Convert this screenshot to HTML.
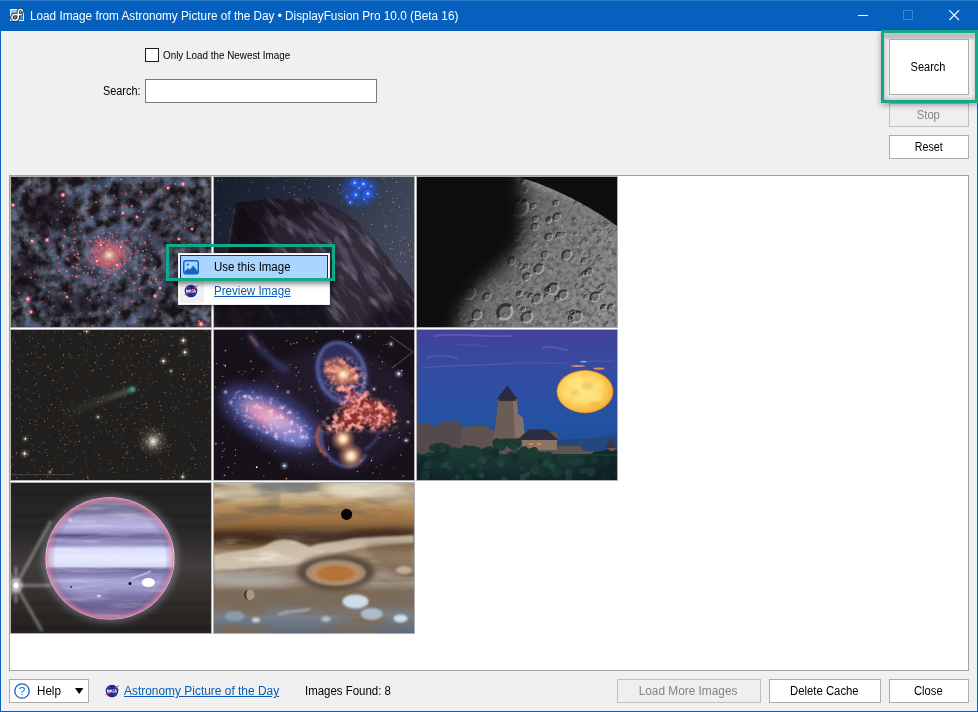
<!DOCTYPE html>
<html>
<head>
<meta charset="utf-8">
<title>Load Image from Astronomy Picture of the Day</title>
<style>
html,body{margin:0;padding:0;}
body{width:978px;height:712px;overflow:hidden;background:#f0f0f0;font-family:"Liberation Sans",sans-serif;font-size:12px;color:#000;position:relative;}
.abs{position:absolute;}
#win{position:absolute;left:0;top:0;width:976px;height:710px;border:1px solid #0961bd;background:#f0f0f0;}
#title{position:absolute;left:0;top:0;width:978px;height:31px;background:#0561bd;}
#title .cap{position:absolute;left:30px;top:9px;color:#fff;font-size:12px;line-height:15px;white-space:nowrap;}
.btn{position:absolute;box-sizing:border-box;padding-right:1.5px;border:1px solid #adadad;background:#fff;text-align:center;font-size:12px;line-height:22px;height:24px;white-space:nowrap;}
.btn.dis{background:#efefef;border-color:#bfbfbf;color:#838383;}
.green{position:absolute;box-sizing:border-box;border:3px solid #12a988;}
#panel{position:absolute;left:9px;top:175px;width:960px;height:496px;box-sizing:border-box;border:1px solid #a0a0a0;background:#fff;}
.cell{position:absolute;width:202px;height:152px;box-sizing:border-box;border:1px solid #b0b0b0;overflow:hidden;background:#111;}
.cell svg{display:block;width:200px;height:150px;}
.sx{display:inline-block;transform-origin:0 50%;white-space:nowrap;}
.btn .sx{transform-origin:50% 50%;}
a.lnk{color:#0a5bb8;text-decoration:underline;}
</style>
</head>
<body>
<div id="win"></div>

<!-- TITLE BAR -->
<div id="title">
  <svg class="abs" style="left:9px;top:7px" width="17" height="17" viewBox="0 0 17 17">
    <defs><linearGradient id="tig" x1="0" y1="0" x2="0" y2="1"><stop offset="0" stop-color="#a9d6f5"/><stop offset="1" stop-color="#1f78c4"/></linearGradient></defs>
    <rect x="1.5" y="2.5" width="13" height="11" fill="url(#tig)" stroke="#d8ecfa" stroke-width="1"/>
    <path d="M13.6 4.2 C13.2 2 10.2 1.6 9.4 4 L9.2 10.5 C9 13.8 4.4 14.2 3.2 11.6 C2.2 9 4.6 7 7 7.6 L12.6 7.6" fill="none" stroke="#111" stroke-width="3.2" stroke-linecap="round"/>
    <path d="M13.6 4.2 C13.2 2 10.2 1.6 9.4 4 L9.2 10.5 C9 13.8 4.4 14.2 3.2 11.6 C2.2 9 4.6 7 7 7.6 L12.6 7.6" fill="none" stroke="#f4f4f4" stroke-width="1.7" stroke-linecap="round"/>
  </svg>
  <div class="abs" style="left:0;top:0;width:978px;height:1px;background:#2a79c9"></div><div class="cap"><span class="sx" style="transform:scaleX(.980)">Load Image from Astronomy Picture of the Day &#8226; DisplayFusion Pro 10.0 (Beta 16)</span></div>
  <!-- caption buttons -->
  <div class="abs" style="left:858px;top:15px;width:10px;height:1px;background:#fff"></div>
  <div class="abs" style="left:903px;top:10px;width:10px;height:10px;box-sizing:border-box;border:1px solid #3f86cf"></div>
  <svg class="abs" style="left:949px;top:10px" width="11" height="11" viewBox="0 0 11 11"><path d="M0.3 0.3 L10 10 M10 0.3 L0.3 10" stroke="#fff" stroke-width="1.15" fill="none"/></svg>
</div>

<!-- TOP CONTROLS -->
<div class="abs" style="left:145px;top:48px;width:14px;height:14px;box-sizing:border-box;border:1px solid #1a1a1a;background:#fff"></div>
<div class="abs" style="left:163px;top:48px;font-size:10.5px;line-height:14px;white-space:nowrap;"><span class="sx" style="transform:scaleX(.94)">Only Load the Newest Image</span></div>
<div class="abs" style="left:103px;top:84px;font-size:12px;line-height:15px;white-space:nowrap;"><span class="sx" style="transform:scaleX(.907)">Search:</span></div>
<div class="abs" style="left:145px;top:79px;width:232px;height:24px;box-sizing:border-box;border:1px solid #7a7a7a;background:#fff"></div>

<!-- RIGHT BUTTONS -->
<div class="btn dis" style="left:889px;top:103px;width:80px;"><span class="sx" style="transform:scaleX(.93)">Stop</span></div>
<div class="btn" style="left:889px;top:135px;width:80px;"><span class="sx" style="transform:scaleX(.89)">Reset</span></div>
<div class="abs" style="left:884px;top:33px;width:92px;height:67px;background:#f0f0f0;box-shadow:inset 0 0 4px 1px rgba(0,0,0,.22);"></div>
<div class="abs" style="left:884px;top:33px;width:91px;height:7px;background:linear-gradient(to bottom,#c2c2c2,#bdbdbd 55%,#d2d2d2 85%,rgba(225,225,225,0));"></div>
<div class="btn" style="left:889px;top:39px;width:80px;height:56px;line-height:54px;"><span class="sx" style="transform:scaleX(.916)">Search</span></div>
<div class="green" style="left:881px;top:30px;width:97px;height:73px;box-shadow:0 2px 6px rgba(0,0,0,.35);"></div>

<!-- PANEL -->
<div id="panel"></div>
<div class="cell" style="left:10px;top:176px;" id="c1"><svg width="200" height="150" viewBox="0 0 200 150"><defs><radialGradient id="g1c" cx="0.5" cy="0.5" r="0.5"><stop offset="0" stop-color="#fff0e0" stop-opacity="1"/><stop offset="0.1" stop-color="#f0c0a8" stop-opacity=".9"/><stop offset="0.3" stop-color="#c07078" stop-opacity=".45"/><stop offset="0.65" stop-color="#68607c" stop-opacity=".22"/><stop offset="1" stop-color="#404a68" stop-opacity="0"/></radialGradient><radialGradient id="g1k"><stop offset="0" stop-color="#fff0f0"/><stop offset=".25" stop-color="#ffb0b8" stop-opacity=".95"/><stop offset=".55" stop-color="#e85868" stop-opacity=".6"/><stop offset="1" stop-color="#e04858" stop-opacity="0"/></radialGradient><filter id="g1b" x="-30%" y="-30%" width="160%" height="160%"><feGaussianBlur stdDeviation="3"/></filter><filter id="g1b2" x="-20%" y="-20%" width="140%" height="140%"><feGaussianBlur stdDeviation="0.75"/></filter><filter id="g1n" x="0" y="0" width="100%" height="100%"><feTurbulence type="fractalNoise" baseFrequency="0.1" numOctaves="4" seed="4" result="n"/><feColorMatrix in="n" type="matrix" values="0 0 0 0 0.30  0 0 0 0 0.37  0 0 0 0 0.52  0.0 0 0 1.9 -0.62"/></filter><filter id="g1d" x="0" y="0" width="100%" height="100%"><feTurbulence type="fractalNoise" baseFrequency="0.11" numOctaves="2" seed="9" result="n"/><feDisplacementMap in="SourceGraphic" in2="n" scale="10"/><feGaussianBlur stdDeviation="1.1"/></filter></defs><rect width="200" height="150" fill="#1a1418"/><rect width="200" height="150" filter="url(#g1n)" opacity=".75"/><g filter="url(#g1d)"><path d="M103.5 83.5 L103.0 84.1 L102.3 84.7 L101.6 85.2 L100.7 85.7 L99.8 86.1 L98.8 86.5 L97.7 86.8 L96.5 87.1 L95.2 87.2 L94.0 87.3 L92.6 87.2 L91.2 87.1 L89.8 86.8 L88.4 86.4 L87.1 85.8 L85.7 85.2 L84.4 84.4 L83.1 83.5 L82.0 82.5 L80.9 81.3 L80.0 80.0 L79.2 78.6 L78.5 77.1 L78.1 75.5 L77.8 73.8 L77.8 72.1 L78.0 70.3 L78.4 68.4 L79.1 66.6 L80.1 64.7 L81.3 62.9 L82.8 61.1 L84.6 59.3 L86.6 57.7 L89.0 56.2 L91.6 54.8 L94.5 53.6 L97.6 52.6 L100.9 51.8 L104.5 51.3 L108.2 51.0 L112.1 51.1 L116.0 51.4 L120.1 52.1 L124.1 53.1 L128.2 54.5 L132.2 56.2 L136.1 58.4 L139.8 60.9 L143.3 63.7 L146.5 67.0 L149.4 70.6 L151.9 74.5 L153.9 78.7 L155.4 83.3 L156.4 88.1 L156.8 93.1 L156.6 98.3 L155.6 103.6 L153.9 109.0 L151.5 114.5 L148.2 119.9 L144.2 125.2 L139.3 130.3 L133.6 135.2 L127.1 139.7 L119.9 143.9 L111.8 147.6 L103.0 150.8 L93.6 153.3 L83.5 155.2 L72.9 156.3 L61.8 156.5 L50.4 155.9 L38.7 154.4 L26.9 151.8 L15.1 148.2" fill="none" stroke="#566c94" stroke-width="9" stroke-linecap="round" opacity="0.55"/><path d="M92.5 72.5 L93.0 71.9 L93.7 71.3 L94.4 70.8 L95.3 70.3 L96.2 69.9 L97.2 69.5 L98.3 69.2 L99.5 68.9 L100.8 68.8 L102.0 68.7 L103.4 68.8 L104.8 68.9 L106.2 69.2 L107.6 69.6 L108.9 70.2 L110.3 70.8 L111.6 71.6 L112.9 72.5 L114.0 73.5 L115.1 74.7 L116.0 76.0 L116.8 77.4 L117.5 78.9 L117.9 80.5 L118.2 82.2 L118.2 83.9 L118.0 85.7 L117.6 87.6 L116.9 89.4 L115.9 91.3 L114.7 93.1 L113.2 94.9 L111.4 96.7 L109.4 98.3 L107.0 99.8 L104.4 101.2 L101.5 102.4 L98.4 103.4 L95.1 104.2 L91.5 104.7 L87.8 105.0 L83.9 104.9 L80.0 104.6 L75.9 103.9 L71.9 102.9 L67.8 101.5 L63.8 99.8 L59.9 97.6 L56.2 95.1 L52.7 92.3 L49.5 89.0 L46.6 85.4 L44.1 81.5 L42.1 77.3 L40.6 72.7 L39.6 67.9 L39.2 62.9 L39.4 57.7 L40.4 52.4 L42.1 47.0 L44.5 41.5 L47.8 36.1 L51.8 30.8 L56.7 25.7 L62.4 20.8 L68.9 16.3 L76.1 12.1 L84.2 8.4 L93.0 5.2 L102.4 2.7 L112.5 0.8 L123.1 -0.3 L134.2 -0.5 L145.6 0.1 L157.3 1.6 L169.1 4.2 L180.9 7.8" fill="none" stroke="#566c94" stroke-width="9" stroke-linecap="round" opacity="0.55"/><path d="M90.9 82.2 L90.1 81.7 L89.4 81.2 L88.7 80.6 L88.1 79.9 L87.5 79.2 L87.1 78.4 L86.7 77.5 L86.4 76.6 L86.3 75.6 L86.3 74.6 L86.4 73.5 L86.6 72.4 L87.0 71.4 L87.6 70.3 L88.3 69.2 L89.2 68.2 L90.2 67.2 L91.4 66.2 L92.8 65.3 L94.3 64.5 L96.0 63.8 L97.8 63.3 L99.7 62.8 L101.8 62.5 L103.9 62.3 L106.2 62.4 L108.5 62.6 L110.8 63.0 L113.2 63.5 L115.5 64.3 L117.8 65.4 L120.1 66.6 L122.2 68.0 L124.3 69.7 L126.1 71.6 L127.8 73.7 L129.3 76.0 L130.4 78.4 L131.3 81.1 L131.9 83.8 L132.1 86.8 L132.0 89.8 L131.4 92.9 L130.5 96.0 L129.0 99.2 L127.2 102.3 L124.8 105.4 L122.0 108.3 L118.7 111.2 L114.9 113.8 L110.7 116.2 L106.0 118.4 L100.9 120.2 L95.4 121.7 L89.6 122.8 L83.4 123.4 L77.0 123.6 L70.4 123.2 L63.6 122.3 L56.7 120.8 L49.9 118.8 L43.1 116.1 L36.4 112.8 L30.0 108.8 L24.0 104.2 L18.3 99.0 L13.2 93.2 L8.7 86.8 L4.9 79.8 L2.0 72.3 L-0.1 64.4 L-1.2 56.1 L-1.2 47.4 L-0.1 38.5 L2.2 29.4 L5.8 20.2 L10.7 11.1" fill="none" stroke="#566c94" stroke-width="6" stroke-linecap="round" opacity="0.42"/><path d="M105.1 73.8 L105.9 74.3 L106.6 74.8 L107.3 75.4 L107.9 76.1 L108.5 76.8 L108.9 77.6 L109.3 78.5 L109.6 79.4 L109.7 80.4 L109.7 81.4 L109.6 82.5 L109.4 83.6 L109.0 84.6 L108.4 85.7 L107.7 86.8 L106.8 87.8 L105.8 88.8 L104.6 89.8 L103.2 90.7 L101.7 91.5 L100.0 92.2 L98.2 92.7 L96.3 93.2 L94.2 93.5 L92.1 93.7 L89.8 93.6 L87.5 93.4 L85.2 93.0 L82.8 92.5 L80.5 91.7 L78.2 90.6 L75.9 89.4 L73.8 88.0 L71.7 86.3 L69.9 84.4 L68.2 82.3 L66.7 80.0 L65.6 77.6 L64.7 74.9 L64.1 72.2 L63.9 69.2 L64.0 66.2 L64.6 63.1 L65.5 60.0 L67.0 56.8 L68.8 53.7 L71.2 50.6 L74.0 47.7 L77.3 44.8 L81.1 42.2 L85.3 39.8 L90.0 37.6 L95.1 35.8 L100.6 34.3 L106.4 33.2 L112.6 32.6 L119.0 32.4 L125.6 32.8 L132.4 33.7 L139.3 35.2 L146.1 37.2 L152.9 39.9 L159.6 43.2 L166.0 47.2 L172.0 51.8 L177.7 57.0 L182.8 62.8 L187.3 69.2 L191.1 76.2 L194.0 83.7 L196.1 91.6 L197.2 99.9 L197.2 108.6 L196.1 117.5 L193.8 126.6 L190.2 135.8 L185.3 144.9" fill="none" stroke="#566c94" stroke-width="6" stroke-linecap="round" opacity="0.42"/><path d="M96.9 84.9 L95.9 85.0 L94.9 85.1 L93.9 85.0 L92.8 84.9 L91.8 84.7 L90.7 84.4 L89.7 84.0 L88.6 83.5 L87.6 82.9 L86.7 82.2 L85.8 81.4 L85.0 80.5 L84.3 79.5 L83.7 78.5 L83.2 77.3 L82.8 76.1 L82.6 74.8 L82.6 73.5 L82.7 72.1 L83.1 70.7 L83.6 69.3 L84.3 67.9 L85.3 66.5 L86.4 65.1 L87.8 63.8 L89.4 62.5 L91.1 61.4 L93.1 60.3 L95.3 59.4 L97.7 58.7 L100.2 58.1 L102.9 57.7 L105.8 57.5 L108.7 57.5 L111.7 57.7 L114.8 58.3 L117.9 59.0 L121.0 60.1 L124.0 61.4 L127.0 63.0 L129.8 64.9 L132.5 67.1 L134.9 69.6 L137.1 72.3 L139.0 75.3 L140.6 78.6 L141.8 82.0 L142.5 85.7 L142.8 89.5 L142.6 93.5 L141.9 97.5 L140.6 101.6 L138.7 105.8 L136.3 109.9 L133.2 113.9 L129.5 117.8 L125.2 121.5 L120.2 125.0 L114.6 128.2 L108.5 131.0 L101.8 133.4 L94.6 135.4 L87.0 136.8 L78.9 137.6 L70.4 137.8 L61.7 137.4 L52.8 136.2 L43.8 134.2 L34.8 131.5 L25.9 128.0 L17.2 123.6 L8.8 118.4 L0.8 112.4 L-6.6 105.6 L-13.3 97.9 L-19.2 89.5 L-24.2 80.4" fill="none" stroke="#566c94" stroke-width="4" stroke-linecap="round" opacity="0.3"/><path d="M99.1 71.1 L100.1 71.0 L101.1 70.9 L102.1 71.0 L103.2 71.1 L104.2 71.3 L105.3 71.6 L106.3 72.0 L107.4 72.5 L108.4 73.1 L109.3 73.8 L110.2 74.6 L111.0 75.5 L111.7 76.5 L112.3 77.5 L112.8 78.7 L113.2 79.9 L113.4 81.2 L113.4 82.5 L113.3 83.9 L112.9 85.3 L112.4 86.7 L111.7 88.1 L110.7 89.5 L109.6 90.9 L108.2 92.2 L106.6 93.5 L104.9 94.6 L102.9 95.7 L100.7 96.6 L98.3 97.3 L95.8 97.9 L93.1 98.3 L90.2 98.5 L87.3 98.5 L84.3 98.3 L81.2 97.7 L78.1 97.0 L75.0 95.9 L72.0 94.6 L69.0 93.0 L66.2 91.1 L63.5 88.9 L61.1 86.4 L58.9 83.7 L57.0 80.7 L55.4 77.4 L54.2 74.0 L53.5 70.3 L53.2 66.5 L53.4 62.5 L54.1 58.5 L55.4 54.4 L57.3 50.2 L59.7 46.1 L62.8 42.1 L66.5 38.2 L70.8 34.5 L75.8 31.0 L81.4 27.8 L87.5 25.0 L94.2 22.6 L101.4 20.6 L109.0 19.2 L117.1 18.4 L125.6 18.2 L134.3 18.6 L143.2 19.8 L152.2 21.8 L161.2 24.5 L170.1 28.0 L178.8 32.4 L187.2 37.6 L195.2 43.6 L202.6 50.4 L209.3 58.1 L215.2 66.5 L220.2 75.6" fill="none" stroke="#566c94" stroke-width="4" stroke-linecap="round" opacity="0.3"/></g><ellipse cx="38" cy="36" rx="24" ry="20" fill="#150e12" opacity="0.7" filter="url(#g1b)"/><ellipse cx="14" cy="98" rx="14" ry="22" fill="#150e12" opacity="0.6" filter="url(#g1b)"/><ellipse cx="62" cy="128" rx="24" ry="12" fill="#150e12" opacity="0.55" filter="url(#g1b)"/><ellipse cx="182" cy="104" rx="16" ry="26" fill="#150e12" opacity="0.6" filter="url(#g1b)"/><ellipse cx="120" cy="20" rx="16" ry="8" fill="#150e12" opacity="0.35" filter="url(#g1b)"/><ellipse cx="150" cy="130" rx="18" ry="9" fill="#150e12" opacity="0.45" filter="url(#g1b)"/><ellipse cx="62" cy="84" rx="8" ry="14" fill="#150e12" opacity="0.4" filter="url(#g1b)"/><ellipse cx="142" cy="66" rx="8" ry="14" fill="#150e12" opacity="0.35" filter="url(#g1b)"/><ellipse cx="98" cy="120" rx="14" ry="7" fill="#150e12" opacity="0.3" filter="url(#g1b)"/><g filter="url(#g1d)"><path d="M102.7 80.5 L102.5 81.1 L102.2 81.6 L101.7 82.2 L101.2 82.7 L100.6 83.1 L99.8 83.6 L99.0 83.9 L98.1 84.2 L97.1 84.5 L96.0 84.6 L94.9 84.6 L93.8 84.5 L92.6 84.4 L91.4 84.0 L90.2 83.6 L89.0 83.0 L87.9 82.3 L86.9 81.5 L85.9 80.5 L85.1 79.4 L84.5 78.2 L84.0 76.9 L83.7 75.5 L83.6 74.0 L83.7 72.5 L84.1 70.9 L84.7 69.3 L85.7 67.7 L86.9 66.1 L88.4 64.7 L90.2 63.3 L92.3 62.0 L94.6 60.9 L97.3 60.0" fill="none" stroke="#d87880" stroke-width="3.2" stroke-linecap="round" opacity=".55"/><path d="M93.3 75.5 L93.5 74.9 L93.8 74.4 L94.3 73.8 L94.8 73.3 L95.4 72.9 L96.2 72.4 L97.0 72.1 L97.9 71.8 L98.9 71.5 L100.0 71.4 L101.1 71.4 L102.2 71.5 L103.4 71.6 L104.6 72.0 L105.8 72.4 L107.0 73.0 L108.1 73.7 L109.1 74.5 L110.1 75.5 L110.9 76.6 L111.5 77.8 L112.0 79.1 L112.3 80.5 L112.4 82.0 L112.3 83.5 L111.9 85.1 L111.3 86.7 L110.3 88.3 L109.1 89.9 L107.6 91.3 L105.8 92.7 L103.7 94.0 L101.4 95.1 L98.7 96.0" fill="none" stroke="#d87880" stroke-width="3.2" stroke-linecap="round" opacity=".55"/><path d="M94.6 81.6 L93.9 81.4 L93.2 81.2 L92.6 80.8 L91.9 80.4 L91.4 79.8 L90.8 79.3 L90.4 78.6 L90.0 77.9 L89.8 77.1 L89.6 76.3 L89.6 75.4 L89.8 74.5 L90.0 73.6 L90.5 72.6 L91.1 71.7 L91.8 70.8 L92.8 70.0 L93.9 69.2 L95.1 68.5 L96.5 67.9 L98.1 67.4 L99.8 67.0 L101.6 66.8 L103.5 66.8 L105.5 67.0 L107.5 67.3 L109.5 67.9 L111.5 68.7 L113.5 69.7 L115.3 70.9 L117.0 72.3 L118.6 74.0 L119.9 75.9 L121.0 77.9" fill="none" stroke="#d87880" stroke-width="3.2" stroke-linecap="round" opacity=".55"/><path d="M101.4 74.4 L102.1 74.6 L102.8 74.8 L103.4 75.2 L104.1 75.6 L104.6 76.2 L105.2 76.7 L105.6 77.4 L106.0 78.1 L106.2 78.9 L106.4 79.7 L106.4 80.6 L106.2 81.5 L106.0 82.4 L105.5 83.4 L104.9 84.3 L104.2 85.2 L103.2 86.0 L102.1 86.8 L100.9 87.5 L99.5 88.1 L97.9 88.6 L96.2 89.0 L94.4 89.2 L92.5 89.2 L90.5 89.0 L88.5 88.7 L86.5 88.1 L84.5 87.3 L82.5 86.3 L80.7 85.1 L79.0 83.7 L77.4 82.0 L76.1 80.1 L75.0 78.1" fill="none" stroke="#d87880" stroke-width="3.2" stroke-linecap="round" opacity=".55"/></g><ellipse cx="98" cy="78" rx="30" ry="26" fill="url(#g1c)"/><g filter="url(#g1b2)"><path d="M100.9 82.4h0M99.2 86.3h0M85.8 84.6h0M78.9 64.4h0M151.5 73.7h0M114.5 94.1h0M103.6 98.1h0M65.9 99.8h0M55.8 94.2h0M110.1 2.5h0M85.4 73.7h0M89.9 65.0h0M106.1 64.4h0M106.1 64.5h0M128.4 98.0h0M123.3 106.2h0M108.3 74.7h0M109.0 87.0h0M67.0 76.9h0M81.1 40.0h0M120.7 29.0h0M80.9 74.5h0M87.5 60.1h0M145.1 102.3h0M128.5 111.6h0M97.1 134.6h0M-15.7 102.7h0M99.0 71.9h0M56.4 81.9h0M130.1 15.1h0" stroke="#f08088" stroke-width="2.2" stroke-linecap="round" fill="none" opacity=".8"/><path d="M102.9 83.1h0M96.9 87.4h0M86.5 87.8h0M130.3 51.8h0M144.0 133.6h0M123.9 144.9h0M89.4 154.2h0M22.9 151.0h0M95.3 68.7h0M89.9 106.7h0M64.6 99.3h0M48.5 93.8h0M91.8 82.2h0M85.1 79.9h0M88.4 65.9h0M97.9 63.3h0M115.6 63.4h0M133.5 90.8h0M103.7 121.0h0M20.0 100.6h0M107.5 74.6h0M97.3 92.9h0M66.6 87.4h0M68.4 81.5h0M103.1 34.8h0M188.1 144.2h0M81.5 72.4h0M134.1 65.3h0M140.8 82.4h0M144.4 90.3h0M108.5 135.4h0M100.3 71.2h0M101.0 72.6h0M101.7 69.6h0M105.3 70.7h0M107.9 90.1h0M77.0 96.4h0M65.7 91.0h0M62.2 89.9h0M52.2 68.6h0M53.9 59.4h0M85.1 25.1h0M167.1 24.9h0" stroke="#e86a70" stroke-width="2.2" stroke-linecap="round" fill="none" opacity=".8"/><path d="M102.8 84.6h0M80.2 80.3h0M80.1 64.3h0M107.0 51.2h0M113.2 46.9h0M117.3 52.9h0M126.0 143.8h0M73.7 153.1h0M91.9 70.1h0M113.8 75.0h0M111.6 96.0h0M108.7 99.9h0M97.0 104.1h0M83.8 107.7h0M37.9 65.3h0M37.3 60.9h0M58.8 29.3h0M88.4 80.4h0M86.0 73.1h0M121.5 69.6h0M118.6 112.7h0M4.4 65.1h0M1.1 40.7h0M110.2 80.1h0M102.6 89.6h0M68.9 84.0h0M66.3 59.9h0M80.7 43.3h0M185.0 79.3h0M197.2 128.3h0M84.4 80.4h0M142.3 92.3h0M141.2 110.6h0M-15.7 94.5h0M101.0 71.2h0M105.0 72.3h0M112.6 83.6h0M87.3 100.7h0M192.5 41.7h0" stroke="#f08088" stroke-width="1.0" stroke-linecap="round" fill="none" opacity=".8"/><path d="M103.1 85.3h0M99.9 87.2h0M99.5 85.5h0M94.3 91.3h0M77.3 67.3h0M85.6 56.3h0M128.1 54.1h0M147.9 69.9h0M107.5 69.9h0M114.4 89.6h0M44.8 77.9h0M86.2 78.2h0M98.1 62.2h0M122.7 100.0h0M4.1 72.7h0M-0.9 35.7h0M107.8 77.4h0M107.9 78.0h0M109.3 84.4h0M92.7 95.9h0M83.9 90.4h0M81.4 89.9h0M74.1 90.5h0M183.8 125.4h0M193.2 130.3h0M138.0 67.9h0M4.9 114.0h0M103.9 72.5h0M111.0 87.9h0M69.6 92.7h0M56.7 75.8h0M78.7 34.6h0M200.9 48.7h0" stroke="#e0505c" stroke-width="1.0" stroke-linecap="round" fill="none" opacity=".8"/><path d="M101.6 85.5h0M81.7 85.9h0M75.2 64.5h0M80.8 64.5h0M91.8 53.3h0M94.2 70.3h0M98.4 68.7h0M101.9 70.5h0M84.2 106.0h0M83.7 102.7h0M46.4 42.6h0M87.5 66.4h0M78.9 123.2h0M38.0 114.8h0M66.9 81.1h0M66.1 79.8h0M63.8 54.8h0M89.9 85.0h0M81.4 79.8h0M83.7 72.0h0M105.7 58.9h0M134.2 66.4h0M137.9 104.4h0M118.8 123.8h0M103.0 73.3h0M102.0 70.9h0M99.1 96.5h0M61.3 89.4h0" stroke="#d84858" stroke-width="2.2" stroke-linecap="round" fill="none" opacity=".8"/><path d="M101.6 84.4h0M118.7 50.1h0M155.5 86.2h0M59.6 160.7h0M90.9 71.2h0M109.3 70.9h0M120.6 77.1h0M118.9 81.5h0M93.0 103.5h0M47.1 80.5h0M100.8 2.7h0M129.7 5.5h0M142.3 0.7h0M164.2 7.0h0M88.1 74.5h0M88.8 66.2h0M92.3 65.6h0M111.2 64.7h0M102.7 92.0h0M99.7 93.3h0M96.4 95.9h0M88.7 95.0h0M82.9 91.0h0M62.1 73.1h0M132.4 34.7h0M197.9 95.6h0M85.9 83.8h0M132.2 73.9h0M135.0 72.6h0M139.8 106.0h0M121.3 124.7h0M113.8 86.6h0M53.5 52.8h0M184.7 37.9h0" stroke="#f08088" stroke-width="1.8" stroke-linecap="round" fill="none" opacity=".8"/><path d="M102.3 86.6h0M76.6 67.1h0M124.8 53.4h0M138.7 58.7h0M154.7 73.9h0M110.8 154.0h0M93.2 72.8h0M93.0 74.6h0M93.7 70.9h0M61.6 98.5h0M47.9 86.2h0M41.3 73.8h0M50.3 34.9h0M83.5 8.9h0M141.3 1.6h0M94.9 61.3h0M132.2 82.9h0M91.3 120.3h0M23.6 95.0h0M-0.4 83.0h0M1.3 74.9h0M110.0 76.2h0M105.9 74.3h0M110.0 78.9h0M60.9 70.0h0M111.6 30.2h0M198.8 101.8h0M90.8 84.2h0M83.6 74.9h0M85.7 65.2h0M84.8 63.8h0M101.4 57.5h0M129.4 67.3h0M139.1 100.1h0M131.1 110.7h0" stroke="#e0505c" stroke-width="2.2" stroke-linecap="round" fill="none" opacity=".8"/><path d="M96.9 86.5h0M93.1 87.7h0M91.1 89.4h0M82.0 82.9h0M77.4 75.8h0M123.4 53.7h0M74.7 160.8h0M50.1 154.5h0M94.9 72.1h0M103.6 68.9h0M57.8 99.0h0M47.5 91.1h0M86.5 77.5h0M86.8 72.4h0M112.7 63.8h0M131.4 94.6h0M132.2 96.4h0M104.0 116.5h0M13.7 96.9h0M0.2 75.5h0M0.4 42.3h0M109.1 86.7h0M104.4 90.9h0M69.6 54.3h0M128.2 34.4h0M152.1 41.4h0M159.9 39.3h0M170.6 45.7h0M164.8 48.7h0M173.8 51.0h0M179.2 66.7h0M189.5 75.5h0M95.6 84.1h0M89.6 86.9h0M92.0 81.7h0M83.6 67.4h0M130.8 61.2h0M142.6 74.6h0M104.8 128.7h0M31.3 124.9h0M114.4 81.0h0M99.1 94.2h0M56.5 77.0h0M200.2 48.3h0" stroke="#d84858" stroke-width="1.8" stroke-linecap="round" fill="none" opacity=".8"/><path d="M96.0 89.7h0M96.4 55.7h0M125.1 53.0h0M133.7 54.5h0M129.8 131.1h0M42.4 154.6h0M39.3 54.3h0M90.6 9.5h0M145.6 -3.2h0M89.3 78.4h0M89.3 77.1h0M90.5 70.3h0M93.7 64.3h0M90.1 92.4h0M68.4 87.1h0M65.3 73.3h0M71.3 50.0h0M74.6 39.0h0M92.5 37.3h0M140.7 41.1h0M181.7 52.2h0M199.5 90.3h0M183.3 148.3h0M88.4 83.6h0M88.7 62.8h0M116.6 60.2h0M119.2 58.9h0M140.3 78.6h0M115.5 127.7h0M53.9 137.1h0M-21.0 80.8h0M106.6 71.1h0M108.8 70.8h0M111.9 74.2h0M110.6 88.9h0M106.1 92.8h0M92.8 99.7h0M65.7 44.7h0M95.5 24.0h0M165.1 22.1h0M188.3 38.6h0M195.1 45.6h0" stroke="#e86a70" stroke-width="1.0" stroke-linecap="round" fill="none" opacity=".8"/><path d="M91.4 87.0h0M82.6 82.4h0M81.4 148.5h0M66.5 160.7h0M42.0 153.6h0M96.4 68.2h0M102.8 69.8h0M113.5 73.3h0M111.7 72.8h0M119.6 80.4h0M112.0 95.2h0M76.0 106.0h0M98.1 58.9h0M110.2 63.8h0M115.3 114.1h0M7.8 88.3h0M13.0 14.4h0M106.4 91.2h0M116.5 30.9h0M174.1 44.6h0M185.7 61.6h0M95.8 86.0h0M95.0 86.0h0M83.6 76.4h0M143.0 91.8h0M10.8 122.9h0M113.6 78.9h0M109.1 88.1h0M103.9 96.5h0M99.1 96.2h0M105.0 21.4h0M114.9 18.3h0M221.2 69.5h0" stroke="#f08088" stroke-width="1.4" stroke-linecap="round" fill="none" opacity=".8"/><path d="M92.1 87.5h0M144.6 133.9h0M99.7 67.8h0M106.2 73.0h0M119.1 84.0h0M100.4 105.2h0M74.4 103.8h0M72.9 102.3h0M40.4 46.1h0M90.4 82.1h0M87.0 71.0h0M106.3 63.7h0M126.1 75.5h0M99.5 115.0h0M47.9 116.7h0M24.5 102.5h0M110.7 78.8h0M110.0 81.0h0M96.2 93.0h0M67.1 74.8h0M62.0 68.7h0M92.3 85.1h0M86.3 81.2h0M86.0 63.8h0M89.0 62.8h0M100.8 56.8h0M120.4 61.4h0M88.0 133.9h0M101.9 72.1h0M111.1 72.6h0M110.7 73.4h0M108.6 91.4h0M103.6 97.9h0M76.2 98.3h0M54.3 74.5h0M65.8 40.5h0M76.3 31.4h0M129.8 17.5h0" stroke="#e0505c" stroke-width="1.4" stroke-linecap="round" fill="none" opacity=".8"/><path d="M90.1 88.9h0M87.9 82.7h0M156.9 92.5h0M150.4 105.2h0M151.9 116.4h0M145.9 128.8h0M83.3 151.5h0M106.7 68.7h0M108.5 72.4h0M116.9 76.1h0M113.1 92.5h0M52.5 91.6h0M42.8 78.1h0M43.1 67.6h0M89.3 81.7h0M85.9 72.1h0M86.5 68.1h0M93.5 65.9h0M124.3 70.2h0M118.1 113.0h0M60.7 125.2h0M8.9 22.3h0M13.1 13.7h0M81.2 92.8h0M75.0 89.4h0M73.2 89.4h0M197.8 111.6h0M97.1 87.5h0M84.2 82.6h0M94.6 61.7h0M57.1 140.5h0M108.9 86.3h0M61.8 41.6h0M67.2 39.4h0M73.9 31.5h0" stroke="#e86a70" stroke-width="1.4" stroke-linecap="round" fill="none" opacity=".8"/><path d="M86.0 85.4h0M84.0 60.1h0M86.9 58.9h0M92.6 56.5h0M98.8 55.5h0M113.4 51.4h0M155.7 96.1h0M155.4 102.2h0M112.7 75.1h0M51.6 24.5h0M52.9 28.7h0M94.9 8.9h0M87.5 75.6h0M87.3 69.0h0M94.7 63.7h0M101.8 59.8h0M120.4 66.3h0M126.9 74.0h0M130.3 78.5h0M133.3 83.2h0M76.5 121.3h0M59.8 124.4h0M33.0 110.1h0M105.3 79.3h0M108.6 86.7h0M63.7 77.9h0M63.2 65.7h0M63.0 62.0h0M115.3 29.1h0M158.4 47.4h0M188.5 127.0h0M95.9 86.4h0M95.0 86.1h0M90.2 63.5h0M106.4 55.6h0M78.9 136.4h0M42.3 129.3h0M8.1 115.9h0M80.8 95.5h0M72.5 95.8h0M94.5 18.6h0M103.0 18.6h0" stroke="#e86a70" stroke-width="1.8" stroke-linecap="round" fill="none" opacity=".8"/><path d="M82.0 81.9h0M85.2 82.3h0M98.1 54.3h0M158.9 94.8h0M98.9 68.2h0M116.5 78.1h0M116.6 76.0h0M120.7 83.6h0M113.2 90.5h0M39.9 55.8h0M47.5 34.0h0M124.5 67.6h0M114.5 109.9h0M86.9 119.6h0M2.1 73.2h0M104.8 74.1h0M106.8 75.2h0M110.2 81.4h0M102.2 92.0h0M98.5 93.0h0M92.8 96.3h0M88.3 37.5h0M144.1 37.4h0M169.8 50.9h0M183.1 67.9h0M110.3 58.7h0M124.1 124.9h0M102.3 130.9h0M69.7 135.9h0M61.3 140.3h0M47.8 136.5h0M113.3 80.0h0M73.2 92.7h0M56.3 60.8h0" stroke="#d84858" stroke-width="1.0" stroke-linecap="round" fill="none" opacity=".8"/><path d="M79.6 76.2h0M106.3 52.8h0M130.0 139.7h0M113.8 76.2h0M91.7 104.6h0M67.8 98.9h0M88.4 81.5h0M133.6 78.7h0M131.8 93.6h0M135.2 90.5h0M8.9 87.1h0M-0.2 26.6h0M77.9 90.7h0M64.6 62.2h0M90.9 38.4h0M95.4 84.2h0M91.0 83.2h0M90.2 85.3h0M82.7 75.0h0M142.0 101.3h0M113.8 83.5h0M97.5 96.6h0M93.8 99.7h0M58.0 83.6h0M52.9 71.1h0M73.9 41.2h0M115.3 16.1h0M141.2 17.7h0M150.6 19.8h0" stroke="#e0505c" stroke-width="1.8" stroke-linecap="round" fill="none" opacity=".8"/><path d="M82.7 64.6h0M139.3 62.2h0M140.0 66.7h0M113.3 149.0h0M104.1 67.3h0M119.5 87.8h0M102.9 104.6h0M75.3 105.3h0M38.2 51.8h0M66.3 29.2h0M86.6 77.7h0M117.7 63.4h0M125.4 73.3h0M124.5 72.1h0M130.3 88.0h0M122.5 108.0h0M55.0 116.2h0M49.0 116.0h0M20.2 97.3h0M105.1 77.2h0M111.0 83.3h0M106.8 88.5h0M105.1 89.8h0M160.0 41.2h0M202.0 107.8h0M81.2 66.6h0M26.7 132.8h0M-12.6 98.4h0M98.9 70.5h0M52.3 58.7h0M95.9 25.2h0M139.4 24.9h0M175.1 30.3h0" stroke="#d84858" stroke-width="1.4" stroke-linecap="round" fill="none" opacity=".8"/></g><circle cx="52" cy="18" r="3.74" fill="url(#g1k)"/><circle cx="36" cy="63" r="3.4" fill="url(#g1k)"/><circle cx="21" cy="64" r="2.72" fill="url(#g1k)"/><circle cx="17" cy="122" r="4.08" fill="url(#g1k)"/><circle cx="20" cy="135" r="3.06" fill="url(#g1k)"/><circle cx="190" cy="147" r="4.42" fill="url(#g1k)"/><circle cx="172" cy="7" r="3.4" fill="url(#g1k)"/><circle cx="157" cy="11" r="2.72" fill="url(#g1k)"/><circle cx="144" cy="119" r="3.06" fill="url(#g1k)"/><circle cx="149" cy="111" r="2.55" fill="url(#g1k)"/><circle cx="112" cy="36" r="2.72" fill="url(#g1k)"/><circle cx="126" cy="40" r="2.38" fill="url(#g1k)"/><circle cx="2" cy="28" r="3.06" fill="url(#g1k)"/><circle cx="56" cy="120" r="2.38" fill="url(#g1k)"/><circle cx="168" cy="62" r="2.55" fill="url(#g1k)"/><circle cx="181" cy="52" r="2.38" fill="url(#g1k)"/><circle cx="90" cy="68" r="2.72" fill="url(#g1k)"/><circle cx="106" cy="88" r="3.06" fill="url(#g1k)"/><circle cx="86" cy="84" r="2.72" fill="url(#g1k)"/><circle cx="110" cy="70" r="2.38" fill="url(#g1k)"/><path d="M149.0 134.3h0M53.4 115.3h0M1.4 33.7h0M87.0 8.9h0M182.2 100.2h0M24.1 140.3h0" stroke="#ffffff" stroke-width="0.8" stroke-linecap="round" opacity="0.6" fill="none"/><path d="M18.5 21.8h0M77.4 53.9h0M68.1 34.1h0M3.4 101.2h0M179.3 114.0h0M187.0 79.2h0M34.1 87.0h0M144.7 120.4h0M92.5 134.6h0M122.3 104.7h0M21.7 65.7h0M147.0 3.4h0M75.1 36.2h0M113.8 9.8h0M41.3 30.7h0" stroke="#ffffff" stroke-width="0.6" stroke-linecap="round" opacity="0.4" fill="none"/><path d="M22.8 21.0h0M135.1 16.0h0M140.6 130.9h0M94.8 19.1h0M73.7 46.7h0M171.2 62.3h0M18.3 76.5h0M173.3 111.2h0M120.1 121.5h0M44.7 29.9h0M196.3 35.4h0M41.7 0.6h0M96.0 31.3h0M116.4 37.2h0" stroke="#e8b090" stroke-width="0.6" stroke-linecap="round" opacity="0.4" fill="none"/><path d="M155.7 49.8h0M76.0 23.8h0M184.0 90.1h0M60.5 66.3h0M136.1 132.4h0M197.1 89.0h0M190.4 116.4h0M121.4 48.0h0M57.9 64.7h0" stroke="#c8d0e8" stroke-width="0.8" stroke-linecap="round" opacity="0.6" fill="none"/><path d="M98.5 56.7h0M37.3 122.7h0M63.1 115.3h0M170.4 49.4h0M17.5 62.3h0M54.1 43.8h0M80.4 125.1h0M25.1 82.9h0M120.5 105.1h0M88.4 123.3h0M121.8 109.8h0M73.2 9.4h0M12.1 133.0h0M94.5 135.9h0M166.4 62.4h0M167.0 124.4h0M88.2 8.3h0" stroke="#ffffff" stroke-width="0.8" stroke-linecap="round" opacity="0.4" fill="none"/><path d="M65.7 98.1h0M133.7 33.7h0M76.3 26.5h0M23.0 4.4h0M75.1 142.3h0M82.1 70.9h0M198.4 46.9h0M138.1 14.6h0M99.1 67.3h0M191.1 44.4h0M184.7 81.2h0M123.2 98.7h0M27.4 45.6h0M40.3 66.8h0M176.5 138.6h0M42.3 82.5h0M51.5 97.0h0" stroke="#c8d0e8" stroke-width="0.6" stroke-linecap="round" opacity="0.4" fill="none"/><path d="M107.9 73.5h0M175.2 145.8h0M149.4 115.1h0M8.7 9.2h0M198.1 67.0h0M91.9 2.2h0M104.7 62.5h0M19.3 124.6h0M82.9 107.9h0M169.5 24.0h0M48.8 59.0h0M197.6 133.2h0M164.7 102.0h0M51.9 7.0h0M30.8 2.3h0" stroke="#e8b090" stroke-width="0.8" stroke-linecap="round" opacity="0.4" fill="none"/><path d="M24.1 24.7h0M169.4 80.6h0M97.8 13.4h0M18.6 93.4h0M194.2 31.7h0M177.8 138.2h0M17.1 59.4h0M173.6 130.0h0" stroke="#c8d0e8" stroke-width="0.6" stroke-linecap="round" opacity="0.6" fill="none"/><path d="M93.6 55.5h0M57.1 43.9h0M192.1 61.4h0M39.6 137.0h0M183.8 125.3h0M185.1 101.7h0M197.7 76.4h0M15.9 63.7h0M57.9 113.9h0" stroke="#e8b090" stroke-width="0.6" stroke-linecap="round" opacity="0.6" fill="none"/><path d="M72.1 66.6h0M107.4 83.8h0M186.3 136.1h0M198.1 142.7h0M48.5 118.0h0M88.9 41.7h0M183.5 9.1h0M195.5 29.3h0M102.1 40.3h0M25.4 107.6h0M192.7 112.7h0M190.2 47.1h0M92.7 53.3h0M40.6 44.3h0M25.0 14.9h0M126.5 23.9h0M117.0 96.9h0M69.4 14.4h0" stroke="#c8d0e8" stroke-width="0.8" stroke-linecap="round" opacity="0.4" fill="none"/><path d="M150.2 75.5h0M28.3 45.1h0M103.2 148.3h0M185.1 126.2h0M118.2 20.1h0M127.9 52.3h0M140.4 34.9h0M26.7 89.1h0M14.7 66.8h0M40.0 146.7h0" stroke="#e8b090" stroke-width="0.8" stroke-linecap="round" opacity="0.6" fill="none"/><path d="M105.2 41.4h0M13.4 44.3h0" stroke="#ffffff" stroke-width="0.6" stroke-linecap="round" opacity="0.6" fill="none"/></svg></div>
<div class="cell" style="left:213px;top:176px;" id="c2"><svg width="200" height="150" viewBox="0 0 200 150"><defs><linearGradient id="g2s" x1="0" y1="0" x2="1" y2="0.35"><stop offset="0" stop-color="#161d2c"/><stop offset=".45" stop-color="#242c3e"/><stop offset=".8" stop-color="#384052"/><stop offset="1" stop-color="#444a5c"/></linearGradient><linearGradient id="g2r" x1="0" y1="0.2" x2="1" y2="0.8"><stop offset="0" stop-color="#17131c"/><stop offset=".3" stop-color="#27222f"/><stop offset=".6" stop-color="#342e3c"/><stop offset="1" stop-color="#28232f"/></linearGradient><filter id="g2b"><feGaussianBlur stdDeviation="1.1"/></filter><filter id="g2b3" x="-50%" y="-50%" width="200%" height="200%"><feGaussianBlur stdDeviation="3"/></filter><filter id="g2n" x="0" y="0" width="100%" height="100%"><feTurbulence type="fractalNoise" baseFrequency="0.035 0.16" numOctaves="4" seed="7"/><feColorMatrix type="matrix" values="0 0 0 0 0.50  0 0 0 0 0.46  0 0 0 0 0.58  0 0 0 2.4 -1.2"/></filter><clipPath id="g2c"><path d="M-2 152 C0 130 6 100 12 76 C16 58 18 40 20 30 C21 26 24 25 30 25 C44 23 66 20 88 21 C104 22 116 27 128 34 C142 42 152 52 162 64 C174 80 186 96 196 110 L202 120 L202 152 Z"/></clipPath></defs><rect width="200" height="150" fill="url(#g2s)"/><path d="M191.6 21.1h0M102.4 60.1h0M150.0 77.2h0M41.9 71.9h0M190.4 76.4h0M92.5 106.8h0" stroke="#ffffff" stroke-width="0.4" stroke-linecap="round" opacity="0.8" fill="none"/><path d="M140.4 110.9h0M106.2 109.3h0M44.5 95.7h0M194.4 67.9h0M172.7 49.8h0M176.7 71.7h0M114.5 80.2h0" stroke="#ffffff" stroke-width="1.0" stroke-linecap="round" opacity="0.8" fill="none"/><path d="M46.3 143.9h0M103.5 145.4h0M137.8 139.9h0M11.1 81.2h0M121.9 66.1h0M196.9 122.5h0M62.2 34.1h0M69.8 95.3h0M152.0 95.5h0M107.4 37.4h0M138.5 65.2h0M100.9 3.5h0" stroke="#b8c4e8" stroke-width="0.6" stroke-linecap="round" opacity="0.6" fill="none"/><path d="M137.1 138.6h0" stroke="#ffffff" stroke-width="0.8" stroke-linecap="round" opacity="0.2" fill="none"/><path d="M117.9 46.6h0M6.0 56.4h0M88.3 121.3h0M31.5 35.7h0M196.4 74.3h0M62.4 0.6h0M5.6 42.6h0" stroke="#b8c4e8" stroke-width="0.6" stroke-linecap="round" opacity="0.8" fill="none"/><path d="M139.7 91.8h0M186.2 84.9h0M30.0 98.6h0M24.5 44.2h0M145.3 123.1h0M144.6 144.0h0M13.3 123.9h0M67.0 132.4h0" stroke="#d0d8f0" stroke-width="0.6" stroke-linecap="round" opacity="0.8" fill="none"/><path d="M180.1 130.6h0M165.3 81.1h0M36.8 67.4h0" stroke="#d0d8f0" stroke-width="1.0" stroke-linecap="round" opacity="0.6" fill="none"/><path d="M165.0 100.1h0M13.5 36.5h0" stroke="#b8c4e8" stroke-width="0.6" stroke-linecap="round" opacity="0.2" fill="none"/><path d="M180.2 62.9h0M151.5 134.9h0M184.3 38.7h0M2.0 37.4h0M155.1 100.7h0M185.7 69.4h0" stroke="#d0d8f0" stroke-width="0.6" stroke-linecap="round" opacity="0.4" fill="none"/><path d="M79.5 138.7h0M141.5 20.3h0M198.5 28.9h0M191.7 60.9h0M47.8 97.0h0M133.6 117.6h0" stroke="#d0d8f0" stroke-width="0.6" stroke-linecap="round" opacity="0.6" fill="none"/><path d="M116.5 44.6h0M100.0 20.4h0M143.2 116.4h0M177.3 96.1h0M144.1 1.5h0M73.1 132.0h0M172.3 57.2h0" stroke="#d0d8f0" stroke-width="0.8" stroke-linecap="round" opacity="0.6" fill="none"/><path d="M71.1 64.8h0M75.4 15.6h0M6.2 92.0h0M1.8 38.5h0M7.4 3.4h0" stroke="#ffffff" stroke-width="0.6" stroke-linecap="round" opacity="0.8" fill="none"/><path d="M38.3 5.5h0M51.8 145.7h0M164.1 17.0h0M181.1 138.9h0M56.5 62.2h0M49.0 102.1h0M182.1 130.6h0" stroke="#b8c4e8" stroke-width="0.8" stroke-linecap="round" opacity="0.8" fill="none"/><path d="M147.8 98.3h0M190.5 101.9h0M185.2 44.8h0M59.5 1.0h0M34.6 13.8h0M10.9 40.9h0M2.9 48.3h0" stroke="#ffffff" stroke-width="0.4" stroke-linecap="round" opacity="0.4" fill="none"/><path d="M165.6 138.2h0M126.2 46.1h0M171.6 134.5h0M31.0 138.5h0M118.5 128.1h0M100.5 33.5h0M155.3 120.9h0M0.0 95.0h0M9.4 96.9h0M15.5 31.1h0M179.0 21.2h0M83.8 125.4h0M0.1 139.6h0" stroke="#d0d8f0" stroke-width="0.8" stroke-linecap="round" opacity="0.8" fill="none"/><path d="M95.2 9.9h0M70.1 10.9h0M77.8 43.3h0M4.0 4.0h0M98.0 120.4h0M129.3 80.5h0M23.6 94.0h0M187.9 129.4h0M65.3 34.9h0M186.4 77.2h0" stroke="#ffffff" stroke-width="0.8" stroke-linecap="round" opacity="0.8" fill="none"/><path d="M164.0 91.3h0M58.5 23.8h0" stroke="#b8c4e8" stroke-width="1.0" stroke-linecap="round" opacity="0.2" fill="none"/><path d="M70.0 9.6h0M188.2 17.7h0M178.2 149.0h0" stroke="#b8c4e8" stroke-width="0.4" stroke-linecap="round" opacity="0.6" fill="none"/><path d="M86.9 40.3h0M190.5 115.0h0M197.1 148.7h0M171.2 50.8h0" stroke="#d0d8f0" stroke-width="0.4" stroke-linecap="round" opacity="0.8" fill="none"/><path d="M135.8 149.0h0M43.4 70.9h0M27.6 82.6h0M76.4 44.3h0M86.0 12.6h0M92.0 2.1h0M10.1 104.8h0" stroke="#ffffff" stroke-width="0.8" stroke-linecap="round" opacity="0.6" fill="none"/><path d="M36.1 41.5h0M186.8 149.9h0M63.9 19.8h0M102.0 87.7h0M128.9 135.8h0" stroke="#ffffff" stroke-width="0.4" stroke-linecap="round" opacity="0.6" fill="none"/><path d="M80.6 17.6h0M95.2 98.3h0M130.6 137.7h0" stroke="#ffffff" stroke-width="1.0" stroke-linecap="round" opacity="0.6" fill="none"/><path d="M7.7 56.7h0M20.4 75.8h0" stroke="#ffffff" stroke-width="1.0" stroke-linecap="round" opacity="0.2" fill="none"/><path d="M150.7 95.3h0M90.4 57.7h0M64.2 54.5h0M163.4 80.2h0M158.4 85.6h0" stroke="#d0d8f0" stroke-width="0.4" stroke-linecap="round" opacity="0.6" fill="none"/><path d="M92.9 37.4h0M190.1 77.1h0M119.6 105.9h0M78.5 136.5h0M116.7 125.2h0M153.0 26.2h0M86.5 139.5h0M119.0 17.3h0M21.4 2.5h0" stroke="#ffffff" stroke-width="0.6" stroke-linecap="round" opacity="0.4" fill="none"/><path d="M11.4 74.8h0M174.3 109.3h0" stroke="#d0d8f0" stroke-width="0.8" stroke-linecap="round" opacity="0.2" fill="none"/><path d="M140.1 41.6h0M129.5 41.8h0M181.4 123.7h0M62.1 83.7h0M78.1 11.2h0M62.1 128.7h0M105.7 132.7h0M3.8 65.1h0M33.4 86.1h0" stroke="#d0d8f0" stroke-width="1.0" stroke-linecap="round" opacity="0.4" fill="none"/><path d="M169.3 35.0h0M35.1 12.6h0M129.1 76.1h0M4.3 106.1h0M199.8 23.4h0M84.4 84.2h0M8.9 146.9h0M61.4 59.0h0M194.3 38.5h0M196.6 4.9h0M26.7 55.9h0" stroke="#d0d8f0" stroke-width="0.8" stroke-linecap="round" opacity="0.4" fill="none"/><path d="M128.0 26.3h0M188.4 109.0h0M147.5 1.6h0M98.8 102.7h0M180.8 109.2h0M132.5 96.7h0M35.4 75.5h0M17.1 52.9h0M75.0 84.6h0" stroke="#b8c4e8" stroke-width="1.0" stroke-linecap="round" opacity="0.8" fill="none"/><path d="M55.6 23.9h0M152.4 24.2h0M153.7 0.2h0M17.8 56.2h0M72.3 4.0h0M3.3 117.5h0M15.8 54.7h0M65.6 129.2h0" stroke="#b8c4e8" stroke-width="1.0" stroke-linecap="round" opacity="0.6" fill="none"/><path d="M174.8 114.3h0M2.0 12.3h0M36.3 31.5h0M178.3 145.0h0M29.7 127.6h0M171.6 67.1h0M95.3 36.9h0M111.8 32.6h0M175.7 96.4h0M114.9 115.4h0" stroke="#ffffff" stroke-width="0.6" stroke-linecap="round" opacity="0.6" fill="none"/><path d="M141.4 12.9h0M137.3 121.0h0M110.8 53.2h0M107.6 48.9h0M137.3 17.2h0M150.9 58.6h0M80.4 9.7h0M126.3 135.9h0M77.2 49.4h0" stroke="#ffffff" stroke-width="1.0" stroke-linecap="round" opacity="0.4" fill="none"/><path d="M0.1 48.2h0M83.0 53.1h0M52.4 130.3h0M21.7 144.7h0M37.8 39.1h0" stroke="#b8c4e8" stroke-width="1.0" stroke-linecap="round" opacity="0.4" fill="none"/><path d="M115.0 78.8h0M91.8 127.9h0M52.8 85.4h0M97.4 69.6h0M149.2 48.5h0M10.2 2.8h0M70.5 44.2h0M140.8 1.4h0M62.8 9.0h0M127.2 23.7h0M52.7 112.1h0M138.9 129.9h0" stroke="#b8c4e8" stroke-width="0.8" stroke-linecap="round" opacity="0.4" fill="none"/><path d="M45.5 93.2h0M54.0 10.9h0M82.5 111.6h0M114.4 9.6h0M126.6 102.2h0M144.8 116.4h0M178.5 64.8h0" stroke="#d0d8f0" stroke-width="1.0" stroke-linecap="round" opacity="0.8" fill="none"/><path d="M150.3 83.4h0M25.4 102.1h0M148.8 95.6h0M63.1 124.8h0M73.4 142.2h0M104.6 89.5h0M122.7 68.5h0M90.4 6.7h0" stroke="#ffffff" stroke-width="0.8" stroke-linecap="round" opacity="0.4" fill="none"/><path d="M75.4 101.2h0M116.1 34.2h0M122.6 76.6h0M73.0 145.9h0M126.2 56.7h0M33.5 108.5h0M146.1 108.2h0M176.9 142.3h0" stroke="#b8c4e8" stroke-width="0.6" stroke-linecap="round" opacity="0.4" fill="none"/><path d="M116.6 68.8h0M9.1 9.6h0M4.2 44.3h0" stroke="#b8c4e8" stroke-width="0.8" stroke-linecap="round" opacity="0.2" fill="none"/><path d="M54.1 43.7h0M58.4 0.1h0" stroke="#b8c4e8" stroke-width="0.4" stroke-linecap="round" opacity="0.8" fill="none"/><path d="M69.7 149.0h0M197.4 123.7h0" stroke="#b8c4e8" stroke-width="0.8" stroke-linecap="round" opacity="0.6" fill="none"/><path d="M49.6 115.2h0M134.9 141.4h0" stroke="#b8c4e8" stroke-width="0.4" stroke-linecap="round" opacity="0.4" fill="none"/><path d="M100.1 103.8h0M196.1 74.9h0M129.1 101.2h0M35.9 37.2h0" stroke="#d0d8f0" stroke-width="0.4" stroke-linecap="round" opacity="0.4" fill="none"/><path d="M146.5 33.0h0" stroke="#d0d8f0" stroke-width="0.6" stroke-linecap="round" opacity="0.2" fill="none"/><path d="M53.8 35.1h0" stroke="#b8c4e8" stroke-width="0.4" stroke-linecap="round" opacity="0.2" fill="none"/><path d="M146.2 83.9h0M144.5 95.6h0M175.3 108.9h0M145.2 50.4h0M126.7 98.7h0M156.8 62.8h0M124.1 72.2h0M182.5 5.3h0" stroke="#d0d8f0" stroke-width="1.0" stroke-linecap="round" opacity="0.8" fill="none"/><path d="M182.5 49.2h0M125.1 15.8h0" stroke="#d0d8f0" stroke-width="1.0" stroke-linecap="round" opacity="0.6" fill="none"/><path d="M170.8 4.7h0M156.1 51.6h0M170.0 38.4h0M133.6 72.5h0" stroke="#ffffff" stroke-width="0.4" stroke-linecap="round" opacity="0.8" fill="none"/><path d="M123.8 44.1h0M183.1 112.9h0M177.3 77.3h0" stroke="#d0d8f0" stroke-width="0.4" stroke-linecap="round" opacity="0.6" fill="none"/><path d="M141.8 29.1h0M155.7 68.5h0M137.8 43.9h0M135.8 46.9h0M187.7 17.9h0M132.2 18.6h0M183.1 78.7h0" stroke="#d0d8f0" stroke-width="0.6" stroke-linecap="round" opacity="0.4" fill="none"/><path d="M126.1 113.1h0M127.7 16.6h0M146.6 11.8h0M166.7 67.7h0M183.1 81.9h0M164.8 26.8h0M121.8 4.9h0M179.2 32.1h0M173.1 47.7h0M159.2 81.1h0M197.9 49.8h0" stroke="#ffffff" stroke-width="0.6" stroke-linecap="round" opacity="0.4" fill="none"/><path d="M176.5 66.4h0M187.5 38.3h0M166.0 26.4h0M160.3 120.9h0M124.4 107.1h0M153.8 17.6h0M135.7 25.4h0M171.3 0.2h0M132.8 12.7h0M143.4 116.1h0M123.4 49.8h0M198.4 93.5h0" stroke="#d0d8f0" stroke-width="0.6" stroke-linecap="round" opacity="0.8" fill="none"/><path d="M178.1 89.7h0M149.5 79.9h0M127.2 97.6h0M159.4 76.7h0M196.7 63.4h0M180.7 25.6h0M196.4 123.3h0M168.8 104.3h0M133.8 40.7h0M171.4 45.4h0" stroke="#d0d8f0" stroke-width="0.6" stroke-linecap="round" opacity="0.6" fill="none"/><path d="M154.3 5.2h0M177.0 48.2h0M135.5 89.7h0M151.6 84.3h0M126.2 108.0h0M147.9 111.5h0M189.6 59.3h0M177.2 33.8h0" stroke="#ffffff" stroke-width="0.8" stroke-linecap="round" opacity="0.4" fill="none"/><path d="M183.4 97.9h0M170.4 49.1h0M166.3 113.7h0M126.0 7.5h0M129.3 43.2h0M178.9 25.2h0M143.9 27.7h0M138.5 47.7h0M157.6 47.5h0M173.0 14.4h0M187.4 75.4h0M134.2 89.9h0" stroke="#ffffff" stroke-width="0.8" stroke-linecap="round" opacity="0.8" fill="none"/><path d="M138.8 102.2h0M148.8 37.4h0M185.6 30.1h0M191.5 84.3h0M162.8 17.3h0" stroke="#ffffff" stroke-width="1.0" stroke-linecap="round" opacity="0.6" fill="none"/><path d="M162.9 68.6h0M147.1 98.7h0M168.8 1.8h0M189.1 61.3h0M129.7 46.5h0M165.8 20.1h0M141.3 5.1h0M179.5 71.9h0" stroke="#d0d8f0" stroke-width="0.8" stroke-linecap="round" opacity="0.8" fill="none"/><path d="M148.7 90.6h0M189.1 101.6h0M198.0 79.4h0M136.6 58.7h0M120.9 50.6h0M159.3 19.9h0M172.6 107.5h0M186.2 63.5h0M151.9 68.8h0M194.2 109.6h0" stroke="#ffffff" stroke-width="0.8" stroke-linecap="round" opacity="0.6" fill="none"/><path d="M168.9 57.5h0M172.9 108.2h0M164.2 97.4h0M177.3 14.2h0M183.0 21.2h0M190.9 85.7h0M142.1 114.5h0M194.5 44.7h0" stroke="#d0d8f0" stroke-width="0.8" stroke-linecap="round" opacity="0.4" fill="none"/><path d="M183.6 83.8h0M195.1 73.0h0M135.5 90.9h0M142.3 82.4h0M151.1 64.4h0M158.9 114.4h0M165.2 72.7h0M122.6 86.3h0M186.0 94.6h0M135.8 7.7h0" stroke="#d0d8f0" stroke-width="0.8" stroke-linecap="round" opacity="0.6" fill="none"/><path d="M164.0 112.2h0M167.7 104.7h0M178.6 105.1h0" stroke="#ffffff" stroke-width="1.0" stroke-linecap="round" opacity="0.8" fill="none"/><path d="M138.4 87.7h0M123.6 40.4h0M176.9 117.8h0M156.2 65.7h0M123.7 12.1h0M148.3 122.0h0M122.6 101.9h0" stroke="#ffffff" stroke-width="0.6" stroke-linecap="round" opacity="0.8" fill="none"/><path d="M182.3 21.4h0M199.8 102.4h0M142.3 82.5h0M140.4 2.4h0" stroke="#ffffff" stroke-width="0.4" stroke-linecap="round" opacity="0.6" fill="none"/><path d="M129.9 41.5h0M163.8 62.1h0M135.9 106.9h0" stroke="#d0d8f0" stroke-width="1.0" stroke-linecap="round" opacity="0.4" fill="none"/><path d="M148.5 122.8h0M178.3 120.4h0M138.3 78.2h0M139.0 3.8h0M137.0 52.7h0M137.0 23.1h0M182.9 54.6h0M192.1 31.1h0" stroke="#ffffff" stroke-width="0.6" stroke-linecap="round" opacity="0.6" fill="none"/><path d="M170.8 42.1h0M152.7 95.9h0M194.4 113.8h0M198.1 81.4h0" stroke="#d0d8f0" stroke-width="0.4" stroke-linecap="round" opacity="0.4" fill="none"/><path d="M194.7 32.6h0M146.3 63.3h0" stroke="#ffffff" stroke-width="0.4" stroke-linecap="round" opacity="0.4" fill="none"/><path d="M140.1 47.5h0M178.8 1.6h0M129.3 13.9h0M176.1 99.0h0" stroke="#ffffff" stroke-width="1.0" stroke-linecap="round" opacity="0.4" fill="none"/><path d="M132.9 123.9h0M153.1 25.6h0" stroke="#d0d8f0" stroke-width="0.4" stroke-linecap="round" opacity="0.8" fill="none"/><ellipse cx="146" cy="14" rx="18" ry="15" fill="#2458e0" opacity=".5" filter="url(#g2b3)"/><circle cx="140.7" cy="5.8" r="4.0" fill="#2a66ff" opacity=".85" filter="url(#g2b)"/><circle cx="140.7" cy="5.8" r="1.045" fill="#d8e8ff"/><circle cx="149.4" cy="6.9" r="4.2" fill="#2a66ff" opacity=".85" filter="url(#g2b)"/><circle cx="149.4" cy="6.9" r="1.1" fill="#d8e8ff"/><circle cx="141.8" cy="17.8" r="3.8" fill="#2a66ff" opacity=".85" filter="url(#g2b)"/><circle cx="141.8" cy="17.8" r="0.9900000000000001" fill="#d8e8ff"/><circle cx="153.8" cy="16.7" r="4.4" fill="#2a66ff" opacity=".85" filter="url(#g2b)"/><circle cx="153.8" cy="16.7" r="1.1550000000000002" fill="#d8e8ff"/><circle cx="136.3" cy="25.5" r="2.7" fill="#2a66ff" opacity=".85" filter="url(#g2b)"/><circle cx="136.3" cy="25.5" r="0.7150000000000001" fill="#d8e8ff"/><circle cx="145" cy="11" r="2.5" fill="#2a66ff" opacity=".85" filter="url(#g2b)"/><circle cx="145" cy="11" r="0.66" fill="#d8e8ff"/><circle cx="150" cy="22" r="2.1" fill="#2a66ff" opacity=".85" filter="url(#g2b)"/><circle cx="150" cy="22" r="0.55" fill="#d8e8ff"/><circle cx="133" cy="20" r="1.9" fill="#2a66ff" opacity=".85" filter="url(#g2b)"/><circle cx="133" cy="20" r="0.49500000000000005" fill="#d8e8ff"/><circle cx="157" cy="9" r="2.1" fill="#2a66ff" opacity=".85" filter="url(#g2b)"/><circle cx="157" cy="9" r="0.55" fill="#d8e8ff"/><path d="M-2 152 C0 130 6 100 12 76 C16 58 18 40 20 30 C21 26 24 25 30 25 C44 23 66 20 88 21 C104 22 116 27 128 34 C142 42 152 52 162 64 C174 80 186 96 196 110 L202 120 L202 152 Z" fill="url(#g2r)"/><g clip-path="url(#g2c)"><g transform="rotate(52 100 75)"><rect x="-80" y="-80" width="360" height="310" filter="url(#g2n)" opacity=".5"/></g><path d="M-4 152 L2 120 L12 72 L20 28 L30 26 L48 44 L58 76 L54 112 L48 152 Z" fill="#120e17" opacity=".85" filter="url(#g2b3)"/><path d="M40 152 L60 112 L104 124 L126 152 Z" fill="#100c15" opacity=".8" filter="url(#g2b3)"/><path d="M150 152 L168 122 L202 130 L202 152 Z" fill="#15111a" opacity=".7" filter="url(#g2b3)"/><path d="M28 30 C50 26 80 24 104 28 C96 40 70 44 40 44 Z" fill="#15111a" opacity=".55" filter="url(#g2b3)"/><path d="M66 40 L96 60" stroke="#9088a4" stroke-width="5" stroke-linecap="round" opacity="0.3" filter="url(#g2b)"/><path d="M100 36 L128 56" stroke="#9088a4" stroke-width="4" stroke-linecap="round" opacity="0.28" filter="url(#g2b)"/><path d="M122 62 L142 100" stroke="#9088a4" stroke-width="6" stroke-linecap="round" opacity="0.3" filter="url(#g2b)"/><path d="M84 72 L102 108" stroke="#9088a4" stroke-width="6" stroke-linecap="round" opacity="0.2" filter="url(#g2b)"/><path d="M138 72 L162 106" stroke="#9088a4" stroke-width="4" stroke-linecap="round" opacity="0.22" filter="url(#g2b)"/><path d="M152 98 L174 132" stroke="#9088a4" stroke-width="5" stroke-linecap="round" opacity="0.2" filter="url(#g2b)"/><path d="M104 100 L122 138" stroke="#9088a4" stroke-width="5" stroke-linecap="round" opacity="0.16" filter="url(#g2b)"/><path d="M96 54 L116 66" stroke="#9088a4" stroke-width="4" stroke-linecap="round" opacity="0.25" filter="url(#g2b)"/><path d="M20 30 C18 44 15 62 11 80 C8 94 4 110 2 124" stroke="#5e586c" stroke-width="1.5" fill="none" opacity=".75" filter="url(#g2b)"/></g></svg></div>
<div class="cell" style="left:416px;top:176px;" id="c3"><svg width="200" height="150" viewBox="0 0 200 150"><defs><linearGradient id="g3m" x1="0.12" y1="0.35" x2="1" y2="0.75"><stop offset="0" stop-color="#343434"/><stop offset=".25" stop-color="#5e5e5e"/><stop offset=".6" stop-color="#7c7c7c"/><stop offset="1" stop-color="#8c8c8c"/></linearGradient><filter id="g3b" x="-30%" y="-30%" width="160%" height="160%"><feGaussianBlur stdDeviation="8"/></filter><filter id="g3b1"><feGaussianBlur stdDeviation=".5"/></filter><filter id="g3b3" x="-50%" y="-50%" width="200%" height="200%"><feGaussianBlur stdDeviation="3"/></filter><filter id="g3n" x="0" y="0" width="100%" height="100%"><feTurbulence type="fractalNoise" baseFrequency="0.2" numOctaves="3" seed="3"/><feColorMatrix type="matrix" values="0 0 0 0 0.08  0 0 0 0 0.08  0 0 0 0 0.08  0 0 0 2.4 -1.0"/></filter><filter id="g3w" x="0" y="0" width="100%" height="100%"><feTurbulence type="fractalNoise" baseFrequency="0.25" numOctaves="2" seed="13"/><feColorMatrix type="matrix" values="0 0 0 0 0.85  0 0 0 0 0.85  0 0 0 0 0.85  0 0 0 2.6 -1.5"/></filter><clipPath id="g3c"><path d="M94 -2 C120 4 165 22 204 52 L204 154 L12 154 C18 132 28 112 42 100 C58 86 78 70 84 50 C90 30 88 10 90 -2 Z"/></clipPath><mask id="g3k"><rect width="200" height="150" fill="#000"/><path d="M106 -16 C130 -6 170 20 220 58 L220 170 L36 170 C40 140 50 120 64 108 C82 92 102 76 106 56 C110 36 102 4 106 -16 Z" fill="#fff" filter="url(#g3b)"/></mask></defs><rect width="200" height="150" fill="#0e0e0e"/><g clip-path="url(#g3c)"><g mask="url(#g3k)"><rect width="200" height="150" fill="url(#g3m)"/><rect width="200" height="150" filter="url(#g3n)" opacity=".85"/><rect width="200" height="150" filter="url(#g3w)" opacity=".3"/><ellipse cx="84" cy="62" rx="14" ry="12" fill="#2a2a2a" opacity=".6" filter="url(#g3b3)"/><ellipse cx="86" cy="97" rx="10" ry="8" fill="#5c5c5c" opacity=".6" filter="url(#g3b1)"/><path d="M94 -2 C120 4 165 22 204 52" stroke="#cccccc" stroke-width="9" fill="none" opacity=".4" filter="url(#g3b3)"/><g fill="#6a6a6a" opacity=".5"><circle cx="103.0" cy="31.0" r="9.0"/><circle cx="52.0" cy="116.0" r="7.0"/><circle cx="122.0" cy="92.0" r="5.0"/><circle cx="136.0" cy="112.0" r="6.0"/><circle cx="146.0" cy="118.0" r="5.0"/><circle cx="88.0" cy="135.0" r="8.0"/><circle cx="110.0" cy="140.0" r="6.0"/><circle cx="95.0" cy="84.0" r="4.0"/><circle cx="132.0" cy="60.0" r="4.0"/><circle cx="150.0" cy="78.0" r="5.0"/><circle cx="70.0" cy="120.0" r="4.0"/><circle cx="160.0" cy="140.0" r="6.0"/><circle cx="178.0" cy="120.0" r="5.0"/><circle cx="120.0" cy="122.0" r="5.0"/><circle cx="100.0" cy="60.0" r="4.0"/><circle cx="60.0" cy="138.0" r="5.0"/><circle cx="172.0" cy="95.0" r="4.0"/><circle cx="140.0" cy="40.0" r="4.0"/><circle cx="118.0" cy="50.0" r="3.5"/><circle cx="110.0" cy="100.0" r="4.0"/><circle cx="128.0" cy="78.0" r="3.5"/><circle cx="106.2" cy="132.0" r="2.5"/><circle cx="183.6" cy="28.0" r="3.0"/><circle cx="189.8" cy="48.1" r="2.5"/><circle cx="74.2" cy="46.4" r="2.0"/><circle cx="181.8" cy="111.5" r="2.0"/><circle cx="178.3" cy="54.7" r="2.5"/><circle cx="141.8" cy="58.3" r="3.0"/><circle cx="105.2" cy="53.7" r="2.5"/><circle cx="101.8" cy="129.1" r="2.0"/><circle cx="32.6" cy="72.2" r="2.0"/><circle cx="22.7" cy="81.3" r="2.0"/><circle cx="183.8" cy="109.4" r="2.0"/><circle cx="26.0" cy="13.1" r="3.0"/><circle cx="105.1" cy="93.3" r="2.0"/><circle cx="132.0" cy="42.9" r="3.0"/><circle cx="186.6" cy="130.3" r="3.0"/><circle cx="55.8" cy="28.3" r="3.0"/><circle cx="21.2" cy="140.9" r="2.0"/><circle cx="102.3" cy="117.1" r="3.0"/><circle cx="149.4" cy="14.7" r="2.0"/><circle cx="66.5" cy="26.0" r="2.5"/><circle cx="43.4" cy="120.0" r="2.5"/><circle cx="109.2" cy="89.9" r="3.0"/><circle cx="157.2" cy="42.9" r="2.0"/><circle cx="167.8" cy="28.2" r="2.0"/><circle cx="112.9" cy="118.4" r="2.0"/><circle cx="130.9" cy="112.8" r="3.0"/><circle cx="109.6" cy="116.9" r="2.0"/><circle cx="151.4" cy="136.1" r="2.0"/><circle cx="62.2" cy="100.2" r="2.0"/><circle cx="164.2" cy="66.6" r="2.0"/><circle cx="193.6" cy="55.3" r="2.0"/><circle cx="105.8" cy="26.3" r="2.0"/><circle cx="181.9" cy="79.6" r="2.0"/><circle cx="20.6" cy="14.5" r="2.0"/><circle cx="52.4" cy="147.1" r="2.0"/><circle cx="65.4" cy="65.1" r="2.5"/><circle cx="118.5" cy="42.1" r="3.0"/><circle cx="182.5" cy="64.9" r="2.5"/><circle cx="48.5" cy="141.9" r="2.0"/><circle cx="53.0" cy="22.5" r="2.0"/><circle cx="193.8" cy="130.2" r="3.0"/><circle cx="184.4" cy="114.8" r="2.5"/><circle cx="154.2" cy="140.6" r="3.0"/><circle cx="126.7" cy="83.5" r="2.0"/><circle cx="57.7" cy="82.0" r="2.0"/><circle cx="67.0" cy="50.7" r="2.5"/><circle cx="167.0" cy="83.8" r="3.0"/><circle cx="148.6" cy="4.6" r="2.5"/><circle cx="88.1" cy="51.6" r="2.5"/><circle cx="118.6" cy="4.0" r="2.5"/><circle cx="173.5" cy="85.2" r="2.0"/><circle cx="190.1" cy="146.7" r="2.0"/><circle cx="55.4" cy="146.6" r="3.0"/><circle cx="160.0" cy="108.5" r="2.0"/><circle cx="186.4" cy="130.6" r="2.5"/><circle cx="81.2" cy="56.7" r="3.0"/><circle cx="155.6" cy="135.9" r="3.0"/><circle cx="156.1" cy="81.2" r="2.5"/><circle cx="167.7" cy="96.9" r="3.0"/><circle cx="21.1" cy="1.1" r="2.0"/><circle cx="138.9" cy="26.3" r="3.0"/><circle cx="106.3" cy="4.4" r="3.0"/><circle cx="51.2" cy="49.4" r="2.0"/><circle cx="166.1" cy="109.9" r="2.0"/><circle cx="132.2" cy="44.1" r="2.5"/><circle cx="103.8" cy="116.6" r="2.0"/><circle cx="182.4" cy="55.7" r="2.5"/><circle cx="146.5" cy="57.5" r="2.5"/><circle cx="37.8" cy="23.0" r="2.0"/><circle cx="85.7" cy="28.3" r="2.0"/><circle cx="85.2" cy="16.6" r="2.0"/><circle cx="184.9" cy="19.8" r="2.0"/><circle cx="194.8" cy="23.2" r="2.0"/><circle cx="94.3" cy="104.8" r="2.0"/><circle cx="94.5" cy="36.6" r="3.0"/><circle cx="41.8" cy="135.6" r="3.0"/><circle cx="106.7" cy="132.7" r="2.5"/><circle cx="75.9" cy="45.2" r="3.0"/><circle cx="159.8" cy="25.6" r="2.5"/><circle cx="51.4" cy="112.8" r="2.0"/><circle cx="172.3" cy="15.0" r="2.0"/><circle cx="99.1" cy="69.8" r="2.0"/><circle cx="184.0" cy="24.0" r="2.5"/><circle cx="107.4" cy="2.9" r="3.0"/><circle cx="50.7" cy="60.0" r="3.0"/><circle cx="22.3" cy="22.9" r="3.0"/><circle cx="155.2" cy="5.2" r="2.0"/><circle cx="187.0" cy="107.7" r="2.0"/><circle cx="158.2" cy="56.7" r="2.0"/><circle cx="25.4" cy="86.0" r="3.0"/><circle cx="30.3" cy="131.4" r="2.5"/><circle cx="163.9" cy="99.0" r="2.5"/><circle cx="49.0" cy="86.4" r="2.0"/><circle cx="129.0" cy="119.2" r="2.0"/><circle cx="159.1" cy="136.6" r="2.0"/><circle cx="103.5" cy="88.5" r="2.0"/><circle cx="108.6" cy="13.3" r="2.5"/><circle cx="113.8" cy="119.2" r="3.0"/><circle cx="110.2" cy="132.3" r="2.0"/><circle cx="107.3" cy="44.1" r="2.0"/><circle cx="188.2" cy="45.5" r="2.0"/><circle cx="123.9" cy="0.9" r="2.5"/><circle cx="169.0" cy="119.8" r="2.5"/><circle cx="119.3" cy="1.9" r="2.0"/><circle cx="118.1" cy="66.9" r="2.5"/><circle cx="140.7" cy="121.8" r="3.0"/><circle cx="116.2" cy="29.1" r="3.0"/><circle cx="101.8" cy="22.9" r="3.0"/><circle cx="79.5" cy="29.2" r="2.0"/><circle cx="61.1" cy="12.5" r="3.0"/><circle cx="45.4" cy="56.2" r="2.0"/></g><path d="M96.7 37.3A9.0 9.0 0 0 1 109.3 24.7" stroke="#1a1a1a" stroke-width="4.0" fill="none" opacity=".7"/><path d="M47.1 120.9A7.0 7.0 0 0 1 56.9 111.1" stroke="#1a1a1a" stroke-width="3.0" fill="none" opacity=".7"/><path d="M118.5 95.5A5.0 5.0 0 0 1 125.5 88.5M142.5 121.5A5.0 5.0 0 0 1 149.5 114.5M92.2 86.8A4.0 4.0 0 0 1 97.8 81.2M129.2 62.8A4.0 4.0 0 0 1 134.8 57.2M146.5 81.5A5.0 5.0 0 0 1 153.5 74.5M67.2 122.8A4.0 4.0 0 0 1 72.8 117.2M174.5 123.5A5.0 5.0 0 0 1 181.5 116.5M116.5 125.5A5.0 5.0 0 0 1 123.5 118.5M97.2 62.8A4.0 4.0 0 0 1 102.8 57.2M56.5 141.5A5.0 5.0 0 0 1 63.5 134.5M169.2 97.8A4.0 4.0 0 0 1 174.8 92.2M137.2 42.8A4.0 4.0 0 0 1 142.8 37.2M107.2 102.8A4.0 4.0 0 0 1 112.8 97.2" stroke="#1a1a1a" stroke-width="2.0" fill="none" opacity=".7"/><path d="M131.8 116.2A6.0 6.0 0 0 1 140.2 107.8M105.8 144.2A6.0 6.0 0 0 1 114.2 135.8M155.8 144.2A6.0 6.0 0 0 1 164.2 135.8" stroke="#1a1a1a" stroke-width="2.5" fill="none" opacity=".7"/><path d="M82.4 140.6A8.0 8.0 0 0 1 93.6 129.4" stroke="#1a1a1a" stroke-width="3.5" fill="none" opacity=".7"/><path d="M115.5 52.5A3.5 3.5 0 0 1 120.5 47.5M125.5 80.5A3.5 3.5 0 0 1 130.4 75.5M181.5 30.1A3.0 3.0 0 0 1 185.7 25.9M139.7 60.4A3.0 3.0 0 0 1 143.9 56.2M23.9 15.2A3.0 3.0 0 0 1 28.1 11.0M129.9 45.0A3.0 3.0 0 0 1 134.1 40.8M184.5 132.4A3.0 3.0 0 0 1 188.7 128.2M53.7 30.4A3.0 3.0 0 0 1 57.9 26.2M100.2 119.2A3.0 3.0 0 0 1 104.4 115.0M107.1 92.0A3.0 3.0 0 0 1 111.3 87.8M128.8 114.9A3.0 3.0 0 0 1 133.0 110.7M116.4 44.2A3.0 3.0 0 0 1 120.6 40.0M191.7 132.3A3.0 3.0 0 0 1 195.9 128.1M152.1 142.7A3.0 3.0 0 0 1 156.3 138.5M164.9 85.9A3.0 3.0 0 0 1 169.1 81.7M53.3 148.7A3.0 3.0 0 0 1 57.5 144.5M79.1 58.8A3.0 3.0 0 0 1 83.3 54.6M153.5 138.0A3.0 3.0 0 0 1 157.7 133.8M165.6 99.0A3.0 3.0 0 0 1 169.8 94.8M136.8 28.4A3.0 3.0 0 0 1 141.0 24.2M104.2 6.5A3.0 3.0 0 0 1 108.4 2.3M92.4 38.7A3.0 3.0 0 0 1 96.6 34.5M39.7 137.7A3.0 3.0 0 0 1 43.9 133.5M73.8 47.3A3.0 3.0 0 0 1 78.0 43.1M105.3 5.0A3.0 3.0 0 0 1 109.5 0.8M48.6 62.1A3.0 3.0 0 0 1 52.8 57.9M20.2 25.0A3.0 3.0 0 0 1 24.4 20.8M23.3 88.1A3.0 3.0 0 0 1 27.5 83.9M111.7 121.3A3.0 3.0 0 0 1 115.9 117.1M138.6 123.9A3.0 3.0 0 0 1 142.8 119.7M114.1 31.2A3.0 3.0 0 0 1 118.3 27.0M99.7 25.0A3.0 3.0 0 0 1 103.9 20.8M59.0 14.6A3.0 3.0 0 0 1 63.2 10.4" stroke="#1a1a1a" stroke-width="1.5" fill="none" opacity=".7"/><path d="M121.6 95.9A1.5 1.5 0 0 1 123.7 93.8M105.9 43.0A1.0 1.0 0 0 1 107.3 41.6M165.7 43.1A1.5 1.5 0 0 1 167.8 41.0M119.3 102.9A1.0 1.0 0 0 1 120.7 101.5M174.6 48.9A1.5 1.5 0 0 1 176.7 46.8M198.4 149.3A1.0 1.0 0 0 1 199.8 147.9M153.9 19.5A1.5 1.5 0 0 1 156.0 17.4M157.5 78.0A1.5 1.5 0 0 1 159.6 75.9M20.1 79.8A1.5 1.5 0 0 1 22.2 77.7M119.2 59.1A1.0 1.0 0 0 1 120.6 57.7M172.7 10.2A1.0 1.0 0 0 1 174.1 8.8M41.0 48.0A0.8 0.8 0 0 1 42.1 46.9M93.0 53.1A1.2 1.2 0 0 1 94.6 51.4M155.6 55.1A1.2 1.2 0 0 1 157.3 53.4M149.4 131.6A1.0 1.0 0 0 1 150.8 130.2M186.4 43.3A1.5 1.5 0 0 1 188.5 41.2M94.9 77.1A1.5 1.5 0 0 1 97.0 75.0M88.8 114.9A1.5 1.5 0 0 1 90.9 112.8M163.8 49.4A1.0 1.0 0 0 1 165.2 48.0M191.4 138.3A1.5 1.5 0 0 1 193.5 136.2M50.0 109.7A1.5 1.5 0 0 1 52.1 107.6M168.6 66.1A1.5 1.5 0 0 1 170.7 64.0M137.7 5.8A0.8 0.8 0 0 1 138.8 4.7M60.0 14.9A1.5 1.5 0 0 1 62.1 12.8M171.9 12.4A1.0 1.0 0 0 1 173.3 11.0M32.3 139.5A0.8 0.8 0 0 1 33.4 138.4M122.2 150.4A1.5 1.5 0 0 1 124.3 148.3M23.5 14.1A1.0 1.0 0 0 1 24.9 12.7M159.7 119.6A1.2 1.2 0 0 1 161.4 117.9M140.9 50.9A1.0 1.0 0 0 1 142.3 49.5M162.8 112.2A1.5 1.5 0 0 1 164.9 110.1M193.7 113.8A0.8 0.8 0 0 1 194.8 112.6M163.9 75.7A1.5 1.5 0 0 1 166.0 73.6M130.7 49.7A1.0 1.0 0 0 1 132.1 48.3M108.4 68.3A1.2 1.2 0 0 1 110.1 66.6M175.5 79.9A1.0 1.0 0 0 1 176.9 78.5M102.7 49.4A1.2 1.2 0 0 1 104.3 47.7M20.6 4.2A1.0 1.0 0 0 1 22.0 2.8M79.6 55.2A1.5 1.5 0 0 1 81.7 53.1M62.2 92.7A0.8 0.8 0 0 1 63.3 91.6M69.9 109.6A1.2 1.2 0 0 1 71.6 107.9M195.4 52.6A1.0 1.0 0 0 1 196.8 51.2M79.1 122.1A0.8 0.8 0 0 1 80.2 120.9M172.7 101.6A1.0 1.0 0 0 1 174.1 100.2M173.3 107.3A1.5 1.5 0 0 1 175.4 105.2M47.9 33.3A0.8 0.8 0 0 1 49.0 32.2M37.6 29.0A1.5 1.5 0 0 1 39.7 26.9M43.0 36.2A1.0 1.0 0 0 1 44.4 34.8M189.7 62.8A1.0 1.0 0 0 1 191.1 61.4M184.5 86.1A1.0 1.0 0 0 1 185.9 84.7M162.3 60.4A1.0 1.0 0 0 1 163.7 59.0M107.8 77.0A1.5 1.5 0 0 1 109.9 74.9M70.1 69.6A1.2 1.2 0 0 1 71.8 67.9M93.9 2.8A1.0 1.0 0 0 1 95.3 1.4M174.0 46.0A0.8 0.8 0 0 1 175.1 44.9M186.4 132.2A1.2 1.2 0 0 1 188.0 130.5M74.2 6.8A1.2 1.2 0 0 1 75.9 5.1M187.3 53.3A1.0 1.0 0 0 1 188.7 51.9M54.7 65.6A1.2 1.2 0 0 1 56.4 63.9M193.6 89.6A1.5 1.5 0 0 1 195.7 87.5M82.4 44.1A1.0 1.0 0 0 1 83.8 42.7M52.1 78.1A1.2 1.2 0 0 1 53.8 76.4M25.0 108.0A0.8 0.8 0 0 1 26.2 106.9M167.3 78.7A1.5 1.5 0 0 1 169.4 76.6M138.6 121.3A1.5 1.5 0 0 1 140.7 119.2M63.2 9.9A0.8 0.8 0 0 1 64.4 8.8M115.0 71.0A1.0 1.0 0 0 1 116.4 69.6M66.0 148.9A1.0 1.0 0 0 1 67.4 147.5M77.9 92.0A1.0 1.0 0 0 1 79.3 90.6M88.7 22.8A1.5 1.5 0 0 1 90.8 20.7M42.6 27.6A1.5 1.5 0 0 1 44.7 25.5M82.1 113.6A1.5 1.5 0 0 1 84.2 111.5M77.5 89.4A1.5 1.5 0 0 1 79.6 87.3M115.3 88.6A1.5 1.5 0 0 1 117.4 86.5M137.6 62.4A1.0 1.0 0 0 1 139.0 61.0M48.9 80.7A1.2 1.2 0 0 1 50.5 79.0M141.2 74.2A1.0 1.0 0 0 1 142.6 72.8M21.3 95.7A1.2 1.2 0 0 1 22.9 94.0M47.4 83.4A1.5 1.5 0 0 1 49.5 81.3M192.7 48.1A1.5 1.5 0 0 1 194.8 46.0M50.2 42.0A1.0 1.0 0 0 1 51.6 40.6M39.6 10.8A0.8 0.8 0 0 1 40.7 9.7M139.4 81.7A1.0 1.0 0 0 1 140.8 80.3M136.1 92.2A0.8 0.8 0 0 1 137.3 91.1M87.4 121.4A1.5 1.5 0 0 1 89.5 119.3M23.0 68.2A1.0 1.0 0 0 1 24.4 66.8M180.7 137.2A1.0 1.0 0 0 1 182.1 135.8M108.6 44.3A1.5 1.5 0 0 1 110.7 42.2M179.8 54.6A1.2 1.2 0 0 1 181.5 52.9M112.4 97.9A1.0 1.0 0 0 1 113.8 96.5M56.4 21.6A1.0 1.0 0 0 1 57.8 20.2M77.1 139.3A1.2 1.2 0 0 1 78.8 137.6M194.1 20.6A1.0 1.0 0 0 1 195.5 19.2M107.8 104.2A1.5 1.5 0 0 1 109.9 102.1M19.3 31.1A1.5 1.5 0 0 1 21.4 29.0M46.7 41.9A1.2 1.2 0 0 1 48.4 40.2M38.4 18.8A1.5 1.5 0 0 1 40.5 16.7M93.4 118.0A0.8 0.8 0 0 1 94.5 116.9M89.6 39.5A1.5 1.5 0 0 1 91.7 37.4M39.8 50.9A1.0 1.0 0 0 1 41.2 49.5M37.1 106.3A1.5 1.5 0 0 1 39.2 104.2M68.8 118.5A1.0 1.0 0 0 1 70.2 117.1M87.9 105.9A0.8 0.8 0 0 1 89.0 104.8M73.4 47.5A1.5 1.5 0 0 1 75.5 45.4M86.1 31.6A1.0 1.0 0 0 1 87.5 30.2M29.5 120.5A1.2 1.2 0 0 1 31.1 118.9M59.6 103.4A1.0 1.0 0 0 1 61.0 102.0M119.5 124.3A1.5 1.5 0 0 1 121.6 122.2M176.6 88.4A1.2 1.2 0 0 1 178.3 86.7M162.0 146.5A0.8 0.8 0 0 1 163.1 145.4M164.9 61.1A1.0 1.0 0 0 1 166.3 59.7M130.5 134.7A1.5 1.5 0 0 1 132.6 132.6M186.4 87.0A1.0 1.0 0 0 1 187.8 85.6M169.7 11.2A1.2 1.2 0 0 1 171.4 9.5M76.9 144.7A0.8 0.8 0 0 1 78.0 143.5M155.0 139.0A1.5 1.5 0 0 1 157.1 136.9M145.1 134.3A1.5 1.5 0 0 1 147.2 132.2M199.0 53.8A1.0 1.0 0 0 1 200.4 52.4M99.9 131.5A1.0 1.0 0 0 1 101.3 130.1M29.3 75.5A0.8 0.8 0 0 1 30.4 74.4M65.7 149.2A1.0 1.0 0 0 1 67.1 147.8M162.1 53.2A1.0 1.0 0 0 1 163.5 51.8M40.6 25.1A1.0 1.0 0 0 1 42.0 23.7M105.3 122.3A1.5 1.5 0 0 1 107.4 120.2M47.4 90.5A0.8 0.8 0 0 1 48.5 89.3M19.6 93.4A1.0 1.0 0 0 1 21.0 92.0M182.9 140.9A1.0 1.0 0 0 1 184.3 139.5M120.6 145.3A1.5 1.5 0 0 1 122.7 143.2M120.2 131.6A1.0 1.0 0 0 1 121.6 130.2M151.4 20.5A1.2 1.2 0 0 1 153.1 18.8M48.8 82.8A1.5 1.5 0 0 1 50.9 80.7M23.4 135.7A1.5 1.5 0 0 1 25.5 133.6M127.1 2.1A1.5 1.5 0 0 1 129.2 0.0M86.7 138.5A1.5 1.5 0 0 1 88.8 136.4M160.3 30.0A0.8 0.8 0 0 1 161.4 28.8M173.9 141.2A1.0 1.0 0 0 1 175.3 139.8M80.0 16.4A1.0 1.0 0 0 1 81.4 15.0M197.0 26.4A1.5 1.5 0 0 1 199.1 24.3M125.9 131.0A1.5 1.5 0 0 1 128.0 128.9M158.7 57.6A0.8 0.8 0 0 1 159.9 56.5M151.6 7.2A1.0 1.0 0 0 1 153.0 5.8M191.0 53.9A1.5 1.5 0 0 1 193.1 51.8M187.8 65.8A1.5 1.5 0 0 1 189.9 63.7M140.0 27.7A0.8 0.8 0 0 1 141.1 26.6M86.6 137.2A1.0 1.0 0 0 1 88.0 135.8M139.6 80.9A1.2 1.2 0 0 1 141.3 79.2M91.9 43.6A1.5 1.5 0 0 1 94.0 41.5M65.9 114.7A1.0 1.0 0 0 1 67.3 113.3M61.8 113.4A1.0 1.0 0 0 1 63.2 112.0M102.7 137.6A1.5 1.5 0 0 1 104.8 135.5M55.3 95.8A1.2 1.2 0 0 1 56.9 94.1M143.8 101.3A1.0 1.0 0 0 1 145.2 99.9M132.7 119.9A0.8 0.8 0 0 1 133.8 118.8M89.2 59.4A1.0 1.0 0 0 1 90.6 58.0M65.7 150.6A1.0 1.0 0 0 1 67.1 149.2M87.9 7.2A1.2 1.2 0 0 1 89.5 5.5M95.8 124.0A1.0 1.0 0 0 1 97.2 122.6M41.4 37.0A1.5 1.5 0 0 1 43.5 34.9M70.6 102.6A1.2 1.2 0 0 1 72.3 100.9M173.0 13.7A0.8 0.8 0 0 1 174.1 12.5M183.0 121.8A1.2 1.2 0 0 1 184.7 120.1M45.8 128.9A1.5 1.5 0 0 1 47.9 126.8M192.1 106.2A1.0 1.0 0 0 1 193.5 104.8M73.4 116.9A1.5 1.5 0 0 1 75.5 114.8M35.7 48.8A1.5 1.5 0 0 1 37.8 46.7M99.9 109.7A1.5 1.5 0 0 1 102.0 107.6M154.1 122.1A1.0 1.0 0 0 1 155.5 120.7M151.4 124.9A1.5 1.5 0 0 1 153.5 122.8M37.6 32.3A1.5 1.5 0 0 1 39.7 30.2M115.7 81.3A1.2 1.2 0 0 1 117.3 79.6M162.0 17.1A1.2 1.2 0 0 1 163.7 15.4M131.5 55.2A1.5 1.5 0 0 1 133.6 53.1M89.5 84.7A1.0 1.0 0 0 1 90.9 83.3M182.4 83.8A1.5 1.5 0 0 1 184.5 81.7M49.4 75.4A1.5 1.5 0 0 1 51.5 73.3M117.0 1.8A1.5 1.5 0 0 1 119.1 -0.3M122.2 93.3A1.5 1.5 0 0 1 124.3 91.2M24.3 126.0A1.0 1.0 0 0 1 25.7 124.6M180.5 26.7A1.5 1.5 0 0 1 182.6 24.6M102.7 106.7A1.0 1.0 0 0 1 104.1 105.3M41.8 75.1A1.0 1.0 0 0 1 43.2 73.7M164.9 144.3A1.5 1.5 0 0 1 167.0 142.2M80.9 148.6A1.5 1.5 0 0 1 83.0 146.5M65.5 4.4A0.8 0.8 0 0 1 66.6 3.3M144.1 107.6A1.2 1.2 0 0 1 145.8 105.9M80.2 62.6A1.2 1.2 0 0 1 81.9 60.9M137.9 40.7A1.2 1.2 0 0 1 139.5 39.1M81.1 42.7A1.0 1.0 0 0 1 82.5 41.3" stroke="#1a1a1a" stroke-width="0.5" fill="none" opacity=".7"/><path d="M104.5 133.8A2.5 2.5 0 0 1 108.0 130.3M188.1 49.9A2.5 2.5 0 0 1 191.6 46.4M72.8 47.8A2.0 2.0 0 0 1 75.6 45.0M180.4 112.9A2.0 2.0 0 0 1 183.2 110.1M176.5 56.4A2.5 2.5 0 0 1 180.0 52.9M103.5 55.5A2.5 2.5 0 0 1 107.0 52.0M100.4 130.5A2.0 2.0 0 0 1 103.2 127.7M31.2 73.6A2.0 2.0 0 0 1 34.0 70.8M21.3 82.7A2.0 2.0 0 0 1 24.1 79.9M182.4 110.8A2.0 2.0 0 0 1 185.2 108.0M103.7 94.7A2.0 2.0 0 0 1 106.5 91.9M19.8 142.3A2.0 2.0 0 0 1 22.6 139.5M148.0 16.1A2.0 2.0 0 0 1 150.8 13.3M64.8 27.8A2.5 2.5 0 0 1 68.3 24.3M41.7 121.8A2.5 2.5 0 0 1 45.2 118.3M155.8 44.3A2.0 2.0 0 0 1 158.6 41.5M166.4 29.6A2.0 2.0 0 0 1 169.2 26.8M111.5 119.8A2.0 2.0 0 0 1 114.3 117.0M108.2 118.3A2.0 2.0 0 0 1 111.0 115.5M150.0 137.5A2.0 2.0 0 0 1 152.8 134.7M60.8 101.6A2.0 2.0 0 0 1 63.6 98.8M162.8 68.0A2.0 2.0 0 0 1 165.6 65.2M192.2 56.7A2.0 2.0 0 0 1 195.0 53.9M104.4 27.7A2.0 2.0 0 0 1 107.2 24.9M180.5 81.0A2.0 2.0 0 0 1 183.3 78.2M19.2 15.9A2.0 2.0 0 0 1 22.0 13.1M51.0 148.5A2.0 2.0 0 0 1 53.8 145.7M63.6 66.9A2.5 2.5 0 0 1 67.1 63.4M180.8 66.7A2.5 2.5 0 0 1 184.3 63.2M47.1 143.3A2.0 2.0 0 0 1 49.9 140.5M51.6 23.9A2.0 2.0 0 0 1 54.4 21.1M182.6 116.6A2.5 2.5 0 0 1 186.1 113.1M125.3 84.9A2.0 2.0 0 0 1 128.1 82.1M56.3 83.4A2.0 2.0 0 0 1 59.1 80.6M65.2 52.4A2.5 2.5 0 0 1 68.7 48.9M146.8 6.3A2.5 2.5 0 0 1 150.3 2.8M86.4 53.4A2.5 2.5 0 0 1 89.9 49.9M116.8 5.7A2.5 2.5 0 0 1 120.3 2.2M172.1 86.6A2.0 2.0 0 0 1 174.9 83.8M188.7 148.1A2.0 2.0 0 0 1 191.5 145.3M158.6 109.9A2.0 2.0 0 0 1 161.4 107.1M184.6 132.3A2.5 2.5 0 0 1 188.1 128.8M154.4 83.0A2.5 2.5 0 0 1 157.9 79.5M19.7 2.5A2.0 2.0 0 0 1 22.5 -0.3M49.8 50.8A2.0 2.0 0 0 1 52.6 48.0M164.7 111.3A2.0 2.0 0 0 1 167.5 108.5M130.4 45.8A2.5 2.5 0 0 1 133.9 42.3M102.4 118.0A2.0 2.0 0 0 1 105.2 115.2M180.6 57.4A2.5 2.5 0 0 1 184.1 53.9M144.8 59.3A2.5 2.5 0 0 1 148.3 55.8M36.4 24.4A2.0 2.0 0 0 1 39.2 21.6M84.3 29.7A2.0 2.0 0 0 1 87.1 26.9M83.8 18.0A2.0 2.0 0 0 1 86.6 15.2M183.5 21.2A2.0 2.0 0 0 1 186.3 18.4M193.4 24.6A2.0 2.0 0 0 1 196.2 21.8M92.9 106.2A2.0 2.0 0 0 1 95.7 103.4M105.0 134.5A2.5 2.5 0 0 1 108.5 131.0M158.0 27.4A2.5 2.5 0 0 1 161.5 23.9M50.0 114.2A2.0 2.0 0 0 1 52.8 111.4M170.9 16.4A2.0 2.0 0 0 1 173.7 13.6M97.7 71.2A2.0 2.0 0 0 1 100.5 68.4M182.3 25.8A2.5 2.5 0 0 1 185.8 22.3M153.8 6.6A2.0 2.0 0 0 1 156.6 3.8M185.6 109.1A2.0 2.0 0 0 1 188.4 106.3M156.8 58.1A2.0 2.0 0 0 1 159.6 55.3M28.5 133.2A2.5 2.5 0 0 1 32.0 129.7M162.1 100.7A2.5 2.5 0 0 1 165.6 97.2M47.6 87.8A2.0 2.0 0 0 1 50.4 85.0M127.6 120.6A2.0 2.0 0 0 1 130.4 117.8M157.7 138.0A2.0 2.0 0 0 1 160.5 135.2M102.1 89.9A2.0 2.0 0 0 1 104.9 87.1M106.8 15.1A2.5 2.5 0 0 1 110.3 11.6M108.8 133.7A2.0 2.0 0 0 1 111.6 130.9M105.9 45.5A2.0 2.0 0 0 1 108.7 42.7M186.8 46.9A2.0 2.0 0 0 1 189.6 44.1M122.1 2.7A2.5 2.5 0 0 1 125.6 -0.8M167.3 121.5A2.5 2.5 0 0 1 170.8 118.0M117.9 3.3A2.0 2.0 0 0 1 120.7 0.5M116.4 68.6A2.5 2.5 0 0 1 119.9 65.1M78.1 30.6A2.0 2.0 0 0 1 80.9 27.8M44.0 57.6A2.0 2.0 0 0 1 46.8 54.8" stroke="#1a1a1a" stroke-width="1.0" fill="none" opacity=".7"/><path d="M109.3 24.7A9.0 9.0 0 0 1 96.7 37.3M93.6 129.4A8.0 8.0 0 0 1 82.4 140.6" stroke="#cdcdcd" stroke-width="2.5" fill="none" opacity=".6"/><path d="M56.9 111.1A7.0 7.0 0 0 1 47.1 120.9M140.2 107.8A6.0 6.0 0 0 1 131.8 116.2M114.2 135.8A6.0 6.0 0 0 1 105.8 144.2M164.2 135.8A6.0 6.0 0 0 1 155.8 144.2" stroke="#cdcdcd" stroke-width="2.0" fill="none" opacity=".6"/><path d="M125.5 88.5A5.0 5.0 0 0 1 118.5 95.5M149.5 114.5A5.0 5.0 0 0 1 142.5 121.5M153.5 74.5A5.0 5.0 0 0 1 146.5 81.5M181.5 116.5A5.0 5.0 0 0 1 174.5 123.5M123.5 118.5A5.0 5.0 0 0 1 116.5 125.5M63.5 134.5A5.0 5.0 0 0 1 56.5 141.5" stroke="#cdcdcd" stroke-width="1.5" fill="none" opacity=".6"/><path d="M97.8 81.2A4.0 4.0 0 0 1 92.2 86.8M134.8 57.2A4.0 4.0 0 0 1 129.2 62.8M72.8 117.2A4.0 4.0 0 0 1 67.2 122.8M102.8 57.2A4.0 4.0 0 0 1 97.2 62.8M174.8 92.2A4.0 4.0 0 0 1 169.2 97.8M142.8 37.2A4.0 4.0 0 0 1 137.2 42.8M120.5 47.5A3.5 3.5 0 0 1 115.5 52.5M112.8 97.2A4.0 4.0 0 0 1 107.2 102.8M130.4 75.5A3.5 3.5 0 0 1 125.5 80.5M108.0 130.3A2.5 2.5 0 0 1 104.5 133.8M185.7 25.9A3.0 3.0 0 0 1 181.5 30.1M191.6 46.4A2.5 2.5 0 0 1 188.1 49.9M180.0 52.9A2.5 2.5 0 0 1 176.5 56.4M143.9 56.2A3.0 3.0 0 0 1 139.7 60.4M107.0 52.0A2.5 2.5 0 0 1 103.5 55.5M28.1 11.0A3.0 3.0 0 0 1 23.9 15.2M134.1 40.8A3.0 3.0 0 0 1 129.9 45.0M188.7 128.2A3.0 3.0 0 0 1 184.5 132.4M57.9 26.2A3.0 3.0 0 0 1 53.7 30.4M104.4 115.0A3.0 3.0 0 0 1 100.2 119.2M68.3 24.3A2.5 2.5 0 0 1 64.8 27.8M45.2 118.3A2.5 2.5 0 0 1 41.7 121.8M111.3 87.8A3.0 3.0 0 0 1 107.1 92.0M133.0 110.7A3.0 3.0 0 0 1 128.8 114.9M67.1 63.4A2.5 2.5 0 0 1 63.6 66.9M120.6 40.0A3.0 3.0 0 0 1 116.4 44.2M184.3 63.2A2.5 2.5 0 0 1 180.8 66.7M195.9 128.1A3.0 3.0 0 0 1 191.7 132.3M186.1 113.1A2.5 2.5 0 0 1 182.6 116.6M156.3 138.5A3.0 3.0 0 0 1 152.1 142.7M68.7 48.9A2.5 2.5 0 0 1 65.2 52.4M169.1 81.7A3.0 3.0 0 0 1 164.9 85.9M150.3 2.8A2.5 2.5 0 0 1 146.8 6.3M89.9 49.9A2.5 2.5 0 0 1 86.4 53.4M120.3 2.2A2.5 2.5 0 0 1 116.8 5.7M57.5 144.5A3.0 3.0 0 0 1 53.3 148.7M188.1 128.8A2.5 2.5 0 0 1 184.6 132.3M83.3 54.6A3.0 3.0 0 0 1 79.1 58.8M157.7 133.8A3.0 3.0 0 0 1 153.5 138.0M157.9 79.5A2.5 2.5 0 0 1 154.4 83.0M169.8 94.8A3.0 3.0 0 0 1 165.6 99.0M141.0 24.2A3.0 3.0 0 0 1 136.8 28.4M108.4 2.3A3.0 3.0 0 0 1 104.2 6.5M133.9 42.3A2.5 2.5 0 0 1 130.4 45.8M184.1 53.9A2.5 2.5 0 0 1 180.6 57.4M148.3 55.8A2.5 2.5 0 0 1 144.8 59.3M96.6 34.5A3.0 3.0 0 0 1 92.4 38.7M43.9 133.5A3.0 3.0 0 0 1 39.7 137.7M108.5 131.0A2.5 2.5 0 0 1 105.0 134.5M78.0 43.1A3.0 3.0 0 0 1 73.8 47.3M161.5 23.9A2.5 2.5 0 0 1 158.0 27.4M185.8 22.3A2.5 2.5 0 0 1 182.3 25.8M109.5 0.8A3.0 3.0 0 0 1 105.3 5.0M52.8 57.9A3.0 3.0 0 0 1 48.6 62.1M24.4 20.8A3.0 3.0 0 0 1 20.2 25.0M27.5 83.9A3.0 3.0 0 0 1 23.3 88.1M32.0 129.7A2.5 2.5 0 0 1 28.5 133.2M165.6 97.2A2.5 2.5 0 0 1 162.1 100.7M110.3 11.6A2.5 2.5 0 0 1 106.8 15.1M115.9 117.1A3.0 3.0 0 0 1 111.7 121.3M125.6 -0.8A2.5 2.5 0 0 1 122.1 2.7M170.8 118.0A2.5 2.5 0 0 1 167.3 121.5M119.9 65.1A2.5 2.5 0 0 1 116.4 68.6M142.8 119.7A3.0 3.0 0 0 1 138.6 123.9M118.3 27.0A3.0 3.0 0 0 1 114.1 31.2M103.9 20.8A3.0 3.0 0 0 1 99.7 25.0M63.2 10.4A3.0 3.0 0 0 1 59.0 14.6" stroke="#cdcdcd" stroke-width="1.0" fill="none" opacity=".6"/><path d="M123.7 93.8A1.5 1.5 0 0 1 121.6 95.9M107.3 41.6A1.0 1.0 0 0 1 105.9 43.0M75.6 45.0A2.0 2.0 0 0 1 72.8 47.8M183.2 110.1A2.0 2.0 0 0 1 180.4 112.9M167.8 41.0A1.5 1.5 0 0 1 165.7 43.1M120.7 101.5A1.0 1.0 0 0 1 119.3 102.9M176.7 46.8A1.5 1.5 0 0 1 174.6 48.9M199.8 147.9A1.0 1.0 0 0 1 198.4 149.3M156.0 17.4A1.5 1.5 0 0 1 153.9 19.5M159.6 75.9A1.5 1.5 0 0 1 157.5 78.0M22.2 77.7A1.5 1.5 0 0 1 20.1 79.8M120.6 57.7A1.0 1.0 0 0 1 119.2 59.1M174.1 8.8A1.0 1.0 0 0 1 172.7 10.2M42.1 46.9A0.8 0.8 0 0 1 41.0 48.0M94.6 51.4A1.2 1.2 0 0 1 93.0 53.1M103.2 127.7A2.0 2.0 0 0 1 100.4 130.5M34.0 70.8A2.0 2.0 0 0 1 31.2 73.6M157.3 53.4A1.2 1.2 0 0 1 155.6 55.1M24.1 79.9A2.0 2.0 0 0 1 21.3 82.7M150.8 130.2A1.0 1.0 0 0 1 149.4 131.6M185.2 108.0A2.0 2.0 0 0 1 182.4 110.8M188.5 41.2A1.5 1.5 0 0 1 186.4 43.3M97.0 75.0A1.5 1.5 0 0 1 94.9 77.1M106.5 91.9A2.0 2.0 0 0 1 103.7 94.7M90.9 112.8A1.5 1.5 0 0 1 88.8 114.9M165.2 48.0A1.0 1.0 0 0 1 163.8 49.4M193.5 136.2A1.5 1.5 0 0 1 191.4 138.3M52.1 107.6A1.5 1.5 0 0 1 50.0 109.7M170.7 64.0A1.5 1.5 0 0 1 168.6 66.1M138.8 4.7A0.8 0.8 0 0 1 137.7 5.8M62.1 12.8A1.5 1.5 0 0 1 60.0 14.9M173.3 11.0A1.0 1.0 0 0 1 171.9 12.4M33.4 138.4A0.8 0.8 0 0 1 32.3 139.5M124.3 148.3A1.5 1.5 0 0 1 122.2 150.4M22.6 139.5A2.0 2.0 0 0 1 19.8 142.3M24.9 12.7A1.0 1.0 0 0 1 23.5 14.1M161.4 117.9A1.2 1.2 0 0 1 159.7 119.6M142.3 49.5A1.0 1.0 0 0 1 140.9 50.9M164.9 110.1A1.5 1.5 0 0 1 162.8 112.2M194.8 112.6A0.8 0.8 0 0 1 193.7 113.8M166.0 73.6A1.5 1.5 0 0 1 163.9 75.7M132.1 48.3A1.0 1.0 0 0 1 130.7 49.7M150.8 13.3A2.0 2.0 0 0 1 148.0 16.1M110.1 66.6A1.2 1.2 0 0 1 108.4 68.3M176.9 78.5A1.0 1.0 0 0 1 175.5 79.9M104.3 47.7A1.2 1.2 0 0 1 102.7 49.4M22.0 2.8A1.0 1.0 0 0 1 20.6 4.2M81.7 53.1A1.5 1.5 0 0 1 79.6 55.2M63.3 91.6A0.8 0.8 0 0 1 62.2 92.7M71.6 107.9A1.2 1.2 0 0 1 69.9 109.6M158.6 41.5A2.0 2.0 0 0 1 155.8 44.3M196.8 51.2A1.0 1.0 0 0 1 195.4 52.6M169.2 26.8A2.0 2.0 0 0 1 166.4 29.6M80.2 120.9A0.8 0.8 0 0 1 79.1 122.1M174.1 100.2A1.0 1.0 0 0 1 172.7 101.6M114.3 117.0A2.0 2.0 0 0 1 111.5 119.8M111.0 115.5A2.0 2.0 0 0 1 108.2 118.3M175.4 105.2A1.5 1.5 0 0 1 173.3 107.3M152.8 134.7A2.0 2.0 0 0 1 150.0 137.5M63.6 98.8A2.0 2.0 0 0 1 60.8 101.6M165.6 65.2A2.0 2.0 0 0 1 162.8 68.0M195.0 53.9A2.0 2.0 0 0 1 192.2 56.7M49.0 32.2A0.8 0.8 0 0 1 47.9 33.3M39.7 26.9A1.5 1.5 0 0 1 37.6 29.0M107.2 24.9A2.0 2.0 0 0 1 104.4 27.7M44.4 34.8A1.0 1.0 0 0 1 43.0 36.2M191.1 61.4A1.0 1.0 0 0 1 189.7 62.8M185.9 84.7A1.0 1.0 0 0 1 184.5 86.1M163.7 59.0A1.0 1.0 0 0 1 162.3 60.4M183.3 78.2A2.0 2.0 0 0 1 180.5 81.0M22.0 13.1A2.0 2.0 0 0 1 19.2 15.9M109.9 74.9A1.5 1.5 0 0 1 107.8 77.0M53.8 145.7A2.0 2.0 0 0 1 51.0 148.5M71.8 67.9A1.2 1.2 0 0 1 70.1 69.6M95.3 1.4A1.0 1.0 0 0 1 93.9 2.8M175.1 44.9A0.8 0.8 0 0 1 174.0 46.0M188.0 130.5A1.2 1.2 0 0 1 186.4 132.2M75.9 5.1A1.2 1.2 0 0 1 74.2 6.8M188.7 51.9A1.0 1.0 0 0 1 187.3 53.3M56.4 63.9A1.2 1.2 0 0 1 54.7 65.6M195.7 87.5A1.5 1.5 0 0 1 193.6 89.6M83.8 42.7A1.0 1.0 0 0 1 82.4 44.1M53.8 76.4A1.2 1.2 0 0 1 52.1 78.1M26.2 106.9A0.8 0.8 0 0 1 25.0 108.0M169.4 76.6A1.5 1.5 0 0 1 167.3 78.7M140.7 119.2A1.5 1.5 0 0 1 138.6 121.3M64.4 8.8A0.8 0.8 0 0 1 63.2 9.9M116.4 69.6A1.0 1.0 0 0 1 115.0 71.0M67.4 147.5A1.0 1.0 0 0 1 66.0 148.9M79.3 90.6A1.0 1.0 0 0 1 77.9 92.0M90.8 20.7A1.5 1.5 0 0 1 88.7 22.8M44.7 25.5A1.5 1.5 0 0 1 42.6 27.6M84.2 111.5A1.5 1.5 0 0 1 82.1 113.6M79.6 87.3A1.5 1.5 0 0 1 77.5 89.4M49.9 140.5A2.0 2.0 0 0 1 47.1 143.3M117.4 86.5A1.5 1.5 0 0 1 115.3 88.6M54.4 21.1A2.0 2.0 0 0 1 51.6 23.9M139.0 61.0A1.0 1.0 0 0 1 137.6 62.4M50.5 79.0A1.2 1.2 0 0 1 48.9 80.7M142.6 72.8A1.0 1.0 0 0 1 141.2 74.2M22.9 94.0A1.2 1.2 0 0 1 21.3 95.7M49.5 81.3A1.5 1.5 0 0 1 47.4 83.4M194.8 46.0A1.5 1.5 0 0 1 192.7 48.1M51.6 40.6A1.0 1.0 0 0 1 50.2 42.0M40.7 9.7A0.8 0.8 0 0 1 39.6 10.8M140.8 80.3A1.0 1.0 0 0 1 139.4 81.7M137.3 91.1A0.8 0.8 0 0 1 136.1 92.2M128.1 82.1A2.0 2.0 0 0 1 125.3 84.9M89.5 119.3A1.5 1.5 0 0 1 87.4 121.4M24.4 66.8A1.0 1.0 0 0 1 23.0 68.2M182.1 135.8A1.0 1.0 0 0 1 180.7 137.2M110.7 42.2A1.5 1.5 0 0 1 108.6 44.3M181.5 52.9A1.2 1.2 0 0 1 179.8 54.6M113.8 96.5A1.0 1.0 0 0 1 112.4 97.9M57.8 20.2A1.0 1.0 0 0 1 56.4 21.6M78.8 137.6A1.2 1.2 0 0 1 77.1 139.3M195.5 19.2A1.0 1.0 0 0 1 194.1 20.6M59.1 80.6A2.0 2.0 0 0 1 56.3 83.4M109.9 102.1A1.5 1.5 0 0 1 107.8 104.2M21.4 29.0A1.5 1.5 0 0 1 19.3 31.1M48.4 40.2A1.2 1.2 0 0 1 46.7 41.9M40.5 16.7A1.5 1.5 0 0 1 38.4 18.8M94.5 116.9A0.8 0.8 0 0 1 93.4 118.0M91.7 37.4A1.5 1.5 0 0 1 89.6 39.5M41.2 49.5A1.0 1.0 0 0 1 39.8 50.9M39.2 104.2A1.5 1.5 0 0 1 37.1 106.3M174.9 83.8A2.0 2.0 0 0 1 172.1 86.6M191.5 145.3A2.0 2.0 0 0 1 188.7 148.1M70.2 117.1A1.0 1.0 0 0 1 68.8 118.5M161.4 107.1A2.0 2.0 0 0 1 158.6 109.9M89.0 104.8A0.8 0.8 0 0 1 87.9 105.9M75.5 45.4A1.5 1.5 0 0 1 73.4 47.5M87.5 30.2A1.0 1.0 0 0 1 86.1 31.6M31.1 118.9A1.2 1.2 0 0 1 29.5 120.5M61.0 102.0A1.0 1.0 0 0 1 59.6 103.4M121.6 122.2A1.5 1.5 0 0 1 119.5 124.3M178.3 86.7A1.2 1.2 0 0 1 176.6 88.4M163.1 145.4A0.8 0.8 0 0 1 162.0 146.5M166.3 59.7A1.0 1.0 0 0 1 164.9 61.1M132.6 132.6A1.5 1.5 0 0 1 130.5 134.7M22.5 -0.3A2.0 2.0 0 0 1 19.7 2.5M187.8 85.6A1.0 1.0 0 0 1 186.4 87.0M171.4 9.5A1.2 1.2 0 0 1 169.7 11.2M78.0 143.5A0.8 0.8 0 0 1 76.9 144.7M157.1 136.9A1.5 1.5 0 0 1 155.0 139.0M147.2 132.2A1.5 1.5 0 0 1 145.1 134.3M200.4 52.4A1.0 1.0 0 0 1 199.0 53.8M101.3 130.1A1.0 1.0 0 0 1 99.9 131.5M30.4 74.4A0.8 0.8 0 0 1 29.3 75.5M67.1 147.8A1.0 1.0 0 0 1 65.7 149.2M163.5 51.8A1.0 1.0 0 0 1 162.1 53.2M42.0 23.7A1.0 1.0 0 0 1 40.6 25.1M107.4 120.2A1.5 1.5 0 0 1 105.3 122.3M52.6 48.0A2.0 2.0 0 0 1 49.8 50.8M48.5 89.3A0.8 0.8 0 0 1 47.4 90.5M21.0 92.0A1.0 1.0 0 0 1 19.6 93.4M167.5 108.5A2.0 2.0 0 0 1 164.7 111.3M184.3 139.5A1.0 1.0 0 0 1 182.9 140.9M105.2 115.2A2.0 2.0 0 0 1 102.4 118.0M122.7 143.2A1.5 1.5 0 0 1 120.6 145.3M121.6 130.2A1.0 1.0 0 0 1 120.2 131.6M153.1 18.8A1.2 1.2 0 0 1 151.4 20.5M50.9 80.7A1.5 1.5 0 0 1 48.8 82.8M25.5 133.6A1.5 1.5 0 0 1 23.4 135.7M129.2 0.0A1.5 1.5 0 0 1 127.1 2.1M39.2 21.6A2.0 2.0 0 0 1 36.4 24.4M88.8 136.4A1.5 1.5 0 0 1 86.7 138.5M161.4 28.8A0.8 0.8 0 0 1 160.3 30.0M175.3 139.8A1.0 1.0 0 0 1 173.9 141.2M87.1 26.9A2.0 2.0 0 0 1 84.3 29.7M81.4 15.0A1.0 1.0 0 0 1 80.0 16.4M86.6 15.2A2.0 2.0 0 0 1 83.8 18.0M199.1 24.3A1.5 1.5 0 0 1 197.0 26.4M128.0 128.9A1.5 1.5 0 0 1 125.9 131.0M186.3 18.4A2.0 2.0 0 0 1 183.5 21.2M159.9 56.5A0.8 0.8 0 0 1 158.7 57.6M196.2 21.8A2.0 2.0 0 0 1 193.4 24.6M153.0 5.8A1.0 1.0 0 0 1 151.6 7.2M193.1 51.8A1.5 1.5 0 0 1 191.0 53.9M189.9 63.7A1.5 1.5 0 0 1 187.8 65.8M141.1 26.6A0.8 0.8 0 0 1 140.0 27.7M95.7 103.4A2.0 2.0 0 0 1 92.9 106.2M88.0 135.8A1.0 1.0 0 0 1 86.6 137.2M141.3 79.2A1.2 1.2 0 0 1 139.6 80.9M94.0 41.5A1.5 1.5 0 0 1 91.9 43.6M67.3 113.3A1.0 1.0 0 0 1 65.9 114.7M63.2 112.0A1.0 1.0 0 0 1 61.8 113.4M104.8 135.5A1.5 1.5 0 0 1 102.7 137.6M56.9 94.1A1.2 1.2 0 0 1 55.3 95.8M145.2 99.9A1.0 1.0 0 0 1 143.8 101.3M133.8 118.8A0.8 0.8 0 0 1 132.7 119.9M90.6 58.0A1.0 1.0 0 0 1 89.2 59.4M52.8 111.4A2.0 2.0 0 0 1 50.0 114.2M67.1 149.2A1.0 1.0 0 0 1 65.7 150.6M173.7 13.6A2.0 2.0 0 0 1 170.9 16.4M89.5 5.5A1.2 1.2 0 0 1 87.9 7.2M97.2 122.6A1.0 1.0 0 0 1 95.8 124.0M100.5 68.4A2.0 2.0 0 0 1 97.7 71.2M43.5 34.9A1.5 1.5 0 0 1 41.4 37.0M72.3 100.9A1.2 1.2 0 0 1 70.6 102.6M174.1 12.5A0.8 0.8 0 0 1 173.0 13.7M184.7 120.1A1.2 1.2 0 0 1 183.0 121.8M47.9 126.8A1.5 1.5 0 0 1 45.8 128.9M156.6 3.8A2.0 2.0 0 0 1 153.8 6.6M188.4 106.3A2.0 2.0 0 0 1 185.6 109.1M193.5 104.8A1.0 1.0 0 0 1 192.1 106.2M75.5 114.8A1.5 1.5 0 0 1 73.4 116.9M37.8 46.7A1.5 1.5 0 0 1 35.7 48.8M102.0 107.6A1.5 1.5 0 0 1 99.9 109.7M155.5 120.7A1.0 1.0 0 0 1 154.1 122.1M153.5 122.8A1.5 1.5 0 0 1 151.4 124.9M159.6 55.3A2.0 2.0 0 0 1 156.8 58.1M39.7 30.2A1.5 1.5 0 0 1 37.6 32.3M117.3 79.6A1.2 1.2 0 0 1 115.7 81.3M50.4 85.0A2.0 2.0 0 0 1 47.6 87.8M130.4 117.8A2.0 2.0 0 0 1 127.6 120.6M163.7 15.4A1.2 1.2 0 0 1 162.0 17.1M160.5 135.2A2.0 2.0 0 0 1 157.7 138.0M133.6 53.1A1.5 1.5 0 0 1 131.5 55.2M104.9 87.1A2.0 2.0 0 0 1 102.1 89.9M90.9 83.3A1.0 1.0 0 0 1 89.5 84.7M184.5 81.7A1.5 1.5 0 0 1 182.4 83.8M51.5 73.3A1.5 1.5 0 0 1 49.4 75.4M119.1 -0.3A1.5 1.5 0 0 1 117.0 1.8M124.3 91.2A1.5 1.5 0 0 1 122.2 93.3M111.6 130.9A2.0 2.0 0 0 1 108.8 133.7M25.7 124.6A1.0 1.0 0 0 1 24.3 126.0M108.7 42.7A2.0 2.0 0 0 1 105.9 45.5M182.6 24.6A1.5 1.5 0 0 1 180.5 26.7M189.6 44.1A2.0 2.0 0 0 1 186.8 46.9M104.1 105.3A1.0 1.0 0 0 1 102.7 106.7M43.2 73.7A1.0 1.0 0 0 1 41.8 75.1M167.0 142.2A1.5 1.5 0 0 1 164.9 144.3M83.0 146.5A1.5 1.5 0 0 1 80.9 148.6M66.6 3.3A0.8 0.8 0 0 1 65.5 4.4M120.7 0.5A2.0 2.0 0 0 1 117.9 3.3M145.8 105.9A1.2 1.2 0 0 1 144.1 107.6M81.9 60.9A1.2 1.2 0 0 1 80.2 62.6M139.5 39.1A1.2 1.2 0 0 1 137.9 40.7M80.9 27.8A2.0 2.0 0 0 1 78.1 30.6M82.5 41.3A1.0 1.0 0 0 1 81.1 42.7M46.8 54.8A2.0 2.0 0 0 1 44.0 57.6" stroke="#cdcdcd" stroke-width="0.5" fill="none" opacity=".6"/></g></g></svg></div>
<div class="cell" style="left:10px;top:329px;" id="c4"><svg width="200" height="150" viewBox="0 0 200 150"><defs><filter id="g4b" x="-50%" y="-50%" width="200%" height="200%"><feGaussianBlur stdDeviation="1.6"/></filter><filter id="g4b3" x="-50%" y="-50%" width="200%" height="200%"><feGaussianBlur stdDeviation="3.5"/></filter><radialGradient id="g4g"><stop offset="0" stop-color="#f8f2e6"/><stop offset=".12" stop-color="#e0d6c8" stop-opacity=".8"/><stop offset=".45" stop-color="#a09888" stop-opacity=".3"/><stop offset="1" stop-color="#807868" stop-opacity="0"/></radialGradient><linearGradient id="g4t" x1="1" y1="0" x2="0" y2="0"><stop offset="0" stop-color="#9ab8a8" stop-opacity=".42"/><stop offset=".4" stop-color="#807c70" stop-opacity=".2"/><stop offset="1" stop-color="#605c54" stop-opacity="0"/></linearGradient></defs><rect width="200" height="150" fill="#211f1d"/><path d="M81.7 81.3h0M57.0 79.0h0M182.7 6.4h0M48.8 125.7h0M78.1 83.4h0M88.8 87.8h0M132.9 37.5h0M81.5 87.5h0" stroke="#ffffff" stroke-width="1.0" stroke-linecap="round" opacity="0.2" fill="none"/><path d="M57.9 33.7h0M92.1 24.2h0M128.3 78.8h0M55.1 28.2h0M11.1 33.0h0M195.8 98.4h0M86.8 99.4h0M117.6 145.6h0M108.0 78.7h0M142.7 127.8h0M196.1 26.2h0" stroke="#c8b8a0" stroke-width="0.8" stroke-linecap="round" opacity="0.2" fill="none"/><path d="M138.7 56.8h0M117.7 40.5h0M99.3 56.7h0M3.9 116.0h0M130.5 113.7h0M83.1 102.4h0M4.7 141.9h0M76.0 135.6h0M58.9 25.9h0M149.3 122.0h0M109.3 10.5h0M48.9 75.1h0M12.0 51.7h0M57.8 23.6h0M29.6 27.7h0M17.8 121.3h0M109.3 74.5h0M127.7 130.8h0M56.4 144.5h0M150.0 80.4h0M86.0 30.2h0M68.8 83.2h0M178.9 138.8h0M166.3 50.4h0M150.1 75.5h0M169.0 100.3h0M176.7 44.3h0M49.0 15.1h0M129.2 51.5h0M168.3 84.1h0M91.7 77.4h0M187.1 110.9h0M192.5 42.5h0" stroke="#c8b8a0" stroke-width="0.6" stroke-linecap="round" opacity="0.6" fill="none"/><path d="M71.7 50.8h0M105.6 131.7h0M197.0 34.9h0M174.8 80.6h0M108.6 80.9h0M93.6 17.4h0M82.8 23.4h0M126.5 45.9h0M151.2 12.4h0M26.4 59.4h0M59.8 95.7h0M73.4 86.1h0M48.5 137.4h0M168.5 88.2h0M136.3 142.0h0M132.4 4.9h0M141.9 117.0h0" stroke="#d8d0c0" stroke-width="0.6" stroke-linecap="round" opacity="0.2" fill="none"/><path d="M7.0 57.9h0M73.9 70.6h0M116.8 37.8h0M111.7 8.0h0M23.1 95.1h0M25.9 94.5h0M7.1 18.2h0M158.7 64.1h0M138.7 26.7h0M162.7 80.7h0M31.6 2.8h0M76.7 9.0h0M135.7 10.9h0M99.0 133.9h0M79.1 12.8h0M95.3 100.6h0M176.4 140.9h0M61.2 132.3h0M112.3 52.4h0M101.4 106.7h0M152.1 7.6h0M141.6 37.9h0M102.8 32.2h0M124.0 115.9h0M81.7 5.2h0M132.7 21.9h0M23.6 48.5h0M107.5 6.1h0M109.8 85.1h0" stroke="#ffffff" stroke-width="0.6" stroke-linecap="round" opacity="0.6" fill="none"/><path d="M26.0 112.1h0M181.5 124.0h0M118.3 49.1h0M155.0 40.9h0M197.9 8.6h0M84.2 88.7h0M103.1 120.2h0M100.4 118.1h0M115.7 26.9h0M58.0 2.7h0M93.9 63.6h0M36.6 17.2h0M163.2 76.1h0M46.8 107.7h0M121.2 86.0h0M21.4 83.1h0" stroke="#a09888" stroke-width="0.8" stroke-linecap="round" opacity="0.2" fill="none"/><path d="M142.0 110.8h0M46.7 68.3h0M44.6 2.2h0M17.0 36.5h0M113.0 58.0h0M65.5 45.9h0M86.3 95.1h0M13.5 78.7h0M113.8 28.9h0M149.6 75.8h0M48.3 100.8h0M82.0 39.7h0M125.8 115.6h0M130.1 17.2h0M138.8 26.6h0M20.8 129.5h0M145.9 51.4h0M116.4 140.1h0M53.5 105.5h0M182.4 114.3h0M85.5 25.1h0M90.6 23.8h0" stroke="#c8b8a0" stroke-width="0.8" stroke-linecap="round" opacity="0.6" fill="none"/><path d="M123.3 146.0h0M123.9 44.1h0M102.1 4.7h0M74.6 106.1h0M60.4 9.4h0M106.2 98.4h0M100.3 60.0h0M114.2 128.2h0M128.8 125.4h0M28.5 66.9h0M76.6 21.0h0M192.9 140.0h0M139.4 96.0h0M27.7 27.4h0M125.0 77.6h0M4.1 66.6h0M24.2 139.5h0M52.1 57.2h0M118.5 121.7h0M106.2 65.9h0M165.5 135.6h0M116.2 34.7h0M55.6 5.2h0M34.2 18.3h0M18.4 11.3h0M171.6 1.5h0M2.4 7.9h0M163.3 57.4h0M74.5 131.9h0M106.3 113.6h0M65.1 122.3h0" stroke="#d8d0c0" stroke-width="0.8" stroke-linecap="round" opacity="0.4" fill="none"/><path d="M198.9 53.5h0M55.9 144.1h0M34.6 132.0h0M121.8 71.0h0M183.4 37.1h0M143.4 104.7h0M67.0 145.2h0M58.1 27.1h0M150.3 4.1h0M34.0 149.8h0M87.6 7.3h0M41.1 139.4h0M24.2 83.9h0M179.6 106.4h0M75.3 17.6h0M163.4 32.4h0" stroke="#c8b8a0" stroke-width="0.6" stroke-linecap="round" opacity="0.2" fill="none"/><path d="M22.5 33.6h0M87.0 26.8h0M72.3 19.5h0M131.6 64.8h0M41.5 10.7h0M196.0 1.0h0M48.9 104.4h0M50.4 71.5h0M154.5 42.6h0M21.5 8.5h0M145.5 35.3h0M154.6 136.9h0M143.8 96.6h0M9.8 76.4h0M164.1 143.6h0M112.1 127.6h0M168.1 26.2h0M44.6 77.2h0M178.4 39.8h0M91.5 86.8h0M141.4 118.2h0M36.3 125.5h0M58.2 81.6h0M27.6 13.5h0M17.0 142.6h0M8.5 43.0h0M180.5 128.6h0M38.7 132.5h0M101.1 34.3h0M59.9 27.3h0M68.9 102.2h0M181.6 128.8h0M120.0 15.0h0M177.6 105.2h0M77.0 59.3h0M197.8 32.1h0M112.2 127.6h0M47.4 90.4h0M37.4 80.2h0" stroke="#d8d0c0" stroke-width="0.8" stroke-linecap="round" opacity="0.6" fill="none"/><path d="M135.2 71.1h0M6.0 1.5h0M117.6 23.9h0M134.6 139.6h0M66.3 103.1h0M109.6 44.9h0M163.5 106.9h0M199.4 85.7h0M105.6 112.2h0M77.9 35.8h0M145.7 9.4h0M6.7 60.3h0M78.7 0.9h0M46.3 53.2h0M77.2 75.1h0M188.5 27.6h0M154.4 1.6h0M140.1 93.3h0M75.3 128.5h0M9.4 93.6h0M178.0 3.6h0" stroke="#d8d0c0" stroke-width="0.4" stroke-linecap="round" opacity="0.6" fill="none"/><path d="M109.3 73.1h0M61.5 4.9h0M149.7 118.7h0M126.6 71.3h0M157.5 123.9h0M79.6 35.3h0M166.9 64.9h0M171.9 98.1h0M21.6 115.1h0M34.5 138.5h0M94.8 104.5h0M188.2 88.1h0M52.2 83.9h0M37.2 148.1h0M112.8 146.5h0M31.7 111.5h0M107.3 44.9h0M133.6 3.7h0M4.8 59.3h0M170.2 117.3h0M127.4 23.9h0M58.4 147.8h0M183.3 119.3h0M187.7 44.3h0M157.9 97.4h0M52.7 1.0h0M32.9 52.1h0M43.8 100.6h0M66.1 46.3h0M9.7 41.1h0" stroke="#a09888" stroke-width="0.6" stroke-linecap="round" opacity="0.4" fill="none"/><path d="M60.4 132.4h0M112.0 11.0h0M69.7 139.3h0M136.8 139.2h0M136.5 30.9h0M139.3 85.8h0M154.7 105.8h0M84.2 68.3h0M198.0 104.0h0M100.1 85.4h0M198.9 80.7h0M182.2 127.5h0M55.2 90.6h0M182.6 87.5h0M185.3 91.3h0M177.1 144.2h0M52.9 136.2h0M69.5 18.3h0M66.2 61.6h0M37.1 36.2h0M16.4 60.5h0M198.8 111.0h0M197.1 9.1h0M178.1 78.1h0M7.6 95.7h0" stroke="#ffffff" stroke-width="0.6" stroke-linecap="round" opacity="0.4" fill="none"/><path d="M188.7 98.6h0M107.8 105.3h0M121.3 128.2h0M105.8 107.3h0M120.1 29.5h0M12.8 133.7h0M40.1 146.3h0M119.0 106.0h0M8.3 88.6h0M100.8 95.8h0M195.4 58.2h0M80.0 44.1h0M128.0 60.3h0M182.8 118.6h0M140.2 117.2h0M129.3 20.2h0M64.8 110.2h0M90.2 0.9h0" stroke="#c8b8a0" stroke-width="0.4" stroke-linecap="round" opacity="0.4" fill="none"/><path d="M182.4 12.6h0M52.9 97.8h0M150.4 104.7h0M1.5 127.2h0M17.4 124.5h0M20.0 71.8h0M116.6 121.3h0M127.4 32.0h0M36.7 88.3h0M149.5 118.3h0M52.4 25.7h0M179.1 26.2h0M72.4 149.0h0M190.2 39.8h0M2.3 134.2h0M103.8 99.9h0M59.7 85.8h0M73.0 121.9h0" stroke="#c8b8a0" stroke-width="1.0" stroke-linecap="round" opacity="0.6" fill="none"/><path d="M149.1 75.5h0M62.2 80.4h0M195.6 93.2h0M62.0 18.1h0M5.0 69.8h0M79.7 87.2h0M110.3 117.0h0M11.5 37.7h0M37.1 10.9h0M78.3 114.6h0M51.9 32.1h0M38.5 114.1h0M91.3 123.8h0M196.9 116.0h0M99.5 18.3h0M19.9 35.7h0M13.6 126.9h0M14.4 3.1h0M62.0 26.3h0" stroke="#ffffff" stroke-width="0.6" stroke-linecap="round" opacity="0.2" fill="none"/><path d="M197.8 67.9h0M43.9 23.5h0M27.3 112.3h0M137.9 24.1h0M148.1 30.9h0M74.3 108.8h0M27.9 43.2h0M132.4 28.3h0M26.8 44.1h0M77.1 140.3h0M14.7 82.1h0M173.0 141.0h0M122.4 82.1h0M35.6 3.0h0M176.3 41.9h0M144.0 51.5h0M118.1 134.2h0M139.3 149.9h0" stroke="#c8b8a0" stroke-width="0.4" stroke-linecap="round" opacity="0.6" fill="none"/><path d="M105.5 47.9h0M30.5 109.0h0M19.9 131.5h0M175.9 59.6h0M44.7 40.9h0M112.6 59.3h0M8.7 3.4h0M58.5 9.4h0M91.2 141.7h0M112.8 101.5h0M126.0 55.5h0M57.7 110.3h0M53.1 13.3h0M27.4 67.2h0M1.7 11.3h0M22.8 135.0h0M126.6 108.2h0M179.1 30.3h0M7.1 38.1h0M191.5 33.9h0M45.0 59.2h0M114.8 5.7h0M29.1 84.6h0M25.5 108.7h0M147.0 117.8h0M53.3 54.5h0" stroke="#d8d0c0" stroke-width="0.6" stroke-linecap="round" opacity="0.4" fill="none"/><path d="M15.8 136.8h0M86.8 35.0h0M64.0 112.3h0M194.0 51.4h0M157.2 148.1h0M0.6 73.9h0M107.5 23.3h0M131.5 141.9h0M129.1 116.3h0M0.3 137.0h0M72.1 16.9h0M170.9 57.0h0M49.1 110.4h0M21.0 114.3h0M130.3 114.2h0M199.0 67.4h0" stroke="#a09888" stroke-width="1.0" stroke-linecap="round" opacity="0.6" fill="none"/><path d="M76.4 144.4h0M22.6 119.5h0M197.4 82.3h0M16.0 9.2h0M52.4 107.8h0M62.8 53.5h0M153.5 117.6h0M164.2 110.6h0M114.2 66.8h0M51.1 80.3h0M149.5 80.2h0M29.0 43.0h0M75.8 31.5h0M131.8 111.6h0M27.8 86.1h0M97.3 102.8h0M26.9 27.7h0M68.6 80.8h0M180.0 114.6h0M0.1 23.9h0M37.4 64.6h0M194.1 68.7h0M7.1 25.1h0M195.6 88.6h0M171.0 96.1h0M119.0 127.6h0M184.5 49.4h0" stroke="#a09888" stroke-width="0.8" stroke-linecap="round" opacity="0.6" fill="none"/><path d="M108.7 11.6h0M146.0 138.3h0M62.2 109.8h0M16.8 96.3h0M134.8 136.3h0M160.3 116.2h0M198.0 149.6h0M60.2 41.4h0M32.1 17.3h0M158.5 7.2h0M25.5 23.5h0M36.2 7.1h0M3.3 10.0h0M157.2 117.5h0M87.1 13.7h0M99.4 68.7h0M156.3 149.6h0M16.9 76.1h0M173.2 92.4h0" stroke="#d8d0c0" stroke-width="0.4" stroke-linecap="round" opacity="0.4" fill="none"/><path d="M127.7 46.2h0M58.3 132.4h0M52.9 93.6h0M158.1 120.5h0M60.4 13.4h0M89.6 25.7h0M180.8 146.3h0M114.1 0.8h0" stroke="#ffffff" stroke-width="0.4" stroke-linecap="round" opacity="0.6" fill="none"/><path d="M135.8 103.4h0M179.2 104.7h0M69.0 54.6h0M41.5 38.3h0M169.6 131.7h0M98.9 7.2h0M8.2 140.7h0M196.8 34.0h0M169.1 54.5h0M23.8 35.7h0M143.0 108.8h0M102.9 112.0h0M129.4 99.1h0M20.0 22.3h0M132.2 81.3h0M120.7 8.9h0M25.3 73.0h0M11.9 90.0h0M63.7 115.3h0M130.9 89.3h0M121.7 45.5h0M103.8 65.8h0M197.2 115.5h0M92.8 78.6h0M8.5 32.8h0M142.6 142.5h0M104.6 62.6h0M22.9 72.7h0" stroke="#c8b8a0" stroke-width="0.6" stroke-linecap="round" opacity="0.4" fill="none"/><path d="M23.4 2.4h0M196.7 79.9h0M63.1 115.8h0M177.7 123.8h0M138.2 99.4h0M129.8 1.1h0M169.1 18.1h0M121.7 16.8h0M8.6 87.0h0M178.7 36.3h0M49.2 17.9h0M6.1 30.7h0M122.8 84.9h0M24.0 146.0h0M189.8 133.5h0M134.8 123.1h0M193.7 16.2h0M171.2 144.7h0M93.1 23.7h0M99.1 10.8h0M199.8 39.2h0M158.7 39.0h0" stroke="#ffffff" stroke-width="0.4" stroke-linecap="round" opacity="0.4" fill="none"/><path d="M49.7 41.2h0M195.8 36.6h0M191.3 20.8h0M44.5 132.1h0M192.9 21.2h0M100.0 120.6h0M132.4 32.7h0M95.9 7.5h0M188.9 104.4h0M33.4 19.5h0M171.7 135.8h0M37.4 8.6h0M167.5 79.4h0M134.5 127.0h0" stroke="#a09888" stroke-width="0.4" stroke-linecap="round" opacity="0.4" fill="none"/><path d="M153.7 24.5h0M104.8 142.3h0M172.2 144.1h0M52.1 140.8h0M57.6 81.1h0M143.2 12.9h0M74.6 75.6h0M175.0 13.1h0M152.5 62.7h0M140.9 136.2h0M102.7 8.6h0M52.8 80.8h0" stroke="#c8b8a0" stroke-width="1.0" stroke-linecap="round" opacity="0.4" fill="none"/><path d="M90.1 133.6h0M188.8 49.8h0M39.0 34.1h0M63.0 90.3h0M166.7 129.1h0M70.1 76.0h0M136.7 1.4h0M115.3 145.6h0M3.6 145.5h0M189.7 149.7h0M24.8 97.9h0M125.8 37.9h0M125.6 98.5h0M185.5 54.5h0M157.3 1.5h0M63.7 130.9h0M106.3 76.6h0M79.8 40.5h0M21.0 0.1h0M102.3 127.4h0M34.1 83.3h0M108.5 149.1h0M37.2 123.1h0" stroke="#a09888" stroke-width="0.6" stroke-linecap="round" opacity="0.6" fill="none"/><path d="M88.7 142.1h0M17.1 76.7h0M29.3 11.7h0M153.3 113.3h0M57.9 20.8h0M178.5 24.3h0M144.3 122.6h0M170.8 47.1h0M23.3 40.4h0M157.8 52.6h0M196.7 135.5h0M98.7 41.1h0M72.3 57.7h0" stroke="#ffffff" stroke-width="0.8" stroke-linecap="round" opacity="0.2" fill="none"/><path d="M33.8 119.6h0M110.4 106.9h0M74.0 6.2h0M38.3 105.9h0M73.3 30.2h0M38.2 97.8h0M23.7 22.9h0M144.8 118.2h0M63.7 42.3h0M169.0 38.9h0M88.1 113.6h0M188.5 63.6h0M154.1 113.5h0M120.5 45.1h0M89.8 139.3h0M140.0 108.3h0M40.6 54.2h0M99.4 130.3h0M195.6 55.0h0M178.1 102.1h0M29.1 76.9h0M129.0 84.3h0M131.6 88.8h0M166.9 31.9h0M109.6 77.2h0M138.1 34.1h0M76.0 12.8h0M35.9 119.7h0M3.0 54.6h0" stroke="#d8d0c0" stroke-width="0.6" stroke-linecap="round" opacity="0.6" fill="none"/><path d="M106.2 53.7h0M9.9 26.3h0M124.2 42.8h0M189.9 20.7h0M138.1 42.2h0M79.1 29.1h0M25.5 24.0h0M45.0 41.4h0M166.2 145.2h0M164.7 63.8h0" stroke="#d8d0c0" stroke-width="1.0" stroke-linecap="round" opacity="0.2" fill="none"/><path d="M84.3 105.1h0M136.1 53.0h0M85.2 52.6h0M56.5 119.0h0M167.6 125.7h0M76.7 121.1h0M24.2 39.6h0M103.3 90.0h0M106.5 80.8h0M186.7 99.3h0M144.5 121.3h0M121.0 112.4h0M59.7 113.7h0" stroke="#a09888" stroke-width="0.6" stroke-linecap="round" opacity="0.2" fill="none"/><path d="M49.4 28.9h0M83.2 134.9h0M43.6 128.5h0M149.7 145.4h0M123.8 76.8h0M82.6 125.3h0M56.4 78.6h0M123.3 7.2h0M53.7 80.7h0M146.1 10.7h0M134.0 59.4h0M161.5 143.7h0M135.6 116.6h0M194.4 0.7h0M16.6 68.5h0M155.7 120.7h0M30.1 114.1h0M180.5 113.4h0M128.5 52.5h0M60.0 66.5h0M8.7 89.7h0M151.0 38.1h0M126.5 52.4h0M150.6 17.2h0M60.9 137.9h0M197.7 3.4h0M17.7 69.5h0M25.3 16.7h0" stroke="#a09888" stroke-width="0.8" stroke-linecap="round" opacity="0.4" fill="none"/><path d="M192.5 46.0h0M0.0 58.5h0M20.5 108.4h0M127.6 111.9h0M28.1 117.1h0M46.4 149.1h0M19.4 90.0h0M93.0 35.2h0M62.0 93.3h0M21.9 121.0h0M183.2 35.8h0M137.5 92.4h0M146.0 105.9h0M25.9 99.8h0M172.6 83.1h0M23.8 16.2h0M114.3 77.5h0M167.5 71.5h0M62.0 142.8h0M130.9 66.3h0M115.1 5.6h0M50.2 108.5h0M139.1 45.0h0M174.7 102.2h0M186.6 16.8h0M75.9 107.7h0M154.5 65.9h0M66.1 28.6h0M111.2 12.1h0M191.4 15.5h0M75.8 24.9h0M173.7 49.7h0M112.9 56.4h0" stroke="#ffffff" stroke-width="0.8" stroke-linecap="round" opacity="0.4" fill="none"/><path d="M91.1 92.2h0M4.4 12.9h0M106.7 89.4h0M199.7 7.5h0M90.9 71.3h0M127.5 59.0h0M177.6 33.1h0M52.5 1.7h0M199.9 17.9h0M187.5 35.1h0M168.5 25.0h0" stroke="#ffffff" stroke-width="1.0" stroke-linecap="round" opacity="0.4" fill="none"/><path d="M121.2 35.0h0M170.4 93.1h0M198.1 16.1h0M195.9 69.6h0M132.6 59.8h0M157.2 121.5h0M89.6 92.0h0M62.5 27.8h0M24.6 146.7h0M52.9 10.9h0M162.9 92.3h0M36.2 77.7h0M111.4 133.8h0M10.7 100.8h0M159.6 89.9h0M33.5 92.2h0M196.2 109.3h0M51.6 79.3h0" stroke="#c8b8a0" stroke-width="0.8" stroke-linecap="round" opacity="0.4" fill="none"/><path d="M113.7 21.6h0M115.4 35.8h0M0.8 62.9h0M7.0 64.1h0M6.7 65.6h0M111.2 103.5h0M84.9 123.3h0M134.0 15.7h0M153.9 27.5h0M120.5 85.5h0M142.7 0.6h0M131.4 99.9h0M111.3 117.5h0M49.6 47.1h0M66.8 111.7h0M120.9 0.8h0M161.5 72.8h0M138.3 16.9h0" stroke="#a09888" stroke-width="1.0" stroke-linecap="round" opacity="0.4" fill="none"/><path d="M70.1 143.1h0M163.1 70.9h0M118.2 57.8h0M59.5 6.2h0M37.5 136.5h0M146.2 125.0h0M68.2 63.8h0" stroke="#a09888" stroke-width="0.4" stroke-linecap="round" opacity="0.2" fill="none"/><path d="M67.5 40.0h0M117.7 94.0h0M37.8 21.2h0M51.7 13.5h0M153.9 10.1h0M68.0 67.9h0M13.0 45.6h0M98.4 63.0h0M101.7 95.0h0M82.6 97.3h0" stroke="#d8d0c0" stroke-width="0.4" stroke-linecap="round" opacity="0.2" fill="none"/><path d="M78.2 112.2h0M112.8 113.4h0M29.7 149.7h0M71.7 142.0h0M119.9 73.1h0M7.1 39.5h0M59.7 111.3h0M177.9 74.0h0M150.0 4.5h0M98.9 101.4h0M56.7 114.4h0M63.7 81.4h0M154.6 62.7h0M52.2 24.5h0M168.2 14.0h0M67.9 25.5h0M133.6 4.9h0M198.7 37.2h0M95.4 14.4h0M160.1 55.5h0M89.0 128.3h0M109.9 8.6h0M160.8 6.7h0M160.8 77.9h0M163.6 140.5h0M121.2 8.7h0M150.7 95.9h0M61.0 71.5h0M5.5 147.7h0M143.1 100.1h0M101.4 55.8h0M20.6 23.7h0M129.8 15.7h0M22.7 63.4h0M152.4 87.2h0M49.6 15.4h0" stroke="#ffffff" stroke-width="0.8" stroke-linecap="round" opacity="0.6" fill="none"/><path d="M165.2 134.8h0M170.4 146.0h0M68.7 68.2h0M70.3 33.9h0M22.6 1.5h0M74.3 130.7h0M135.4 16.3h0M23.2 55.1h0M145.4 79.0h0M66.1 79.2h0" stroke="#c8b8a0" stroke-width="1.0" stroke-linecap="round" opacity="0.2" fill="none"/><path d="M137.3 93.4h0M171.0 25.1h0M86.2 5.4h0M64.0 131.2h0M183.0 94.4h0M181.2 77.3h0M111.8 133.7h0M183.2 129.9h0M124.0 7.3h0M93.7 9.3h0" stroke="#c8b8a0" stroke-width="0.4" stroke-linecap="round" opacity="0.2" fill="none"/><path d="M82.9 107.6h0M184.2 134.3h0M25.3 53.8h0M135.5 127.4h0M92.7 66.8h0M132.5 9.6h0M68.5 111.4h0M161.1 15.9h0M34.2 45.6h0M134.8 96.2h0M190.4 92.1h0M131.8 117.3h0" stroke="#ffffff" stroke-width="1.0" stroke-linecap="round" opacity="0.6" fill="none"/><path d="M143.4 100.8h0M40.9 116.2h0M140.6 53.9h0M40.8 3.8h0M188.1 149.9h0M68.7 103.6h0M110.4 66.8h0M199.7 59.7h0M197.2 62.2h0M169.5 43.9h0" stroke="#a09888" stroke-width="0.4" stroke-linecap="round" opacity="0.6" fill="none"/><path d="M35.0 122.6h0M58.4 23.9h0M13.8 59.4h0M175.9 18.5h0M38.0 135.5h0M69.0 82.9h0M110.7 114.9h0M54.2 83.5h0M149.5 132.5h0M170.6 61.5h0M191.1 100.2h0M103.9 17.9h0M191.5 30.0h0M182.3 117.1h0M123.4 99.4h0M157.5 125.0h0M103.9 17.7h0M59.0 96.3h0M137.8 49.0h0M109.8 42.7h0" stroke="#d8d0c0" stroke-width="1.0" stroke-linecap="round" opacity="0.4" fill="none"/><path d="M180.9 118.8h0M97.6 17.2h0M174.9 126.2h0M124.4 136.2h0M123.6 112.2h0M23.6 129.4h0" stroke="#ffffff" stroke-width="0.4" stroke-linecap="round" opacity="0.2" fill="none"/><path d="M110.1 75.7h0M112.6 71.0h0M108.4 35.4h0M198.4 120.8h0M42.3 144.0h0M195.0 76.0h0M65.5 138.9h0M1.3 120.5h0" stroke="#a09888" stroke-width="1.0" stroke-linecap="round" opacity="0.2" fill="none"/><path d="M96.5 46.7h0M122.4 128.1h0M14.5 34.5h0M91.8 2.5h0M51.8 92.8h0M194.9 126.8h0M94.2 79.6h0M33.0 112.8h0M180.9 60.2h0M134.3 73.8h0M148.4 71.7h0M99.9 139.1h0M177.4 66.6h0M131.2 74.7h0M78.6 66.4h0M120.2 35.2h0M56.2 107.5h0M95.3 92.1h0M5.5 88.6h0M133.9 9.9h0" stroke="#d8d0c0" stroke-width="1.0" stroke-linecap="round" opacity="0.6" fill="none"/><path d="M0.3 74.9h0M50.6 131.6h0M158.9 120.8h0M137.6 19.8h0M24.9 115.3h0M157.8 47.3h0M2.7 99.0h0M3.3 60.0h0M116.9 115.9h0M76.8 111.3h0M119.3 111.2h0M10.5 101.3h0" stroke="#d8d0c0" stroke-width="0.8" stroke-linecap="round" opacity="0.2" fill="none"/><path d="M37.1 36.9h0M16.7 24.5h0M32.4 16.6h0M149.0 104.6h0M1.5 31.1h0" stroke="#e0a868" stroke-width="1.2" stroke-linecap="round" opacity="0.8" fill="none"/><path d="M24.5 78.5h0M160.0 15.2h0M90.0 38.6h0M47.3 117.9h0M157.9 31.3h0M18.7 7.1h0M126.4 139.4h0M129.3 47.8h0M184.9 138.3h0M116.6 116.9h0M171.7 13.0h0" stroke="#d89048" stroke-width="1.2" stroke-linecap="round" opacity="0.6" fill="none"/><path d="M76.5 147.0h0M41.2 139.6h0M40.3 74.6h0M53.8 114.8h0M87.2 71.9h0" stroke="#b87034" stroke-width="1.6" stroke-linecap="round" opacity="0.8" fill="none"/><path d="M196.7 56.4h0M36.6 146.7h0M110.3 53.8h0M174.7 15.4h0M152.9 93.5h0" stroke="#d89048" stroke-width="1.0" stroke-linecap="round" opacity="0.8" fill="none"/><path d="M112.2 12.6h0M23.9 55.6h0" stroke="#b87034" stroke-width="1.2" stroke-linecap="round" opacity="0.8" fill="none"/><path d="M182.6 117.2h0M66.8 127.2h0M115.2 122.4h0M101.8 90.6h0M117.0 73.3h0M164.0 96.1h0M161.0 45.7h0M119.0 50.8h0" stroke="#d89048" stroke-width="1.0" stroke-linecap="round" opacity="0.6" fill="none"/><path d="M173.0 3.2h0M196.2 44.4h0M132.1 98.1h0M151.0 133.8h0M160.6 63.2h0" stroke="#c88038" stroke-width="1.0" stroke-linecap="round" opacity="0.6" fill="none"/><path d="M29.0 64.9h0M75.9 61.6h0M125.8 71.4h0M138.2 4.6h0M119.7 26.7h0" stroke="#e0a868" stroke-width="1.0" stroke-linecap="round" opacity="0.6" fill="none"/><path d="M62.9 129.6h0M31.0 136.7h0M172.7 143.3h0M27.4 121.5h0" stroke="#c88038" stroke-width="1.0" stroke-linecap="round" opacity="0.8" fill="none"/><path d="M135.7 77.8h0M84.1 32.7h0" stroke="#e0a868" stroke-width="1.6" stroke-linecap="round" opacity="0.6" fill="none"/><path d="M53.0 32.7h0M99.3 4.4h0M141.7 52.6h0M102.1 142.5h0M18.9 105.4h0M113.8 65.3h0" stroke="#b87034" stroke-width="1.2" stroke-linecap="round" opacity="0.6" fill="none"/><path d="M117.4 6.1h0M87.8 124.9h0M18.4 70.1h0" stroke="#c88038" stroke-width="1.2" stroke-linecap="round" opacity="0.8" fill="none"/><path d="M33.7 91.0h0M164.9 78.0h0M110.3 94.5h0M125.9 23.4h0M133.0 10.0h0M135.5 73.9h0M115.5 89.1h0" stroke="#d89048" stroke-width="1.4" stroke-linecap="round" opacity="0.6" fill="none"/><path d="M101.2 30.5h0M15.6 41.3h0M108.1 13.7h0M114.1 52.3h0" stroke="#d89048" stroke-width="1.4" stroke-linecap="round" opacity="0.8" fill="none"/><path d="M115.8 123.7h0M77.0 148.5h0M184.5 119.8h0M81.7 40.7h0" stroke="#d89048" stroke-width="1.6" stroke-linecap="round" opacity="0.6" fill="none"/><path d="M129.4 103.2h0M189.0 51.8h0M73.0 0.9h0" stroke="#c88038" stroke-width="1.6" stroke-linecap="round" opacity="0.8" fill="none"/><path d="M148.2 103.5h0M172.6 44.5h0M158.0 24.0h0M5.5 123.0h0M69.1 4.0h0" stroke="#e0a868" stroke-width="1.4" stroke-linecap="round" opacity="0.8" fill="none"/><path d="M1.1 143.8h0M170.0 10.7h0M48.5 60.6h0M185.8 70.7h0M133.2 90.8h0" stroke="#c88038" stroke-width="1.2" stroke-linecap="round" opacity="0.6" fill="none"/><path d="M112.3 99.3h0M144.9 21.1h0M121.1 43.9h0" stroke="#e0a868" stroke-width="1.4" stroke-linecap="round" opacity="0.6" fill="none"/><path d="M90.5 102.0h0M193.8 45.1h0M141.5 99.1h0M142.8 9.9h0" stroke="#d89048" stroke-width="1.2" stroke-linecap="round" opacity="0.8" fill="none"/><path d="M140.4 11.6h0M41.9 50.5h0M65.9 95.5h0M55.5 58.7h0M41.9 96.5h0M162.0 147.3h0" stroke="#c88038" stroke-width="1.4" stroke-linecap="round" opacity="0.8" fill="none"/><path d="M33.7 24.5h0M143.2 114.4h0M150.2 148.6h0M135.6 97.7h0M123.6 93.3h0" stroke="#b87034" stroke-width="1.4" stroke-linecap="round" opacity="0.8" fill="none"/><path d="M8.3 67.5h0M84.8 17.0h0" stroke="#c88038" stroke-width="1.4" stroke-linecap="round" opacity="0.6" fill="none"/><path d="M51.4 37.8h0M172.9 49.0h0" stroke="#e0a868" stroke-width="1.6" stroke-linecap="round" opacity="0.8" fill="none"/><path d="M18.8 93.5h0M54.0 120.9h0M29.2 140.9h0" stroke="#e0a868" stroke-width="1.0" stroke-linecap="round" opacity="0.8" fill="none"/><path d="M8.0 0.7h0M126.6 78.6h0M23.9 130.8h0M132.6 119.3h0M57.6 100.2h0M96.9 140.6h0" stroke="#b87034" stroke-width="1.0" stroke-linecap="round" opacity="0.8" fill="none"/><path d="M10.9 96.9h0M148.8 130.5h0M39.4 38.7h0" stroke="#b87034" stroke-width="1.4" stroke-linecap="round" opacity="0.6" fill="none"/><path d="M123.6 36.0h0M101.6 137.6h0M159.3 114.9h0" stroke="#e0a868" stroke-width="1.2" stroke-linecap="round" opacity="0.6" fill="none"/><path d="M103.6 67.5h0M47.7 81.1h0M114.5 97.5h0" stroke="#b87034" stroke-width="1.0" stroke-linecap="round" opacity="0.6" fill="none"/><path d="M24.6 91.1h0" stroke="#c88038" stroke-width="1.6" stroke-linecap="round" opacity="0.6" fill="none"/><g transform="rotate(-9.5 122 59)"><path d="M122 57.5 L44 66 L44 80 L122 61 Z" fill="url(#g4t)" filter="url(#g4b)"/></g><circle cx="121" cy="59.5" r="3.6" fill="#38a080" opacity=".6" filter="url(#g4b)"/><circle cx="122" cy="59.3" r="1.3" fill="#b8f0d8" opacity=".9" filter="url(#g4b)"/><circle cx="142.4" cy="111.4" r="16" fill="url(#g4g)"/><circle cx="137.8" cy="103.3" r=".4" fill="#f4ecd8" opacity="0.59"/><circle cx="145.6" cy="111.0" r=".4" fill="#f4ecd8" opacity="0.76"/><circle cx="139.3" cy="118.5" r=".4" fill="#f4ecd8" opacity="0.90"/><circle cx="144.1" cy="109.1" r=".4" fill="#f4ecd8" opacity="0.54"/><circle cx="146.4" cy="119.0" r=".4" fill="#f4ecd8" opacity="0.85"/><circle cx="131.8" cy="119.2" r=".4" fill="#f4ecd8" opacity="0.82"/><circle cx="142.4" cy="111.4" r=".4" fill="#f4ecd8" opacity="0.83"/><circle cx="145.4" cy="107.4" r=".4" fill="#f4ecd8" opacity="0.75"/><circle cx="151.4" cy="98.6" r=".4" fill="#f4ecd8" opacity="0.82"/><circle cx="153.5" cy="109.4" r=".4" fill="#f4ecd8" opacity="0.79"/><circle cx="142.3" cy="111.4" r=".4" fill="#f4ecd8" opacity="0.75"/><circle cx="143.0" cy="106.7" r=".4" fill="#f4ecd8" opacity="0.61"/><circle cx="129.4" cy="118.1" r=".4" fill="#f4ecd8" opacity="0.55"/><circle cx="137.1" cy="114.7" r=".4" fill="#f4ecd8" opacity="0.78"/><circle cx="142.0" cy="108.4" r=".4" fill="#f4ecd8" opacity="0.47"/><circle cx="141.9" cy="115.2" r=".4" fill="#f4ecd8" opacity="0.76"/><circle cx="139.3" cy="99.4" r=".4" fill="#f4ecd8" opacity="0.41"/><circle cx="139.3" cy="108.2" r=".4" fill="#f4ecd8" opacity="0.88"/><circle cx="146.9" cy="118.1" r=".4" fill="#f4ecd8" opacity="0.53"/><circle cx="139.8" cy="111.3" r=".4" fill="#f4ecd8" opacity="0.46"/><circle cx="132.8" cy="111.1" r=".4" fill="#f4ecd8" opacity="0.60"/><circle cx="158.3" cy="117.3" r=".4" fill="#f4ecd8" opacity="0.69"/><circle cx="134.7" cy="111.2" r=".4" fill="#f4ecd8" opacity="0.80"/><circle cx="151.2" cy="107.8" r=".4" fill="#f4ecd8" opacity="0.41"/><circle cx="138.8" cy="105.3" r=".4" fill="#f4ecd8" opacity="0.62"/><circle cx="144.3" cy="115.2" r=".4" fill="#f4ecd8" opacity="0.54"/><circle cx="139.9" cy="110.1" r=".4" fill="#f4ecd8" opacity="0.46"/><circle cx="150.5" cy="114.7" r=".4" fill="#f4ecd8" opacity="0.43"/><circle cx="142.7" cy="110.9" r=".4" fill="#f4ecd8" opacity="0.59"/><circle cx="138.9" cy="115.2" r=".4" fill="#f4ecd8" opacity="0.88"/><circle cx="140.9" cy="111.1" r=".4" fill="#f4ecd8" opacity="0.56"/><circle cx="140.9" cy="110.8" r=".4" fill="#f4ecd8" opacity="0.59"/><circle cx="141.2" cy="114.8" r=".4" fill="#f4ecd8" opacity="0.51"/><circle cx="140.5" cy="114.8" r=".4" fill="#f4ecd8" opacity="0.50"/><circle cx="140.8" cy="111.0" r=".4" fill="#f4ecd8" opacity="0.58"/><circle cx="142.4" cy="111.4" r=".4" fill="#f4ecd8" opacity="0.51"/><circle cx="144.6" cy="114.2" r=".4" fill="#f4ecd8" opacity="0.70"/><circle cx="140.5" cy="114.8" r=".4" fill="#f4ecd8" opacity="0.79"/><circle cx="138.1" cy="109.9" r=".4" fill="#f4ecd8" opacity="0.54"/><circle cx="131.0" cy="102.0" r=".4" fill="#f4ecd8" opacity="0.58"/><circle cx="135.2" cy="112.8" r=".4" fill="#f4ecd8" opacity="0.84"/><circle cx="136.3" cy="114.0" r=".4" fill="#f4ecd8" opacity="0.54"/><circle cx="143.1" cy="111.3" r=".4" fill="#f4ecd8" opacity="0.78"/><circle cx="139.7" cy="112.5" r=".4" fill="#f4ecd8" opacity="0.62"/><circle cx="136.8" cy="106.3" r=".4" fill="#f4ecd8" opacity="0.43"/><circle cx="139.8" cy="107.7" r=".4" fill="#f4ecd8" opacity="0.80"/><circle cx="140.9" cy="111.5" r=".4" fill="#f4ecd8" opacity="0.42"/><circle cx="142.8" cy="111.3" r=".4" fill="#f4ecd8" opacity="0.64"/><circle cx="132.8" cy="102.5" r=".4" fill="#f4ecd8" opacity="0.41"/><circle cx="142.5" cy="111.7" r=".4" fill="#f4ecd8" opacity="0.67"/><circle cx="142.3" cy="113.8" r=".4" fill="#f4ecd8" opacity="0.76"/><circle cx="146.1" cy="104.5" r=".4" fill="#f4ecd8" opacity="0.76"/><circle cx="141.1" cy="110.9" r=".4" fill="#f4ecd8" opacity="0.90"/><circle cx="134.9" cy="104.1" r=".4" fill="#f4ecd8" opacity="0.48"/><circle cx="135.1" cy="110.3" r=".4" fill="#f4ecd8" opacity="0.85"/><circle cx="135.7" cy="111.9" r=".4" fill="#f4ecd8" opacity="0.61"/><circle cx="141.0" cy="111.3" r=".4" fill="#f4ecd8" opacity="0.46"/><circle cx="131.9" cy="109.5" r=".4" fill="#f4ecd8" opacity="0.73"/><circle cx="139.1" cy="117.6" r=".4" fill="#f4ecd8" opacity="0.86"/><circle cx="141.9" cy="103.5" r=".4" fill="#f4ecd8" opacity="0.65"/><circle cx="134.9" cy="108.4" r=".4" fill="#f4ecd8" opacity="0.50"/><circle cx="140.1" cy="111.7" r=".4" fill="#f4ecd8" opacity="0.64"/><circle cx="137.8" cy="112.6" r=".4" fill="#f4ecd8" opacity="0.67"/><circle cx="142.1" cy="107.1" r=".4" fill="#f4ecd8" opacity="0.42"/><circle cx="156.5" cy="115.9" r=".4" fill="#f4ecd8" opacity="0.85"/><circle cx="141.0" cy="111.3" r=".4" fill="#f4ecd8" opacity="0.54"/><circle cx="142.5" cy="111.4" r=".4" fill="#f4ecd8" opacity="0.41"/><circle cx="136.0" cy="111.3" r=".4" fill="#f4ecd8" opacity="0.60"/><circle cx="145.3" cy="105.7" r=".4" fill="#f4ecd8" opacity="0.53"/><circle cx="144.0" cy="101.5" r=".4" fill="#f4ecd8" opacity="0.59"/><circle cx="139.4" cy="111.7" r=".4" fill="#f4ecd8" opacity="0.81"/><circle cx="142.7" cy="113.9" r=".4" fill="#f4ecd8" opacity="0.86"/><circle cx="144.2" cy="117.5" r=".4" fill="#f4ecd8" opacity="0.43"/><circle cx="140.3" cy="105.0" r=".4" fill="#f4ecd8" opacity="0.80"/><circle cx="148.1" cy="104.4" r=".4" fill="#f4ecd8" opacity="0.60"/><circle cx="142.2" cy="112.0" r=".4" fill="#f4ecd8" opacity="0.76"/><circle cx="149.6" cy="111.9" r=".4" fill="#f4ecd8" opacity="0.60"/><circle cx="142.1" cy="111.4" r=".4" fill="#f4ecd8" opacity="0.87"/><circle cx="138.6" cy="107.7" r=".4" fill="#f4ecd8" opacity="0.55"/><circle cx="144.2" cy="114.9" r=".4" fill="#f4ecd8" opacity="0.67"/><circle cx="141.5" cy="117.0" r=".4" fill="#f4ecd8" opacity="0.54"/><circle cx="151.8" cy="103.7" r=".4" fill="#f4ecd8" opacity="0.58"/><circle cx="133.1" cy="109.2" r=".4" fill="#f4ecd8" opacity="0.56"/><circle cx="127.9" cy="100.2" r=".4" fill="#f4ecd8" opacity="0.87"/><circle cx="134.6" cy="114.9" r=".4" fill="#f4ecd8" opacity="0.70"/><circle cx="146.2" cy="110.3" r=".4" fill="#f4ecd8" opacity="0.40"/><circle cx="146.4" cy="109.8" r=".4" fill="#f4ecd8" opacity="0.79"/><circle cx="139.5" cy="109.4" r=".4" fill="#f4ecd8" opacity="0.73"/><circle cx="149.5" cy="113.6" r=".4" fill="#f4ecd8" opacity="0.52"/><circle cx="136.3" cy="108.4" r=".4" fill="#f4ecd8" opacity="0.40"/><circle cx="141.4" cy="114.8" r=".4" fill="#f4ecd8" opacity="0.46"/><circle cx="142.4" cy="98.5" r=".4" fill="#f4ecd8" opacity="0.59"/><circle cx="134.7" cy="112.8" r=".4" fill="#f4ecd8" opacity="0.63"/><circle cx="142.2" cy="111.6" r=".4" fill="#f4ecd8" opacity="0.43"/><circle cx="147.8" cy="108.0" r=".4" fill="#f4ecd8" opacity="0.53"/><circle cx="140.8" cy="114.1" r=".4" fill="#f4ecd8" opacity="0.69"/><circle cx="142.9" cy="118.2" r=".4" fill="#f4ecd8" opacity="0.48"/><circle cx="137.1" cy="105.0" r=".4" fill="#f4ecd8" opacity="0.66"/><circle cx="138.9" cy="109.7" r=".4" fill="#f4ecd8" opacity="0.51"/><circle cx="136.1" cy="110.4" r=".4" fill="#f4ecd8" opacity="0.66"/><circle cx="151.3" cy="106.1" r=".4" fill="#f4ecd8" opacity="0.68"/><circle cx="141.3" cy="109.0" r=".4" fill="#f4ecd8" opacity="0.88"/><circle cx="142.0" cy="109.8" r=".4" fill="#f4ecd8" opacity="0.68"/><circle cx="144.7" cy="117.3" r=".4" fill="#f4ecd8" opacity="0.87"/><circle cx="142.6" cy="108.0" r=".4" fill="#f4ecd8" opacity="0.56"/><circle cx="138.3" cy="116.5" r=".4" fill="#f4ecd8" opacity="0.89"/><circle cx="139.6" cy="125.0" r=".4" fill="#f4ecd8" opacity="0.78"/><circle cx="142.4" cy="111.4" r=".4" fill="#f4ecd8" opacity="0.51"/><circle cx="147.2" cy="108.6" r=".4" fill="#f4ecd8" opacity="0.83"/><circle cx="142.4" cy="111.4" r=".4" fill="#f4ecd8" opacity="0.50"/><circle cx="138.6" cy="109.0" r=".4" fill="#f4ecd8" opacity="0.85"/><circle cx="135.1" cy="112.1" r=".4" fill="#f4ecd8" opacity="0.88"/><circle cx="146.9" cy="105.6" r=".4" fill="#f4ecd8" opacity="0.80"/><circle cx="141.6" cy="111.6" r=".4" fill="#f4ecd8" opacity="0.68"/><circle cx="138.1" cy="112.9" r=".4" fill="#f4ecd8" opacity="0.46"/><circle cx="140.7" cy="113.6" r=".4" fill="#f4ecd8" opacity="0.41"/><circle cx="142.5" cy="109.2" r=".4" fill="#f4ecd8" opacity="0.43"/><circle cx="149.4" cy="106.9" r=".4" fill="#f4ecd8" opacity="0.80"/><circle cx="140.1" cy="113.7" r=".4" fill="#f4ecd8" opacity="0.68"/><circle cx="147.5" cy="110.7" r=".4" fill="#f4ecd8" opacity="0.62"/><circle cx="145.0" cy="112.4" r=".4" fill="#f4ecd8" opacity="0.89"/><circle cx="142.7" cy="109.7" r=".4" fill="#f4ecd8" opacity="0.54"/><circle cx="141.8" cy="115.9" r=".4" fill="#f4ecd8" opacity="0.87"/><circle cx="141.8" cy="111.6" r=".4" fill="#f4ecd8" opacity="0.75"/><circle cx="141.7" cy="111.0" r=".4" fill="#f4ecd8" opacity="0.53"/><circle cx="143.0" cy="107.3" r=".4" fill="#f4ecd8" opacity="0.48"/><circle cx="141.8" cy="109.4" r=".4" fill="#f4ecd8" opacity="0.48"/><circle cx="137.6" cy="116.1" r=".4" fill="#f4ecd8" opacity="0.57"/><circle cx="141.0" cy="107.7" r=".4" fill="#f4ecd8" opacity="0.45"/><circle cx="141.7" cy="112.1" r=".4" fill="#f4ecd8" opacity="0.68"/><circle cx="143.2" cy="109.7" r=".4" fill="#f4ecd8" opacity="0.65"/><circle cx="141.6" cy="110.2" r=".4" fill="#f4ecd8" opacity="0.47"/><circle cx="139.3" cy="111.7" r=".4" fill="#f4ecd8" opacity="0.66"/><circle cx="140.4" cy="108.4" r=".4" fill="#f4ecd8" opacity="0.61"/><circle cx="144.9" cy="103.9" r=".4" fill="#f4ecd8" opacity="0.63"/><circle cx="140.7" cy="106.4" r=".4" fill="#f4ecd8" opacity="0.78"/><circle cx="149.7" cy="112.7" r=".4" fill="#f4ecd8" opacity="0.73"/><circle cx="147.1" cy="99.5" r=".4" fill="#f4ecd8" opacity="0.64"/><circle cx="139.6" cy="113.3" r=".4" fill="#f4ecd8" opacity="0.87"/><circle cx="138.7" cy="116.5" r=".4" fill="#f4ecd8" opacity="0.57"/><circle cx="172.4" cy="10.4" r="2.55" fill="#e8e0d0" opacity=".5" filter="url(#g4b)"/><circle cx="172.4" cy="10.4" r="1.0499999999999998" fill="#fff"/><path d="M169.1 10.4 L175.7 10.4 M172.4 7.1 L172.4 13.7" stroke="#fff" stroke-width=".35" opacity=".45"/><circle cx="173.9" cy="22.2" r="2.55" fill="#e8e0d0" opacity=".5" filter="url(#g4b)"/><circle cx="173.9" cy="22.2" r="1.0499999999999998" fill="#fff"/><path d="M170.6 22.2 L177.2 22.2 M173.9 18.9 L173.9 25.5" stroke="#fff" stroke-width=".35" opacity=".45"/><circle cx="152.4" cy="31.1" r="2.55" fill="#e8e0d0" opacity=".5" filter="url(#g4b)"/><circle cx="152.4" cy="31.1" r="1.0499999999999998" fill="#fff"/><path d="M149.1 31.1 L155.7 31.1 M152.4 27.8 L152.4 34.4" stroke="#fff" stroke-width=".35" opacity=".45"/><circle cx="13.6" cy="123.6" r="2.72" fill="#e8e0d0" opacity=".5" filter="url(#g4b)"/><circle cx="13.6" cy="123.6" r="1.1199999999999999" fill="#fff"/><path d="M10.1 123.6 L17.1 123.6 M13.6 120.1 L13.6 127.1" stroke="#fff" stroke-width=".35" opacity=".45"/><circle cx="14.3" cy="108.8" r="2.04" fill="#e8e0d0" opacity=".5" filter="url(#g4b)"/><circle cx="14.3" cy="108.8" r="0.84" fill="#fff"/><path d="M11.7 108.8 L16.9 108.8 M14.3 106.2 L14.3 111.4" stroke="#fff" stroke-width=".35" opacity=".45"/><circle cx="86.9" cy="87" r="1.87" fill="#e8e0d0" opacity=".5" filter="url(#g4b)"/><circle cx="86.9" cy="87" r="0.77" fill="#fff"/><path d="M84.5 87 L89.3 87 M86.9 84.6 L86.9 89.4" stroke="#fff" stroke-width=".35" opacity=".45"/><circle cx="75.8" cy="1.5" r="1.87" fill="#e8e0d0" opacity=".5" filter="url(#g4b)"/><circle cx="75.8" cy="1.5" r="0.77" fill="#fff"/><path d="M73.4 1.5 L78.2 1.5 M75.8 -0.9 L75.8 3.9" stroke="#fff" stroke-width=".35" opacity=".45"/><circle cx="171.7" cy="146.9" r="2.04" fill="#e8e0d0" opacity=".5" filter="url(#g4b)"/><circle cx="171.7" cy="146.9" r="0.84" fill="#fff"/><path d="M169.1 146.9 L174.3 146.9 M171.7 144.3 L171.7 149.5" stroke="#fff" stroke-width=".35" opacity=".45"/><circle cx="160" cy="41" r="1.53" fill="#e8e0d0" opacity=".5" filter="url(#g4b)"/><circle cx="160" cy="41" r="0.63" fill="#fff"/><path d="M158.0 41 L162.0 41 M160 39.0 L160 43.0" stroke="#fff" stroke-width=".35" opacity=".45"/><circle cx="39" cy="142" r="1.36" fill="#e8e0d0" opacity=".5" filter="url(#g4b)"/><circle cx="39" cy="142" r="0.5599999999999999" fill="#fff"/><path d="M37.2 142 L40.8 142 M39 140.2 L39 143.8" stroke="#fff" stroke-width=".35" opacity=".45"/><rect x="1" y="144" width="62" height="1.2" fill="#b0b0b0" opacity=".22"/></svg></div>
<div class="cell" style="left:213px;top:329px;" id="c5"><svg width="200" height="150" viewBox="0 0 200 150"><defs><filter id="g5b1" x="-50%" y="-50%" width="200%" height="200%"><feGaussianBlur stdDeviation="1"/></filter><filter id="g5b2" x="-50%" y="-50%" width="200%" height="200%"><feGaussianBlur stdDeviation="2.5"/></filter><filter id="g5b4" x="-50%" y="-50%" width="200%" height="200%"><feGaussianBlur stdDeviation="5"/></filter><filter id="g5b0"><feGaussianBlur stdDeviation=".5"/></filter><radialGradient id="g5a"><stop offset="0" stop-color="#f0a8c0" stop-opacity=".95"/><stop offset=".4" stop-color="#c080b0" stop-opacity=".85"/><stop offset=".75" stop-color="#6870b8" stop-opacity=".7"/><stop offset="1" stop-color="#4850a0" stop-opacity="0"/></radialGradient><radialGradient id="g5c"><stop offset="0" stop-color="#fffaf0"/><stop offset=".25" stop-color="#ffd8b0" stop-opacity=".95"/><stop offset=".6" stop-color="#e09870" stop-opacity=".5"/><stop offset="1" stop-color="#c07060" stop-opacity="0"/></radialGradient><filter id="g5n" x="0" y="0" width="100%" height="100%"><feTurbulence type="fractalNoise" baseFrequency="0.16" numOctaves="2" seed="5"/><feColorMatrix type="matrix" values="0 0 0 0 1  0 0 0 0 0.34  0 0 0 0 0.28  0 0 0 3.8 -1.65"/></filter><filter id="g5p" x="0" y="0" width="100%" height="100%"><feTurbulence type="fractalNoise" baseFrequency="0.2" numOctaves="2" seed="15"/><feColorMatrix type="matrix" values="0 0 0 0 1  0 0 0 0 0.62  0 0 0 0 0.78  0 0 0 3.6 -1.9"/></filter><mask id="g5m"><path d="M110 34 C122 24 146 26 150 44 C154 58 152 66 162 70 C178 72 188 84 182 96 C170 104 152 98 140 102 C126 106 110 104 106 96 C114 86 126 80 128 70 C120 62 110 56 110 34 Z" fill="#fff" filter="url(#g5b2)"/></mask><mask id="g5g"><g transform="rotate(27 57 88)"><ellipse cx="57" cy="88" rx="46" ry="18" fill="#fff" filter="url(#g5b2)"/></g></mask></defs><rect width="200" height="150" fill="#17111a"/><ellipse cx="118" cy="80" rx="84" ry="62" fill="#2a2038" opacity=".55" filter="url(#g5b4)"/><path d="M18.1 142.6h0" stroke="#e08848" stroke-width="0.8" stroke-linecap="round" opacity="0.8" fill="none"/><path d="M149.4 45.3h0M150.9 66.8h0" stroke="#ffffff" stroke-width="1.0" stroke-linecap="round" opacity="0.8" fill="none"/><path d="M108.1 58.2h0M129.7 57.7h0" stroke="#ffffff" stroke-width="1.2" stroke-linecap="round" opacity="0.8" fill="none"/><path d="M197.9 115.9h0M4.3 67.3h0M58.6 18.3h0M85.9 135.9h0" stroke="#f0a060" stroke-width="0.8" stroke-linecap="round" opacity="0.6" fill="none"/><path d="M102.6 2.2h0M61.2 120.9h0M48.0 41.6h0" stroke="#ffffff" stroke-width="1.2" stroke-linecap="round" opacity="0.6" fill="none"/><path d="M46.3 75.3h0M142.2 33.2h0M85.7 122.7h0M55.4 133.0h0M46.7 65.8h0M179.7 75.9h0M38.7 39.1h0M2.8 33.7h0" stroke="#f0a060" stroke-width="1.6" stroke-linecap="round" opacity="0.6" fill="none"/><path d="M82.1 45.8h0M191.0 111.1h0" stroke="#ffffff" stroke-width="1.6" stroke-linecap="round" opacity="0.4" fill="none"/><path d="M62.1 54.3h0" stroke="#f0a060" stroke-width="1.0" stroke-linecap="round" opacity="0.6" fill="none"/><path d="M44.2 83.1h0" stroke="#f0a060" stroke-width="1.2" stroke-linecap="round" opacity="0.6" fill="none"/><path d="M165.5 107.8h0M84.5 42.3h0M21.5 119.7h0" stroke="#e08848" stroke-width="1.6" stroke-linecap="round" opacity="0.8" fill="none"/><path d="M79.9 98.6h0" stroke="#d07038" stroke-width="0.8" stroke-linecap="round" opacity="0.4" fill="none"/><path d="M59.7 40.5h0M103.5 99.8h0M21.5 74.9h0" stroke="#ffffff" stroke-width="0.8" stroke-linecap="round" opacity="0.6" fill="none"/><path d="M99.4 10.3h0M170.5 99.0h0M19.9 87.9h0M42.5 117.0h0M14.0 107.0h0" stroke="#d07038" stroke-width="1.0" stroke-linecap="round" opacity="0.6" fill="none"/><path d="M44.9 83.9h0M156.8 3.9h0M147.0 107.9h0M117.4 39.6h0" stroke="#d07038" stroke-width="1.2" stroke-linecap="round" opacity="0.4" fill="none"/><path d="M11.4 35.7h0M157.5 130.6h0" stroke="#ffffff" stroke-width="1.4" stroke-linecap="round" opacity="1.0" fill="none"/><path d="M64.6 53.0h0M105.5 108.4h0" stroke="#d07038" stroke-width="1.6" stroke-linecap="round" opacity="0.4" fill="none"/><path d="M142.5 30.0h0M117.9 70.9h0M59.4 51.4h0M132.5 25.5h0M27.9 44.4h0M165.9 143.9h0" stroke="#c8c8e8" stroke-width="1.0" stroke-linecap="round" opacity="0.6" fill="none"/><path d="M81.1 96.9h0M116.1 131.3h0" stroke="#f0a060" stroke-width="1.0" stroke-linecap="round" opacity="1.0" fill="none"/><path d="M36.8 31.3h0M110.6 53.5h0" stroke="#c8c8e8" stroke-width="1.8" stroke-linecap="round" opacity="0.6" fill="none"/><path d="M129.4 1.5h0M95.6 115.4h0" stroke="#c8c8e8" stroke-width="1.8" stroke-linecap="round" opacity="0.8" fill="none"/><path d="M101.0 27.3h0M46.4 64.2h0M103.6 72.3h0" stroke="#e08848" stroke-width="1.0" stroke-linecap="round" opacity="0.8" fill="none"/><path d="M85.4 59.1h0M20.9 133.7h0M46.8 110.2h0M98.5 134.3h0" stroke="#e08848" stroke-width="1.6" stroke-linecap="round" opacity="0.6" fill="none"/><path d="M167.6 20.5h0M160.4 111.5h0" stroke="#c8c8e8" stroke-width="0.8" stroke-linecap="round" opacity="0.4" fill="none"/><path d="M145.2 98.2h0M12.5 82.1h0M127.6 27.3h0" stroke="#d07038" stroke-width="1.6" stroke-linecap="round" opacity="0.6" fill="none"/><path d="M9.8 96.8h0M85.4 51.6h0" stroke="#c8c8e8" stroke-width="1.4" stroke-linecap="round" opacity="0.4" fill="none"/><path d="M52.1 20.4h0M127.6 25.5h0M72.9 10.8h0" stroke="#d07038" stroke-width="1.4" stroke-linecap="round" opacity="0.8" fill="none"/><path d="M107.9 100.9h0M35.4 67.0h0M197.5 71.4h0M23.7 92.5h0" stroke="#e08848" stroke-width="1.2" stroke-linecap="round" opacity="0.6" fill="none"/><path d="M79.5 82.7h0M153.4 63.5h0M48.9 12.4h0" stroke="#c8c8e8" stroke-width="1.0" stroke-linecap="round" opacity="0.4" fill="none"/><path d="M21.2 89.5h0" stroke="#d07038" stroke-width="1.4" stroke-linecap="round" opacity="1.0" fill="none"/><path d="M14.4 137.2h0" stroke="#e08848" stroke-width="1.6" stroke-linecap="round" opacity="1.0" fill="none"/><path d="M96.2 106.5h0M164.7 26.7h0" stroke="#ffffff" stroke-width="1.2" stroke-linecap="round" opacity="0.4" fill="none"/><path d="M163.7 148.8h0M145.7 128.6h0M187.8 59.5h0" stroke="#d07038" stroke-width="0.8" stroke-linecap="round" opacity="0.6" fill="none"/><path d="M42.7 137.2h0" stroke="#ffffff" stroke-width="1.8" stroke-linecap="round" opacity="1.0" fill="none"/><path d="M105.9 50.0h0M103.7 80.8h0M100.4 23.6h0M82.9 12.5h0" stroke="#c8c8e8" stroke-width="1.4" stroke-linecap="round" opacity="0.8" fill="none"/><path d="M158.4 127.9h0M123.8 32.9h0M143.3 123.3h0M110.3 63.8h0M182.4 61.6h0" stroke="#d07038" stroke-width="1.4" stroke-linecap="round" opacity="0.6" fill="none"/><path d="M170.9 34.6h0" stroke="#d07038" stroke-width="1.4" stroke-linecap="round" opacity="0.4" fill="none"/><path d="M1.5 57.3h0" stroke="#ffffff" stroke-width="1.4" stroke-linecap="round" opacity="0.4" fill="none"/><path d="M40.1 70.9h0" stroke="#e08848" stroke-width="1.8" stroke-linecap="round" opacity="0.6" fill="none"/><path d="M49.8 146.0h0" stroke="#e08848" stroke-width="1.0" stroke-linecap="round" opacity="1.0" fill="none"/><path d="M80.1 13.4h0M158.9 143.0h0M114.8 117.0h0M189.3 145.9h0" stroke="#f0a060" stroke-width="1.4" stroke-linecap="round" opacity="0.8" fill="none"/><path d="M57.3 143.6h0" stroke="#d07038" stroke-width="1.0" stroke-linecap="round" opacity="0.4" fill="none"/><path d="M106.2 121.3h0" stroke="#ffffff" stroke-width="1.6" stroke-linecap="round" opacity="0.6" fill="none"/><path d="M185.5 44.8h0M97.5 56.7h0" stroke="#d07038" stroke-width="1.8" stroke-linecap="round" opacity="0.8" fill="none"/><path d="M13.4 82.2h0M166.2 38.6h0M86.5 91.1h0" stroke="#f0a060" stroke-width="0.8" stroke-linecap="round" opacity="0.8" fill="none"/><path d="M82.1 37.6h0M109.7 29.7h0" stroke="#d07038" stroke-width="1.6" stroke-linecap="round" opacity="0.8" fill="none"/><path d="M64.7 88.8h0M167.4 134.9h0" stroke="#d07038" stroke-width="1.2" stroke-linecap="round" opacity="0.8" fill="none"/><path d="M160.8 59.7h0M30.9 41.5h0M155.2 6.4h0M21.4 125.4h0M164.8 76.5h0M10.2 74.5h0" stroke="#c8c8e8" stroke-width="1.0" stroke-linecap="round" opacity="0.8" fill="none"/><path d="M145.6 47.3h0M176.2 105.2h0M76.8 13.9h0" stroke="#ffffff" stroke-width="1.4" stroke-linecap="round" opacity="0.6" fill="none"/><path d="M8.1 126.7h0M46.3 60.2h0M9.0 121.4h0M62.8 59.0h0" stroke="#c8c8e8" stroke-width="1.2" stroke-linecap="round" opacity="0.6" fill="none"/><path d="M10.0 34.9h0M42.6 103.9h0" stroke="#c8c8e8" stroke-width="1.2" stroke-linecap="round" opacity="1.0" fill="none"/><path d="M194.2 63.7h0M128.4 77.7h0" stroke="#d07038" stroke-width="0.8" stroke-linecap="round" opacity="0.8" fill="none"/><path d="M138.2 16.3h0" stroke="#e08848" stroke-width="1.0" stroke-linecap="round" opacity="0.6" fill="none"/><path d="M10.5 145.3h0M72.4 148.7h0M11.5 20.6h0" stroke="#f0a060" stroke-width="1.8" stroke-linecap="round" opacity="0.8" fill="none"/><path d="M8.6 46.4h0" stroke="#f0a060" stroke-width="1.2" stroke-linecap="round" opacity="0.8" fill="none"/><path d="M62.7 68.5h0" stroke="#f0a060" stroke-width="1.4" stroke-linecap="round" opacity="0.4" fill="none"/><path d="M8.5 113.0h0" stroke="#c8c8e8" stroke-width="1.8" stroke-linecap="round" opacity="0.4" fill="none"/><path d="M111.9 34.4h0M142.4 56.1h0" stroke="#f0a060" stroke-width="1.4" stroke-linecap="round" opacity="0.6" fill="none"/><path d="M137.3 12.6h0" stroke="#ffffff" stroke-width="1.2" stroke-linecap="round" opacity="1.0" fill="none"/><path d="M68.9 117.6h0M30.8 96.8h0M27.8 8.7h0" stroke="#ffffff" stroke-width="1.0" stroke-linecap="round" opacity="0.6" fill="none"/><path d="M143.5 141.5h0M24.0 61.9h0M168.4 31.9h0" stroke="#f0a060" stroke-width="1.6" stroke-linecap="round" opacity="0.8" fill="none"/><path d="M75.9 34.5h0M176.0 58.2h0" stroke="#f0a060" stroke-width="1.0" stroke-linecap="round" opacity="0.8" fill="none"/><path d="M127.1 24.4h0M98.9 11.4h0" stroke="#d07038" stroke-width="1.2" stroke-linecap="round" opacity="0.6" fill="none"/><path d="M92.7 8.2h0M172.1 14.2h0" stroke="#e08848" stroke-width="1.4" stroke-linecap="round" opacity="0.6" fill="none"/><path d="M63.8 56.2h0M41.3 72.4h0" stroke="#ffffff" stroke-width="0.8" stroke-linecap="round" opacity="0.8" fill="none"/><path d="M79.2 107.4h0M101.5 68.8h0" stroke="#e08848" stroke-width="1.2" stroke-linecap="round" opacity="0.4" fill="none"/><path d="M162.1 137.2h0M185.1 102.6h0" stroke="#c8c8e8" stroke-width="0.8" stroke-linecap="round" opacity="1.0" fill="none"/><path d="M40.1 50.7h0M132.7 30.0h0" stroke="#c8c8e8" stroke-width="1.2" stroke-linecap="round" opacity="0.8" fill="none"/><path d="M147.4 130.5h0M63.5 56.6h0M187.8 40.5h0" stroke="#c8c8e8" stroke-width="1.6" stroke-linecap="round" opacity="1.0" fill="none"/><path d="M101.0 61.2h0M10.6 119.3h0" stroke="#d07038" stroke-width="1.8" stroke-linecap="round" opacity="0.6" fill="none"/><path d="M187.0 124.9h0" stroke="#e08848" stroke-width="1.4" stroke-linecap="round" opacity="1.0" fill="none"/><path d="M24.9 41.7h0M10.5 52.8h0" stroke="#f0a060" stroke-width="1.8" stroke-linecap="round" opacity="0.4" fill="none"/><path d="M196.8 35.6h0M132.6 29.1h0M8.4 120.6h0M131.2 111.9h0" stroke="#f0a060" stroke-width="1.0" stroke-linecap="round" opacity="0.4" fill="none"/><path d="M185.2 107.6h0" stroke="#ffffff" stroke-width="1.8" stroke-linecap="round" opacity="0.4" fill="none"/><path d="M114.5 119.3h0" stroke="#c8c8e8" stroke-width="1.4" stroke-linecap="round" opacity="1.0" fill="none"/><path d="M1.9 113.6h0M161.2 72.1h0" stroke="#ffffff" stroke-width="1.8" stroke-linecap="round" opacity="0.6" fill="none"/><path d="M180.5 36.3h0" stroke="#ffffff" stroke-width="1.0" stroke-linecap="round" opacity="0.4" fill="none"/><path d="M145.9 112.4h0M157.8 33.3h0M169.9 14.6h0" stroke="#d07038" stroke-width="0.8" stroke-linecap="round" opacity="1.0" fill="none"/><path d="M0.4 69.6h0" stroke="#e08848" stroke-width="0.8" stroke-linecap="round" opacity="0.4" fill="none"/><path d="M123.6 131.0h0" stroke="#e08848" stroke-width="0.8" stroke-linecap="round" opacity="0.6" fill="none"/><path d="M112.4 70.1h0" stroke="#e08848" stroke-width="1.4" stroke-linecap="round" opacity="0.4" fill="none"/><path d="M176.5 56.6h0" stroke="#c8c8e8" stroke-width="1.4" stroke-linecap="round" opacity="0.6" fill="none"/><path d="M195.7 103.3h0" stroke="#c8c8e8" stroke-width="1.6" stroke-linecap="round" opacity="0.6" fill="none"/><path d="M179.4 137.6h0" stroke="#d07038" stroke-width="1.0" stroke-linecap="round" opacity="0.8" fill="none"/><path d="M161.2 2.6h0" stroke="#d07038" stroke-width="1.0" stroke-linecap="round" opacity="1.0" fill="none"/><path d="M36 5 C44 18 56 30 72 40" stroke="#4858a0" stroke-width="6" fill="none" opacity=".5" stroke-linecap="round" filter="url(#g5b2)"/><path d="M36 6 L44 16" stroke="#e07848" stroke-width="2" opacity=".7" filter="url(#g5b1)"/><g transform="rotate(27 57 88)"><ellipse cx="57" cy="88" rx="56" ry="26" fill="#4850a0" opacity=".6" filter="url(#g5b4)"/><ellipse cx="57" cy="88" rx="50" ry="21" fill="url(#g5a)"/><ellipse cx="78" cy="92" rx="24" ry="11" fill="#90a0f0" opacity=".5" filter="url(#g5b2)"/><ellipse cx="52" cy="87" rx="26" ry="9" fill="#ffc0d8" opacity=".35" filter="url(#g5b2)"/></g><g mask="url(#g5g)"><rect width="200" height="150" filter="url(#g5p)" opacity=".8"/></g><ellipse cx="128" cy="44" rx="26" ry="33" fill="#3c3e80" opacity=".6" filter="url(#g5b2)" transform="rotate(-18 128 44)"/><ellipse cx="128" cy="42" rx="23" ry="30" fill="none" stroke="#6c80d0" stroke-width="3.5" opacity=".6" filter="url(#g5b1)" transform="rotate(-18 128 44)"/><path d="M132 58 C146 68 162 68 180 80 C184 92 172 100 158 96 C146 92 134 100 118 98 C124 88 134 80 132 58 Z" fill="#e04838" opacity=".55" filter="url(#g5b2)"/><path d="M112 30 C124 26 140 34 146 50 C140 58 130 54 124 56 C114 52 108 42 112 30 Z" fill="#f08048" opacity=".5" filter="url(#g5b1)"/><g mask="url(#g5m)"><rect width="200" height="150" filter="url(#g5n)"/><rect width="200" height="150" filter="url(#g5p)" opacity=".5"/></g><path d="M108 100 C104 112 112 128 124 134 C134 140 148 136 152 124" stroke="#6870c8" stroke-width="3" fill="none" opacity=".6" filter="url(#g5b1)"/><path d="M150 120 C158 116 164 108 166 100" stroke="#5860b0" stroke-width="3" fill="none" opacity=".45" filter="url(#g5b1)"/><path d="M106 96 C100 108 104 118 112 126" stroke="#f07050" stroke-width="2.5" fill="none" opacity=".75" filter="url(#g5b1)"/><circle cx="129" cy="44.5" r="11" fill="url(#g5c)"/><circle cx="129" cy="109" r="13" fill="url(#g5c)"/><circle cx="137" cy="126" r="14" fill="url(#g5c)"/><circle cx="144.3" cy="6.7" r="2.6" fill="#b8c8ff" opacity=".5" filter="url(#g5b1)"/><circle cx="144.3" cy="6.7" r="0.9099999999999999" fill="#fff"/><circle cx="184.7" cy="43.7" r="3.2" fill="#b8c8ff" opacity=".5" filter="url(#g5b1)"/><circle cx="184.7" cy="43.7" r="1.1199999999999999" fill="#fff"/><circle cx="70.4" cy="135.8" r="3.0" fill="#b8c8ff" opacity=".5" filter="url(#g5b1)"/><circle cx="70.4" cy="135.8" r="1.0499999999999998" fill="#fff"/><circle cx="192.4" cy="110.3" r="2.4" fill="#b8c8ff" opacity=".5" filter="url(#g5b1)"/><circle cx="192.4" cy="110.3" r="0.84" fill="#fff"/><circle cx="11.5" cy="62.1" r="2.2" fill="#b8c8ff" opacity=".5" filter="url(#g5b1)"/><circle cx="11.5" cy="62.1" r="0.77" fill="#fff"/><circle cx="160" cy="59" r="2.0" fill="#b8c8ff" opacity=".5" filter="url(#g5b1)"/><circle cx="160" cy="59" r="0.7" fill="#fff"/><circle cx="177" cy="14" r="2.4" fill="#b8c8ff" opacity=".5" filter="url(#g5b1)"/><circle cx="177" cy="14" r="0.84" fill="#fff"/><circle cx="74" cy="62" r="1.8" fill="#b8c8ff" opacity=".5" filter="url(#g5b1)"/><circle cx="74" cy="62" r="0.63" fill="#fff"/><circle cx="194" cy="92" r="1.8" fill="#b8c8ff" opacity=".5" filter="url(#g5b1)"/><circle cx="194" cy="92" r="0.63" fill="#fff"/><path d="M199 22 L176 6 M199 22 L178 38" stroke="#c8c8d8" stroke-width=".5" opacity=".7"/></svg></div>
<div class="cell" style="left:416px;top:329px;" id="c6"><svg width="200" height="150" viewBox="0 0 200 150"><defs><linearGradient id="g6s" x1="0" y1="0" x2="0" y2="1"><stop offset="0" stop-color="#42419a"/><stop offset=".3" stop-color="#344ca2"/><stop offset=".62" stop-color="#2352a2"/><stop offset=".8" stop-color="#1f509a"/></linearGradient><radialGradient id="g6m" cx=".45" cy=".45" r=".6"><stop offset="0" stop-color="#ffe88c"/><stop offset=".6" stop-color="#fcd460"/><stop offset=".88" stop-color="#f6b840"/><stop offset="1" stop-color="#ea9a30"/></radialGradient><linearGradient id="g6t" x1="0" y1="0" x2="0" y2="1"><stop offset="0" stop-color="#1b3a33"/><stop offset=".5" stop-color="#17322f"/><stop offset="1" stop-color="#10242a"/></linearGradient><linearGradient id="g6d" x1="0" y1="0" x2="1" y2="0"><stop offset="0" stop-color="#0a1620" stop-opacity=".35"/><stop offset=".15" stop-color="#0a1620" stop-opacity="0"/><stop offset=".7" stop-color="#0a1620" stop-opacity="0"/><stop offset="1" stop-color="#081420" stop-opacity=".55"/></linearGradient><filter id="g6b"><feGaussianBlur stdDeviation="1.2"/></filter><filter id="g6b0"><feGaussianBlur stdDeviation=".5"/></filter><filter id="g6n" x="0" y="0" width="100%" height="100%"><feTurbulence type="fractalNoise" baseFrequency="0.16" numOctaves="2" seed="8"/><feColorMatrix type="matrix" values="0 0 0 0 0.16  0 0 0 0 0.32  0 0 0 0 0.27  0 0 0 2.4 -1.15"/></filter></defs><rect width="200" height="150" fill="url(#g6s)"/><path d="M18 6 C40 2 70 8 94 6" stroke="#9a9ad8" stroke-width="2.2" fill="none" opacity="0.28" stroke-linecap="round" filter="url(#g6b0)"/><path d="M10 28 C20 24 34 26 40 28" stroke="#9a9ad8" stroke-width="2" fill="none" opacity="0.2" stroke-linecap="round" filter="url(#g6b0)"/><path d="M4 38 C40 34 70 36 100 33 C120 32 140 34 150 33" stroke="#9a9ad8" stroke-width="1.2" fill="none" opacity="0.22" stroke-linecap="round" filter="url(#g6b0)"/><path d="M126 18 C134 15 142 19 150 20" stroke="#9a9ad8" stroke-width="2" fill="none" opacity="0.25" stroke-linecap="round" filter="url(#g6b0)"/><path d="M40 14 C50 16 60 14 70 17" stroke="#9a9ad8" stroke-width="1.5" fill="none" opacity="0.15" stroke-linecap="round" filter="url(#g6b0)"/><path d="M170 32 C180 30 188 32 196 31" stroke="#9a9ad8" stroke-width="1.5" fill="none" opacity="0.15" stroke-linecap="round" filter="url(#g6b0)"/><path d="M138 111 C150 108 170 110 184 107 C190 106 196 105 200 104 L200 124 L138 124 Z" fill="#25477c"/><ellipse cx="168" cy="61.6" rx="28.4" ry="21.6" fill="#e08828" filter="url(#g6b0)"/><ellipse cx="168" cy="61.6" rx="27.6" ry="20.8" fill="url(#g6m)"/><ellipse cx="158" cy="52" rx="8" ry="5" fill="#ffe890" opacity="0.5" filter="url(#g6b)"/><ellipse cx="176" cy="66" rx="9" ry="6" fill="#ffe890" opacity="0.45" filter="url(#g6b)"/><ellipse cx="164" cy="70" rx="7" ry="4" fill="#ffe890" opacity="0.4" filter="url(#g6b)"/><ellipse cx="182" cy="54" rx="5" ry="4" fill="#ffe890" opacity="0.35" filter="url(#g6b)"/><ellipse cx="150" cy="64" rx="4" ry="5" fill="#ffe890" opacity="0.35" filter="url(#g6b)"/><ellipse cx="170" cy="56" rx="6" ry="4" fill="#d89020" opacity="0.25" filter="url(#g6b)"/><ellipse cx="158" cy="62" rx="5" ry="3" fill="#d89020" opacity="0.22" filter="url(#g6b)"/><ellipse cx="178" cy="74" rx="6" ry="3" fill="#d89020" opacity="0.2" filter="url(#g6b)"/><ellipse cx="161" cy="36" rx="7" ry="1" fill="#e89078" opacity=".85"/><ellipse cx="166.5" cy="31.6" rx="3.4" ry=".9" fill="#78d8a0" opacity=".85"/><ellipse cx="182" cy="38.6" rx="5.5" ry="1.2" fill="#f09858" opacity=".9"/><path d="M0 93 L14 93 L14 95 L22 95 L22 92 L44 92 L44 97 L50 97 L50 96 L72 96 L72 100 L80 100 L140 102 L140 134 L0 134 Z" fill="#5e5253"/><path d="M0 93 L14 93 L14 95 L22 95 L22 92 L44 92 L44 125 L0 125 Z" fill="#4c4248" opacity=".55"/><path d="M81 69 L100 69 L101 84 L106 88 L108 108 L76 108 L79 92 Z" fill="#6c5c56"/><path d="M96 69 L100 69 L101 84 L106 88 L108 108 L98 108 Z" fill="#9a8878" opacity=".5"/><path d="M90.3 55.5 L100.8 69.2 L79.8 69.2 Z" fill="#2a2942"/><rect x="82" y="69.2" width="17" height="1.6" fill="#2a2430"/><path d="M100 110 L112 99.5 L130 99.5 L141 110 Z" fill="#2c2c44"/><rect x="105" y="110" width="35" height="10" fill="#8a7464"/><rect x="112" y="113" width="4" height="2" fill="#e88048"/><rect x="120" y="113" width="4" height="2" fill="#e88048"/><path d="M140 116 L164 116 L164 119 L170 121 L200 123 L200 132 L140 132 Z" fill="#5f5450"/><path d="M194 108 L199.5 118 L188.5 118 Z" fill="#3a3648"/><rect x="190" y="118" width="8" height="8" fill="#6d5c54"/><g><circle cx="-3.0" cy="127.2" r="3.4" fill="#14302f"/><circle cx="0.1" cy="127.6" r="4.5" fill="#14302f"/><circle cx="4.8" cy="129.9" r="4.9" fill="#14302f"/><circle cx="9.6" cy="128.6" r="4.7" fill="#14302f"/><circle cx="12.4" cy="127.8" r="5.6" fill="#14302f"/><circle cx="15.8" cy="117.6" r="3.7" fill="#1b3a33"/><circle cx="19.5" cy="117.8" r="4.7" fill="#1b3a33"/><circle cx="24.1" cy="118.6" r="6.1" fill="#1b3a33"/><circle cx="28.8" cy="119.1" r="5.3" fill="#1b3a33"/><circle cx="33.7" cy="121.1" r="3.8" fill="#1b3a33"/><circle cx="37.4" cy="121.3" r="4.1" fill="#1b3a33"/><circle cx="40.4" cy="125.8" r="6.0" fill="#1b3a33"/><circle cx="45.1" cy="123.2" r="5.6" fill="#1b3a33"/><circle cx="48.4" cy="119.5" r="4.4" fill="#1b3a33"/><circle cx="51.2" cy="121.3" r="4.6" fill="#1b3a33"/><circle cx="55.3" cy="120.3" r="4.9" fill="#1b3a33"/><circle cx="59.9" cy="121.4" r="4.5" fill="#1b3a33"/><circle cx="63.4" cy="123.0" r="4.3" fill="#1b3a33"/><circle cx="68.3" cy="122.4" r="3.8" fill="#1b3a33"/><circle cx="72.8" cy="121.8" r="5.7" fill="#1b3a33"/><circle cx="77.5" cy="121.8" r="4.9" fill="#1b3a33"/><circle cx="80.1" cy="113.4" r="4.8" fill="#1b3a33"/><circle cx="83.4" cy="115.2" r="5.8" fill="#1b3a33"/><circle cx="87.9" cy="112.8" r="4.3" fill="#1b3a33"/><circle cx="91.4" cy="112.3" r="3.7" fill="#1b3a33"/><circle cx="95.6" cy="114.0" r="5.3" fill="#1b3a33"/><circle cx="99.9" cy="113.2" r="4.8" fill="#1b3a33"/><circle cx="102.6" cy="125.0" r="5.3" fill="#1b3a33"/><circle cx="107.2" cy="121.3" r="5.0" fill="#1b3a33"/><circle cx="111.6" cy="122.5" r="3.4" fill="#1b3a33"/><circle cx="114.3" cy="124.0" r="6.1" fill="#1b3a33"/><circle cx="117.3" cy="120.6" r="3.5" fill="#1b3a33"/><circle cx="121.6" cy="125.3" r="4.0" fill="#1b3a33"/><circle cx="126.0" cy="125.4" r="3.7" fill="#1b3a33"/><circle cx="129.0" cy="125.6" r="3.6" fill="#1b3a33"/><circle cx="131.7" cy="124.7" r="3.2" fill="#1b3a33"/><circle cx="135.1" cy="130.3" r="6.0" fill="#1b3a33"/><circle cx="139.0" cy="128.4" r="3.7" fill="#1b3a33"/><circle cx="142.2" cy="131.0" r="4.8" fill="#1b3a33"/><circle cx="145.7" cy="131.5" r="3.9" fill="#1b3a33"/><circle cx="148.5" cy="131.0" r="4.2" fill="#1b3a33"/><circle cx="151.7" cy="127.6" r="3.3" fill="#122a2c"/><circle cx="156.0" cy="130.2" r="4.8" fill="#122a2c"/><circle cx="160.6" cy="129.9" r="5.1" fill="#122a2c"/><circle cx="163.6" cy="131.5" r="5.9" fill="#122a2c"/><circle cx="167.5" cy="132.0" r="4.3" fill="#122a2c"/><circle cx="171.6" cy="131.3" r="5.7" fill="#122a2c"/><circle cx="175.8" cy="127.9" r="3.4" fill="#122a2c"/><circle cx="179.0" cy="125.9" r="4.1" fill="#122a2c"/><circle cx="182.1" cy="126.4" r="4.9" fill="#122a2c"/><circle cx="185.9" cy="126.7" r="5.9" fill="#122a2c"/><circle cx="190.3" cy="122.8" r="3.6" fill="#122a2c"/><circle cx="195.0" cy="125.4" r="4.3" fill="#122a2c"/><circle cx="199.1" cy="126.3" r="6.2" fill="#122a2c"/><circle cx="204.0" cy="126.5" r="5.7" fill="#122a2c"/></g><rect x="0" y="124" width="200" height="26" fill="url(#g6t)"/><g filter="url(#g6b0)"><circle cx="135.2" cy="137.3" r="4.5" fill="#1a3a34" opacity=".8"/><circle cx="83.7" cy="117.2" r="2.6" fill="#1e4038" opacity=".8"/><circle cx="106.1" cy="147.1" r="3.6" fill="#224840" opacity=".8"/><circle cx="129.4" cy="144.1" r="3.0" fill="#16302e" opacity=".8"/><circle cx="54.0" cy="144.6" r="4.2" fill="#132a2a" opacity=".8"/><circle cx="78.2" cy="142.5" r="2.7" fill="#16302e" opacity=".8"/><circle cx="95.4" cy="123.7" r="2.7" fill="#224840" opacity=".8"/><circle cx="21.8" cy="118.3" r="4.0" fill="#16302e" opacity=".8"/><circle cx="152.1" cy="149.6" r="3.8" fill="#224840" opacity=".8"/><circle cx="163.3" cy="130.2" r="3.9" fill="#1a3a34" opacity=".8"/><circle cx="64.9" cy="129.1" r="3.0" fill="#132a2a" opacity=".8"/><circle cx="29.0" cy="127.2" r="4.6" fill="#16302e" opacity=".8"/><circle cx="175.8" cy="141.1" r="5.0" fill="#132a2a" opacity=".8"/><circle cx="148.5" cy="133.1" r="4.1" fill="#1a3a34" opacity=".8"/><circle cx="8.5" cy="145.2" r="4.1" fill="#224840" opacity=".8"/><circle cx="199.3" cy="143.0" r="4.8" fill="#1a3a34" opacity=".8"/><circle cx="38.3" cy="122.8" r="3.1" fill="#1a3a34" opacity=".8"/><circle cx="189.6" cy="130.3" r="3.4" fill="#224840" opacity=".8"/><circle cx="105.5" cy="138.5" r="2.7" fill="#1a3a34" opacity=".8"/><circle cx="165.9" cy="138.7" r="4.9" fill="#1a3a34" opacity=".8"/><circle cx="45.8" cy="139.9" r="3.6" fill="#1a3a34" opacity=".8"/><circle cx="40.0" cy="146.8" r="2.9" fill="#1e4038" opacity=".8"/><circle cx="138.6" cy="145.0" r="2.9" fill="#1a3a34" opacity=".8"/><circle cx="97.2" cy="117.6" r="3.6" fill="#1e4038" opacity=".8"/><circle cx="135.2" cy="127.4" r="3.7" fill="#1a3a34" opacity=".8"/><circle cx="6.2" cy="130.1" r="3.5" fill="#132a2a" opacity=".8"/><circle cx="23.6" cy="127.4" r="3.8" fill="#16302e" opacity=".8"/><circle cx="157.5" cy="131.9" r="4.7" fill="#224840" opacity=".8"/><circle cx="36.0" cy="149.5" r="3.1" fill="#16302e" opacity=".8"/><circle cx="151.7" cy="149.7" r="2.8" fill="#1a3a34" opacity=".8"/><circle cx="27.1" cy="120.1" r="4.9" fill="#132a2a" opacity=".8"/><circle cx="98.0" cy="127.8" r="4.5" fill="#132a2a" opacity=".8"/><circle cx="23.2" cy="119.0" r="2.9" fill="#132a2a" opacity=".8"/><circle cx="188.2" cy="147.4" r="4.8" fill="#1a3a34" opacity=".8"/><circle cx="70.8" cy="138.3" r="2.6" fill="#1a3a34" opacity=".8"/><circle cx="83.1" cy="135.0" r="3.4" fill="#132a2a" opacity=".8"/><circle cx="118.3" cy="139.8" r="5.0" fill="#1e4038" opacity=".8"/><circle cx="137.4" cy="131.0" r="3.1" fill="#16302e" opacity=".8"/><circle cx="174.3" cy="142.3" r="4.9" fill="#224840" opacity=".8"/><circle cx="63.5" cy="141.8" r="4.3" fill="#132a2a" opacity=".8"/><circle cx="157.7" cy="149.8" r="2.9" fill="#132a2a" opacity=".8"/><circle cx="43.1" cy="124.2" r="4.6" fill="#1a3a34" opacity=".8"/><circle cx="136.8" cy="140.6" r="4.7" fill="#1a3a34" opacity=".8"/><circle cx="123.3" cy="131.1" r="2.7" fill="#132a2a" opacity=".8"/><circle cx="129.7" cy="133.5" r="3.9" fill="#224840" opacity=".8"/><circle cx="78.0" cy="123.3" r="4.2" fill="#132a2a" opacity=".8"/><circle cx="61.0" cy="132.1" r="2.6" fill="#1e4038" opacity=".8"/><circle cx="84.0" cy="133.6" r="4.0" fill="#224840" opacity=".8"/><circle cx="87.4" cy="149.5" r="3.3" fill="#224840" opacity=".8"/><circle cx="151.8" cy="142.6" r="4.0" fill="#224840" opacity=".8"/><circle cx="18.9" cy="126.1" r="4.8" fill="#132a2a" opacity=".8"/><circle cx="75.4" cy="148.0" r="4.5" fill="#132a2a" opacity=".8"/><circle cx="135.2" cy="136.2" r="3.1" fill="#224840" opacity=".8"/><circle cx="174.4" cy="131.2" r="2.7" fill="#1e4038" opacity=".8"/><circle cx="137.7" cy="128.1" r="3.5" fill="#16302e" opacity=".8"/><circle cx="124.5" cy="142.7" r="4.1" fill="#16302e" opacity=".8"/><circle cx="42.7" cy="128.7" r="3.7" fill="#1a3a34" opacity=".8"/><circle cx="166.6" cy="140.4" r="3.4" fill="#224840" opacity=".8"/><circle cx="6.5" cy="148.2" r="4.2" fill="#1a3a34" opacity=".8"/><circle cx="56.3" cy="125.7" r="3.1" fill="#1a3a34" opacity=".8"/><circle cx="25.9" cy="118.7" r="4.3" fill="#1e4038" opacity=".8"/><circle cx="110.7" cy="144.1" r="2.7" fill="#224840" opacity=".8"/><circle cx="58.4" cy="134.4" r="4.0" fill="#1a3a34" opacity=".8"/><circle cx="71.2" cy="133.7" r="4.4" fill="#16302e" opacity=".8"/><circle cx="27.8" cy="134.5" r="4.0" fill="#224840" opacity=".8"/><circle cx="174.6" cy="141.4" r="4.2" fill="#224840" opacity=".8"/><circle cx="33.3" cy="139.9" r="3.4" fill="#224840" opacity=".8"/><circle cx="22.7" cy="130.5" r="3.0" fill="#16302e" opacity=".8"/><circle cx="63.4" cy="145.0" r="3.0" fill="#1e4038" opacity=".8"/><circle cx="177.3" cy="130.0" r="3.4" fill="#224840" opacity=".8"/><circle cx="30.1" cy="143.4" r="4.5" fill="#132a2a" opacity=".8"/><circle cx="65.1" cy="129.3" r="3.8" fill="#1e4038" opacity=".8"/><circle cx="62.5" cy="137.7" r="3.9" fill="#1a3a34" opacity=".8"/><circle cx="65.2" cy="145.8" r="2.5" fill="#224840" opacity=".8"/><circle cx="50.6" cy="148.2" r="4.1" fill="#1a3a34" opacity=".8"/><circle cx="26.2" cy="129.0" r="3.7" fill="#16302e" opacity=".8"/><circle cx="93.6" cy="125.1" r="3.4" fill="#16302e" opacity=".8"/><circle cx="36.4" cy="141.3" r="4.2" fill="#132a2a" opacity=".8"/><circle cx="10.4" cy="135.0" r="4.1" fill="#224840" opacity=".8"/><circle cx="153.9" cy="130.6" r="4.5" fill="#1e4038" opacity=".8"/><circle cx="117.9" cy="141.3" r="3.7" fill="#1e4038" opacity=".8"/><circle cx="66.5" cy="130.8" r="3.1" fill="#224840" opacity=".8"/><circle cx="55.2" cy="135.5" r="2.6" fill="#224840" opacity=".8"/><circle cx="164.4" cy="134.4" r="3.9" fill="#132a2a" opacity=".8"/><circle cx="140.8" cy="142.1" r="4.7" fill="#1a3a34" opacity=".8"/><circle cx="119.7" cy="139.8" r="2.7" fill="#1a3a34" opacity=".8"/><circle cx="40.8" cy="132.5" r="3.0" fill="#16302e" opacity=".8"/><circle cx="0.9" cy="136.8" r="4.9" fill="#132a2a" opacity=".8"/><circle cx="163.5" cy="132.1" r="4.4" fill="#224840" opacity=".8"/><circle cx="69.2" cy="122.2" r="4.8" fill="#16302e" opacity=".8"/></g><rect x="0" y="126" width="200" height="24" fill="url(#g6d)"/></svg></div>
<div class="cell" style="left:10px;top:482px;" id="c7"><svg width="200" height="150" viewBox="0 0 200 150"><defs><linearGradient id="g7p" x1="0" y1="0" x2="0" y2="1"><stop offset="0" stop-color="#a898b4"/><stop offset=".05" stop-color="#807c9e"/><stop offset=".12" stop-color="#7a769c"/><stop offset=".17" stop-color="#a8a2d0"/><stop offset=".24" stop-color="#bab6e0"/><stop offset=".285" stop-color="#9c96c6"/><stop offset="0.31" stop-color="#5c568a"/><stop offset=".34" stop-color="#8680b4"/><stop offset=".39" stop-color="#9a96c8"/><stop offset=".42" stop-color="#d8dcfa"/><stop offset=".5" stop-color="#e6eaff"/><stop offset=".565" stop-color="#d8dcfa"/><stop offset="0.59" stop-color="#6c6698"/><stop offset=".64" stop-color="#8a84b8"/><stop offset=".7" stop-color="#a8a4d4"/><stop offset=".76" stop-color="#9690c2"/><stop offset=".82" stop-color="#7a74a6"/><stop offset=".9" stop-color="#6a6294"/><stop offset="1" stop-color="#9a80b0"/></linearGradient><radialGradient id="g7r" cx=".5" cy=".5" r=".5"><stop offset="0" stop-color="#000" stop-opacity="0"/><stop offset=".86" stop-color="#302048" stop-opacity="0"/><stop offset=".95" stop-color="#c06890" stop-opacity=".35"/><stop offset="1" stop-color="#f078a0" stop-opacity=".85"/></radialGradient><linearGradient id="g7bg" x1="0" y1="0" x2="0" y2="1"><stop offset="0" stop-color="#222020"/><stop offset=".35" stop-color="#2c2a29"/><stop offset=".55" stop-color="#403d3c"/><stop offset=".72" stop-color="#34312f"/><stop offset="1" stop-color="#242120"/></linearGradient><filter id="g7b" x="-50%" y="-50%" width="200%" height="200%"><feGaussianBlur stdDeviation="1.5"/></filter><filter id="g7b3" x="-50%" y="-50%" width="200%" height="200%"><feGaussianBlur stdDeviation="3.5"/></filter><filter id="g7b0"><feGaussianBlur stdDeviation=".6"/></filter><filter id="g7n" x="0" y="0" width="100%" height="100%"><feTurbulence type="fractalNoise" baseFrequency="0.02 0.2" numOctaves="3" seed="2"/><feColorMatrix type="matrix" values="0 0 0 0 0.95  0 0 0 0 0.95  0 0 0 0 1  0 0 0 2.2 -1.0"/></filter><clipPath id="g7c"><ellipse cx="99" cy="75.4" rx="64" ry="60.6"/></clipPath></defs><rect width="200" height="150" fill="url(#g7bg)"/><rect x="0" y="8" width="200" height="5" fill="#000" opacity=".08"/><rect x="0" y="30" width="200" height="5" fill="#000" opacity=".08"/><rect x="0" y="41" width="200" height="5" fill="#000" opacity=".08"/><rect x="0" y="118" width="200" height="5" fill="#000" opacity=".08"/><rect x="0" y="131" width="200" height="5" fill="#000" opacity=".08"/><rect x="0" y="142" width="200" height="5" fill="#000" opacity=".08"/><ellipse cx="99" cy="75.4" rx="68" ry="64" fill="#c8c8e0" opacity=".35" filter="url(#g7b3)"/><path d="M4.9 102.4 L40 38 M4.9 102.4 L31 148 M4.9 102.4 L40 102.4 M4.9 102.4 L-10 76 M4.9 102.4 L-8 126 M4.9 102.4 L4.9 84 M4.9 102.4 L4.9 120" stroke="#e8e8e8" stroke-width="2.2" opacity=".55" filter="url(#g7b)"/><circle cx="4.9" cy="102.4" r="7" fill="#fff" opacity=".5" filter="url(#g7b)"/><circle cx="4.9" cy="102.4" r="2.6" fill="#fff"/><ellipse cx="99" cy="75.4" rx="64.6" ry="61.2" fill="#f8d0e0" opacity=".9" filter="url(#g7b0)"/><g clip-path="url(#g7c)"><rect x="35" y="14.8" width="128" height="121.2" fill="url(#g7p)"/><rect x="35" y="14.8" width="128" height="121.2" filter="url(#g7n)" opacity=".35"/><ellipse cx="137.4" cy="99.5" rx="6.6" ry="4.6" fill="#fff" filter="url(#g7b0)"/><path d="M120 96 C128 92 134 92 140 88" stroke="#d8d8f8" stroke-width="2" fill="none" opacity=".6" filter="url(#g7b0)"/><circle cx="119" cy="100.6" r="1.5" fill="#0a0a18"/><circle cx="60" cy="104" r=".9" fill="#2a2040"/><ellipse cx="88" cy="113" rx="2" ry="1.2" fill="#e8e8ff" opacity=".8"/><ellipse cx="59" cy="37" rx="2" ry="1.4" fill="#e8e8ff" opacity=".7"/><ellipse cx="99" cy="75.4" rx="64" ry="60.6" fill="url(#g7r)"/></g></svg></div>
<div class="cell" style="left:213px;top:482px;" id="c8"><svg width="200" height="150" viewBox="0 0 200 150"><defs><linearGradient id="g8b" x1="0" y1="0" x2="0" y2="1"><stop offset="0" stop-color="#c4b498"/><stop offset=".07" stop-color="#d2c2a2"/><stop offset=".13" stop-color="#bc9c6c"/><stop offset=".2" stop-color="#ac8050"/><stop offset=".27" stop-color="#966a3e"/><stop offset="0.32" stop-color="#6e4c2e"/><stop offset=".36" stop-color="#4a3020"/><stop offset=".4" stop-color="#6a4c34"/><stop offset=".45" stop-color="#9a8068"/><stop offset=".5" stop-color="#a8987f"/><stop offset=".58" stop-color="#988878"/><stop offset="0.66" stop-color="#a29a90"/><stop offset=".72" stop-color="#7c6c5c"/><stop offset=".8" stop-color="#786c60"/><stop offset=".88" stop-color="#78808a"/><stop offset="1" stop-color="#5e6a7a"/></linearGradient><filter id="g8f1" x="-50%" y="-50%" width="200%" height="200%"><feGaussianBlur stdDeviation="1"/></filter><filter id="g8f2" x="-50%" y="-50%" width="200%" height="200%"><feGaussianBlur stdDeviation="2.5"/></filter><filter id="g8f4" x="-50%" y="-50%" width="200%" height="200%"><feGaussianBlur stdDeviation="5"/></filter><filter id="g8n" x="0" y="0" width="100%" height="100%"><feTurbulence type="fractalNoise" baseFrequency="0.018 0.09" numOctaves="4" seed="6"/><feColorMatrix type="matrix" values="0 0 0 0 0.22  0 0 0 0 0.14  0 0 0 0 0.08  0 0 0 3.0 -1.3"/></filter><filter id="g8w" x="0" y="0" width="100%" height="100%"><feTurbulence type="fractalNoise" baseFrequency="0.03 0.1" numOctaves="3" seed="12"/><feColorMatrix type="matrix" values="0 0 0 0 0.9  0 0 0 0 0.85  0 0 0 0 0.76  0 0 0 2.8 -1.45"/></filter><radialGradient id="g8s"><stop offset="0" stop-color="#b07038"/><stop offset=".6" stop-color="#b8763c"/><stop offset=".9" stop-color="#c08a58"/><stop offset="1" stop-color="#c09c78"/></radialGradient></defs><rect width="200" height="150" fill="url(#g8b)"/><rect width="200" height="150" filter="url(#g8n)" opacity=".85"/><ellipse cx="72" cy="3" rx="36" ry="6" fill="#70787e" opacity=".8" filter="url(#g8f2)"/><ellipse cx="150" cy="6" rx="36" ry="8" fill="#e8e0d0" opacity=".7" filter="url(#g8f2)"/><ellipse cx="20" cy="10" rx="26" ry="7" fill="#d8cab0" opacity=".7" filter="url(#g8f2)"/><ellipse cx="180" cy="12" rx="24" ry="7" fill="#d0c0a8" opacity=".6" filter="url(#g8f2)"/><path d="M52 4 C64 10 66 20 52 28" stroke="#66625c" stroke-width="10" fill="none" opacity=".4" filter="url(#g8f4)"/><path d="M0 50 C40 46 90 50 130 48 C160 46 180 44 200 46 L200 56 C160 58 120 60 80 60 C50 60 20 62 0 60 Z" fill="#3e2a1e" opacity=".8" filter="url(#g8f2)"/><path d="M0 72 C20 66 40 70 56 60 C70 52 84 58 96 64 C110 58 120 60 136 56 C150 54 170 54 200 52 L200 60 C170 62 150 64 132 68 C116 72 104 78 90 80 C70 84 50 82 30 86 C16 88 6 86 0 88 Z" fill="#dcd0bc" opacity=".8" filter="url(#g8f1)"/><mask id="g8m"><ellipse cx="56" cy="72" rx="70" ry="16" fill="#fff" filter="url(#g8f4)"/></mask><g opacity=".65" mask="url(#g8m)"><rect x="0" y="40" width="200" height="70" filter="url(#g8w)"/></g><path d="M150 62 C170 58 190 60 200 60 L200 96 C180 94 166 86 150 62 Z" fill="#7a624c" opacity=".55" filter="url(#g8f2)"/><path d="M0 88 C30 86 60 88 84 98 C70 104 40 104 0 104 Z" fill="#b0aca4" opacity=".75" filter="url(#g8f2)"/><ellipse cx="121.8" cy="89.3" rx="39" ry="18" fill="#54443a" opacity=".9" filter="url(#g8f2)"/><ellipse cx="121.8" cy="89.8" rx="30" ry="13" fill="#b8a088" opacity=".75" filter="url(#g8f1)"/><ellipse cx="121.8" cy="90.4" rx="24" ry="10" fill="url(#g8s)" filter="url(#g8f1)"/><ellipse cx="121.8" cy="90.4" rx="16" ry="5.5" fill="none" stroke="#a06830" stroke-width="1.4" opacity=".5" filter="url(#g8f1)"/><ellipse cx="141.5" cy="118.5" rx="13" ry="7" fill="#d4e2f0" opacity="0.95" filter="url(#g8f1)"/><ellipse cx="157.7" cy="130.9" rx="11" ry="6" fill="#b8cce0" opacity="0.8" filter="url(#g8f1)"/><ellipse cx="186.5" cy="135.4" rx="7" ry="4" fill="#d8e8f4" opacity="0.9" filter="url(#g8f1)"/><ellipse cx="20.7" cy="133.1" rx="10" ry="5" fill="#8ea4bc" opacity="0.8" filter="url(#g8f1)"/><ellipse cx="42" cy="137" rx="4" ry="2.4" fill="#e8e8e8" opacity="0.8" filter="url(#g8f1)"/><ellipse cx="112" cy="136" rx="5" ry="3" fill="#c8d4e0" opacity="0.7" filter="url(#g8f1)"/><ellipse cx="190" cy="87" rx="8" ry="4" fill="#d8c8b0" opacity="0.7" filter="url(#g8f1)"/><path d="M64 132 C74 126 84 130 96 126" stroke="#a8b8c8" stroke-width="3" fill="none" opacity=".7" filter="url(#g8f1)"/><circle cx="132.6" cy="31.4" r="5.6" fill="#060404"/><circle cx="35.3" cy="111.8" r="5.4" fill="#a89880"/><path d="M35.3 106.4 A5.4 5.4 0 0 0 35.3 117.2 A3 5.4 0 0 1 35.3 106.4 Z" fill="#302820" opacity=".9"/></svg></div>

<!-- CONTEXT MENU -->
<div class="abs" id="menu" style="left:178px;top:253px;width:152px;height:52px;background:#fff;box-sizing:border-box;border:1px solid #eeeeee;box-shadow:2px 2px 4px rgba(0,0,0,.4);">
  <div class="abs" style="left:1px;top:1px;width:24px;height:48px;background:#f0f0f0"></div>
  <div class="abs" style="left:1px;top:1px;width:148px;height:24px;box-sizing:border-box;border:1px solid #0a2f7f;background:#a9d5ff"></div>
  <svg class="abs" style="left:4px;top:6px" width="16" height="15" viewBox="0 0 16 15">
    <rect x="0.75" y="0.75" width="14.5" height="13" rx="2" fill="#a9d5ff" stroke="#1565c0" stroke-width="1.5"/>
    <circle cx="4.8" cy="4.6" r="1.1" fill="#1565c0"/>
    <path d="M1.5 13 L1.5 11.5 L5.2 8.2 L7 9.8 L10.2 5.6 L14.5 11 L14.5 13 Z" fill="#1565c0"/>
  </svg>
  <svg class="abs" style="left:4.8px;top:30.2px" width="14" height="14" viewBox="0 0 14 14"><circle cx="7" cy="7" r="6.3" fill="#1b2c8f"/><path d="M2.6 8.6 L2.6 5.6 L4.2 8.6 L4.2 5.6 M5.2 8.6 L6 5.6 L6.8 8.6 M9.2 5.9 C8.2 5.2 7.4 6.2 8.4 7 C9.4 7.8 8.6 8.9 7.5 8.2 M9.9 8.6 L10.7 5.6 L11.5 8.6" stroke="#fff" stroke-width=".9" fill="none" stroke-linejoin="round"/><path d="M1 10.6 C5 9.4 9.4 6.4 13.6 1.6" stroke="#e8384a" stroke-width="1" fill="none" stroke-linecap="round"/><circle cx="4" cy="3.6" r=".4" fill="#fff"/><circle cx="9.6" cy="10.6" r=".4" fill="#fff"/><circle cx="10.4" cy="3.6" r=".35" fill="#fff"/></svg><div class="abs" style="left:35px;top:6px;font-size:12px;line-height:15px;white-space:nowrap;"><span class="sx" style="transform:scaleX(.956)">Use this Image</span></div>
  <div class="abs" style="left:35px;top:30px;font-size:12px;line-height:15px;white-space:nowrap;"><a class="lnk sx" style="transform:scaleX(.965)">Preview Image</a></div>
</div>
<div class="green" style="left:166px;top:244px;width:169px;height:37px;box-shadow:0 3px 5px rgba(0,0,0,.48);"></div>

<!-- BOTTOM BAR -->
<div class="btn" style="left:9px;top:679px;width:80px;"></div>
<svg class="abs" style="left:13px;top:682px" width="18" height="18" viewBox="0 0 18 18">
  <circle cx="9" cy="9" r="7.2" fill="#fff" stroke="#1a63b8" stroke-width="1.3"/>
  <text x="9" y="13" text-anchor="middle" font-family="Liberation Sans, sans-serif" font-size="11.5" fill="#1a63b8">?</text>
</svg>
<div class="abs" style="left:37px;top:684px;font-size:12px;line-height:15px;"><span class="sx" style="transform:scaleX(.968)">Help</span></div>
<svg class="abs" style="left:75px;top:688px" width="9" height="6" viewBox="0 0 9 6"><path d="M0 0 L8.4 0 L4.2 6 Z" fill="#000"/></svg>
<svg class="abs" style="left:105.3px;top:684.2px" width="14" height="14" viewBox="0 0 14 14"><circle cx="7" cy="7" r="6.3" fill="#1b2c8f"/><path d="M2.6 8.6 L2.6 5.6 L4.2 8.6 L4.2 5.6 M5.2 8.6 L6 5.6 L6.8 8.6 M9.2 5.9 C8.2 5.2 7.4 6.2 8.4 7 C9.4 7.8 8.6 8.9 7.5 8.2 M9.9 8.6 L10.7 5.6 L11.5 8.6" stroke="#fff" stroke-width=".9" fill="none" stroke-linejoin="round"/><path d="M1 10.6 C5 9.4 9.4 6.4 13.6 1.6" stroke="#e8384a" stroke-width="1" fill="none" stroke-linecap="round"/><circle cx="4" cy="3.6" r=".4" fill="#fff"/><circle cx="9.6" cy="10.6" r=".4" fill="#fff"/><circle cx="10.4" cy="3.6" r=".35" fill="#fff"/></svg><div class="abs" style="left:124px;top:684px;font-size:12px;line-height:15px;white-space:nowrap;"><a class="lnk sx" style="transform:scaleX(.994)">Astronomy Picture of the Day</a></div>
<div class="abs" style="left:305px;top:684px;font-size:12px;line-height:15px;white-space:nowrap;"><span class="sx" style="transform:scaleX(.954)">Images Found: 8</span></div>
<div class="btn dis" style="left:617px;top:679px;width:144px;"><span class="sx" style="transform:scaleX(.987)">Load More Images</span></div>
<div class="btn" style="left:769px;top:679px;width:112px;"><span class="sx" style="transform:scaleX(.944)">Delete Cache</span></div>
<div class="btn" style="left:889px;top:679px;width:80px;"><span class="sx" style="transform:scaleX(.932)">Close</span></div>
</body>
</html>
